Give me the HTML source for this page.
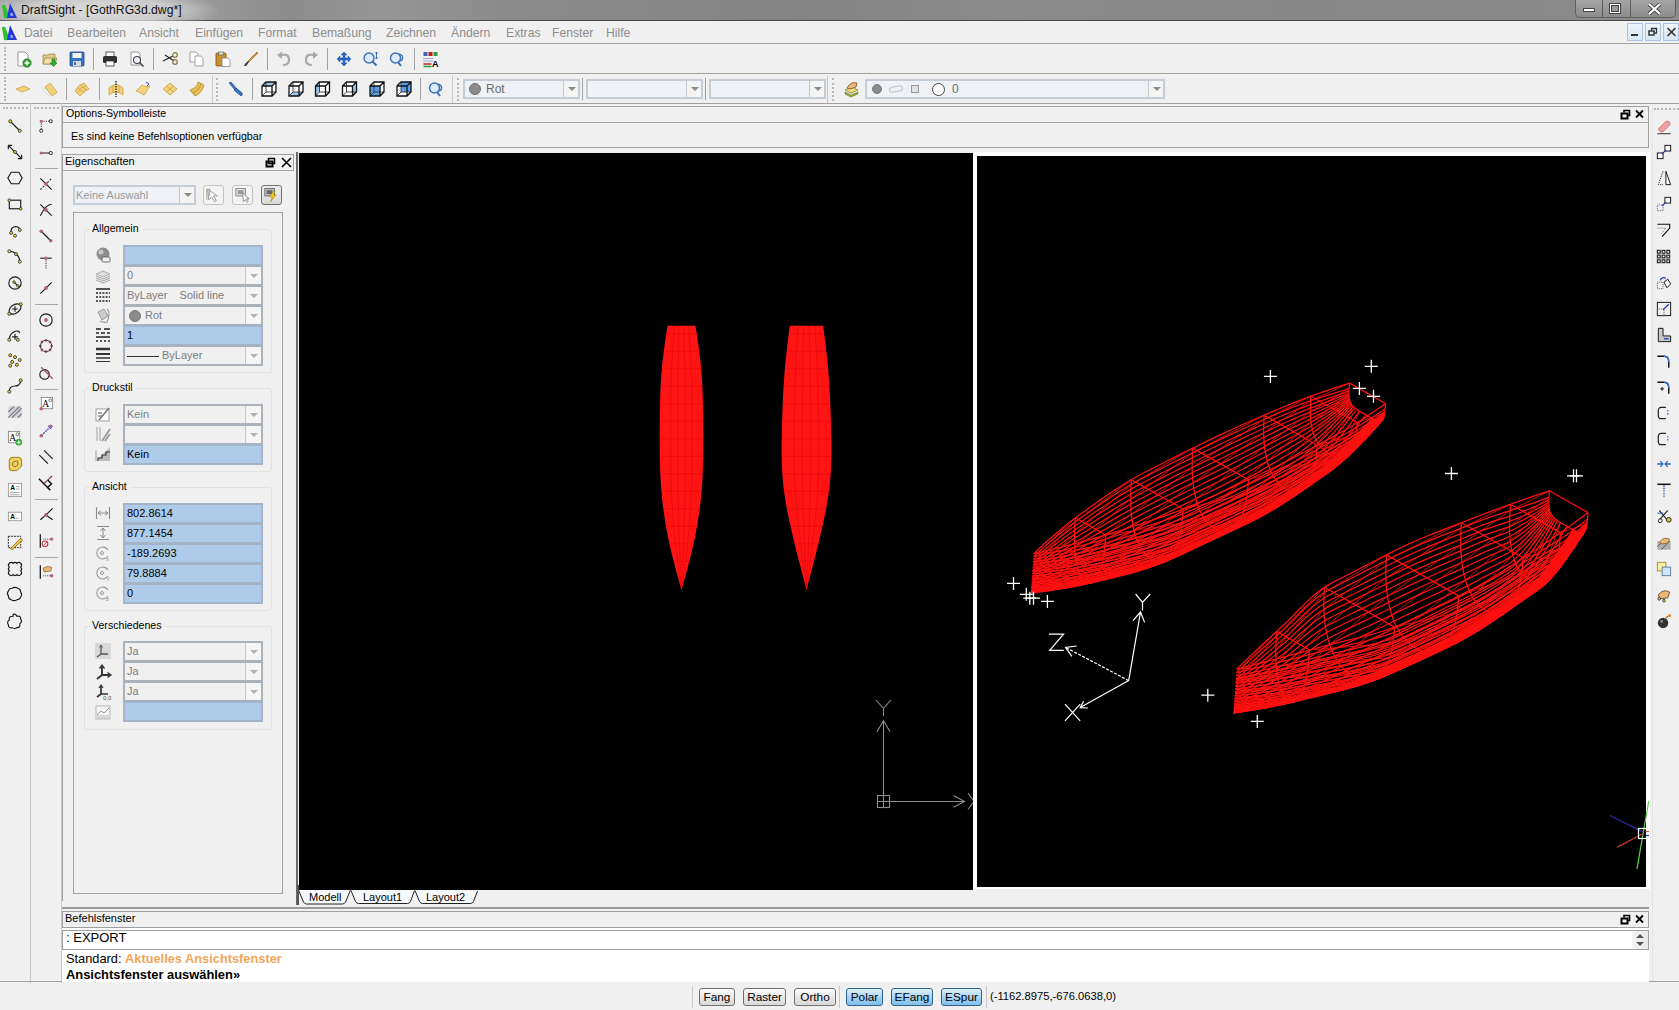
<!DOCTYPE html>
<html><head><meta charset="utf-8">
<style>
*{box-sizing:border-box;margin:0;padding:0}
html,body{width:1679px;height:1010px;overflow:hidden;background:#f0f0f0;font-family:"Liberation Sans",sans-serif;font-size:12px;color:#000}
.a{position:absolute}
#title{left:0;top:0;width:1679px;height:21px;background:linear-gradient(90deg,#a2a2a2 0,#9a9a9a 200px,#8c8c8c 290px,#969696 380px,#8a8a8a 520px,#848484 800px,#8a8a8a 1000px,#878787 1300px,#8a8a8a 1679px);border-bottom:1px solid #4a4a4a}
#title .t{left:21px;top:3px;font-size:12.2px;color:#111}
#menu{left:0;top:21px;width:1679px;height:23px;background:#f0f0f0;border-bottom:1px solid #a0a0a0}
#menu span{position:absolute;top:5px;color:#8d8d8d;font-size:12.2px}
.tb{left:0;width:1679px;height:30px;background:#f0f0f0;border-bottom:1px solid #a0a0a0}
.sep{position:absolute;width:1px;background:#a0a0a0}
.grip{position:absolute;width:2px;border-left:2px dotted #b8b8b8}
.combo{position:absolute;height:19px;border:2px solid #c4cdd6;background:#eef2f7;font-size:12px;color:#6d6d6d}
.combo .dd{position:absolute;right:0;top:0;width:15px;height:15px;border-left:1px solid #c8c8c8;background:#f4f4f4}
.combo .dd:after{content:"";position:absolute;left:4px;top:6px;border-left:4px solid transparent;border-right:4px solid transparent;border-top:4px solid #8a8a8a}
.vp{position:absolute;background:#000}
.field{position:absolute;left:123px;width:140px;height:21px;border:2px solid #a9b1ba;background:#f0f0f0;color:#7d7d7d;font-size:11px;padding:2px 0 0 2px;white-space:nowrap}
.field.b{background:#aecbea;color:#000;border-color:#a4b4c6}
.field .dd{position:absolute;right:0;top:0;width:16px;height:17px;border-left:1px solid #c8c8c8;background:#f5f5f5}
.field .dd:after{content:"";position:absolute;left:4px;top:7px;border-left:4px solid transparent;border-right:4px solid transparent;border-top:4px solid #b0b0b0}
.grp{position:absolute;left:84px;width:188px;border:1px solid #e2e2e2;border-radius:3px}
.gl{position:absolute;left:91px;font-size:10.6px;background:#f0f0f0;padding:0 3px 0 1px}
.btn{position:absolute;top:988px;height:18px;border:1px solid #707070;border-radius:3px;background:linear-gradient(#fafafa,#e8e8e8 50%,#d8d8d8);font-size:11.8px;text-align:center;padding-top:1px}
.btn.on{border-color:#2c628b;background:linear-gradient(#e0f0fb,#a8d4f4 50%,#80c0ec)}
</style></head><body>

<!-- title bar -->
<div id="title" class="a">
  <div class="a" style="left:0;top:0;width:260px;height:21px;background:radial-gradient(ellipse 120px 22px at 100px 11px,rgba(222,222,222,0.95) 0%,rgba(215,215,215,0.8) 60%,rgba(200,200,200,0) 100%)"></div>
  <svg class="a" style="left:1px;top:2px" width="16" height="17"><path d="M1 4 Q1 2 4 3 L9 15 Q6 17 3 16 Z" fill="#30c030"/><polygon points="9,1 16,16 6,16" fill="#2038d8"/><text x="9" y="14" font-size="6" fill="#fff" font-family="Liberation Sans">s</text></svg>
  <div class="a t">DraftSight - [GothRG3d.dwg*]</div>
  <div class="a" style="left:1575px;top:0;width:101px;height:18px;border:1px solid #5e5e5e;border-top:none;border-radius:0 0 5px 5px;background:linear-gradient(#a4a4a4,#8c8c8c)"></div>
  <div class="a" style="left:1602px;top:0;width:1px;height:17px;background:#5e5e5e"></div>
  <div class="a" style="left:1630px;top:0;width:1px;height:17px;background:#5e5e5e"></div>
  <div class="a" style="left:1583px;top:8px;width:12px;height:4px;background:#fff;border:1px solid #444"></div>
  <div class="a" style="left:1609px;top:3px;width:12px;height:11px;border:1px solid #444;background:#fff"></div>
  <div class="a" style="left:1611px;top:5px;width:8px;height:7px;border:1px solid #444;background:#9a9a9a"></div>
  <svg class="a" style="left:1647px;top:3px" width="15" height="12"><path d="M2 1 L13 11 M13 1 L2 11" stroke="#444" stroke-width="4"/><path d="M2 1 L13 11 M13 1 L2 11" stroke="#fff" stroke-width="2.2"/></svg>
</div>

<!-- menu bar -->
<div id="menu" class="a">
  <svg class="a" style="left:1px;top:3px" width="16" height="17"><path d="M1 4 Q1 2 4 3 L9 15 Q6 17 3 16 Z" fill="#30c030"/><polygon points="9,1 16,16 6,16" fill="#2038d8"/><text x="9" y="14" font-size="6" fill="#fff" font-family="Liberation Sans">s</text></svg>
  <span style="left:24px">Datei</span>
  <span style="left:67px">Bearbeiten</span>
  <span style="left:139px">Ansicht</span>
  <span style="left:195px">Einfügen</span>
  <span style="left:258px">Format</span>
  <span style="left:312px">Bemaßung</span>
  <span style="left:386px">Zeichnen</span>
  <span style="left:451px">Ändern</span>
  <span style="left:506px">Extras</span>
  <span style="left:552px">Fenster</span>
  <span style="left:606px">Hilfe</span>
  <div class="a" style="left:1627px;top:2px;width:16px;height:18px;border:1px solid #a8c4e0;background:linear-gradient(#eef4fb,#d8e6f4)"></div>
  <div class="a" style="left:1631px;top:13px;width:7px;height:2px;background:#333"></div>
  <div class="a" style="left:1645px;top:2px;width:16px;height:18px;border:1px solid #a8c4e0;background:linear-gradient(#eef4fb,#d8e6f4)"></div>
  <svg class="a" style="left:1648px;top:6px" width="11" height="10"><rect x="1" y="4" width="5" height="4" fill="none" stroke="#333" stroke-width="1.5"/><path d="M3.5 3.5 V1.5 H8.5 V6 H6.5" fill="none" stroke="#333" stroke-width="1.3"/></svg>
  <div class="a" style="left:1663px;top:2px;width:16px;height:18px;border:1px solid #a8c4e0;background:linear-gradient(#eef4fb,#d8e6f4)"></div>
  <svg class="a" style="left:1666px;top:6px" width="11" height="10"><path d="M1.5 1 L9.5 9 M9.5 1 L1.5 9" stroke="#333" stroke-width="1.6"/></svg>
</div>

<!-- toolbar rows -->
<div class="a tb" style="top:44px"></div>
<div class="a tb" style="top:74px"></div>
<div class="grip" style="left:4px;top:47px;height:24px"></div>
<div class="grip" style="left:4px;top:77px;height:24px"></div>


<!-- toolbar 2 combos -->
<div class="a" style="left:212px;top:76px;width:1px;height:27px;background:#c8c8c8"></div>
<div class="grip" style="left:216px;top:78px;height:23px"></div>
<div class="a" style="left:452px;top:76px;width:1px;height:27px;background:#c8c8c8"></div>
<div class="grip" style="left:457px;top:78px;height:23px"></div>
<div class="combo" style="left:463px;top:79px;width:117px;height:20px"><span class="a" style="left:4px;top:2px;width:12px;height:12px;border-radius:50%;background:#8a8a8a;border:1px solid #707070"></span><span class="a" style="left:21px;top:1px;font-size:12px;color:#6a6a6a">Rot</span><div class="dd" style="height:16px"></div></div>
<div class="a" style="left:582px;top:78px;width:1px;height:22px;background:#a0a0a0"></div>
<div class="combo" style="left:586px;top:79px;width:117px;height:20px"><div class="dd" style="height:16px"></div></div>
<div class="a" style="left:705px;top:78px;width:1px;height:22px;background:#a0a0a0"></div>
<div class="combo" style="left:709px;top:79px;width:117px;height:20px"><div class="dd" style="height:16px"></div></div>
<div class="a" style="left:827px;top:76px;width:1px;height:27px;background:#c8c8c8"></div>
<div class="grip" style="left:832px;top:78px;height:23px"></div>
<div class="combo" style="left:865px;top:79px;width:300px;height:20px"><div class="dd" style="height:16px"></div>
 <span class="a" style="left:5px;top:3px;width:10px;height:10px;border-radius:50%;background:#8a8a8a;border:1px solid #777"></span>
 <span class="a" style="left:22px;top:5px;width:14px;height:6px;border-radius:3px;border:1px solid #c0c0c0;transform:rotate(-10deg)"></span>
 <span class="a" style="left:44px;top:4px;width:8px;height:8px;border:1px solid #999;background:#e0e0e0"></span>
 <span class="a" style="left:65px;top:2px;width:13px;height:13px;border-radius:50%;border:1px solid #444;background:#fff"></span>
 <span class="a" style="left:85px;top:1px;font-size:12px;color:#6a6a6a">0</span>
</div>

<!-- Options-Symbolleiste -->
<div class="a" style="left:62px;top:106px;width:1587px;height:17px;border:1px solid #a0a0a0;border-bottom:1px solid #a0a0a0;background:#f0f0f0"></div>
<div class="a" style="left:66px;top:107px;font-size:10.6px">Options-Symbolleiste</div>
<div class="a" style="left:62px;top:123px;width:1587px;height:25px;border:1px solid #a0a0a0;border-top:none;background:#f0f0f0"></div>
<div class="a" style="left:71px;top:130px;font-size:10.7px">Es sind keine Befehlsoptionen verfügbar</div>

<!-- left tool columns -->
<div class="a" style="left:30px;top:103px;width:1px;height:880px;background:#c8c8c8"></div>
<div class="a" style="left:61px;top:103px;width:1px;height:880px;background:#c8c8c8"></div>

<!-- viewports -->
<div class="vp" style="left:299px;top:153px;width:674px;height:737px"></div>
<div class="a" style="left:973px;top:152px;width:677px;height:737px;background:#fff"></div>
<div class="vp" style="left:977px;top:156px;width:669px;height:731px"></div>



<!-- properties panel -->
<div class="a" style="left:62px;top:154px;width:232px;height:17px;border:1px solid #a0a0a0;background:#f0f0f0"></div>
<div class="a" style="left:65px;top:155px;font-size:11px">Eigenschaften</div>
<svg class="a" style="left:265px;top:157px" width="30" height="11"><rect x="1.5" y="4.5" width="6" height="5" fill="none" stroke="#000" stroke-width="2"/><rect x="3.5" y="1.5" width="6" height="5" fill="none" stroke="#000" stroke-width="1.5"/><path d="M17 1 L26 10 M26 1 L17 10" stroke="#000" stroke-width="1.6"/></svg>
<div class="a" style="left:296px;top:152px;width:2px;height:753px;background:#6a6a6a"></div>
<div class="a" style="left:62px;top:171px;width:1px;height:730px;background:#a0a0a0"></div>
<div class="combo" style="left:73px;top:185px;width:123px;height:20px"><span class="a" style="left:1px;top:2px;font-size:11px;color:#9a9a9a">Keine Auswahl</span><div class="dd" style="height:16px"></div></div>
<div class="a" style="left:203px;top:185px;width:21px;height:20px;border:1px solid #c4c4c4;border-radius:3px;background:#f4f4f4"></div>
<div class="a" style="left:232px;top:185px;width:21px;height:20px;border:1px solid #c4c4c4;border-radius:3px;background:#f4f4f4"></div>
<div class="a" style="left:261px;top:185px;width:21px;height:20px;border:1px solid #707070;border-radius:3px;background:linear-gradient(#f0f0f0,#d8d8d8)"></div>
<div class="a" style="left:73px;top:212px;width:210px;height:682px;border:1px solid #a0a0a0"></div>

<div class="grp" style="top:229px;height:144px"></div>
<div class="gl" style="top:222px">Allgemein</div>
<div class="field b" style="top:245px"></div>
<div class="field" style="top:265px">0<div class="dd"></div></div>
<div class="field" style="top:285px">ByLayer&nbsp;&nbsp;&nbsp;&nbsp;Solid line<div class="dd"></div></div>
<div class="field" style="top:305px;padding-left:20px">Rot<span class="a" style="left:4px;top:3px;width:12px;height:12px;border-radius:50%;background:#8a8a8a;border:1px solid #777"></span><div class="dd"></div></div>
<div class="field b" style="top:325px">1</div>
<div class="field" style="top:345px"><span style="display:inline-block;width:32px;height:1px;background:#333;vertical-align:middle;margin-right:3px"></span>ByLayer<div class="dd"></div></div>

<div class="grp" style="top:388px;height:84px"></div>
<div class="gl" style="top:381px">Druckstil</div>
<div class="field" style="top:404px">Kein<div class="dd"></div></div>
<div class="field" style="top:424px"><div class="dd"></div></div>
<div class="field b" style="top:444px">Kein</div>

<div class="grp" style="top:487px;height:124px"></div>
<div class="gl" style="top:480px">Ansicht</div>
<div class="field b" style="top:503px">802.8614</div>
<div class="field b" style="top:523px">877.1454</div>
<div class="field b" style="top:543px">-189.2693</div>
<div class="field b" style="top:563px">79.8884</div>
<div class="field b" style="top:583px">0</div>

<div class="grp" style="top:626px;height:104px"></div>
<div class="gl" style="top:619px">Verschiedenes</div>
<div class="field" style="top:641px">Ja<div class="dd"></div></div>
<div class="field" style="top:661px">Ja<div class="dd"></div></div>
<div class="field" style="top:681px">Ja<div class="dd"></div></div>
<div class="field b" style="top:701px"></div>

<!-- tabs -->
<div class="a" style="left:299px;top:890px;width:1351px;height:16px;background:#f0f0f0"></div>
<svg class="a" style="left:290px;top:885px" width="200" height="22"><g stroke="#222" stroke-width="1" fill="#f6f9fc">
<path d="M8.5 5 L13.5 17 Q14.5 19 16.5 19 L52.5 19 Q54.5 19 55.5 17 L60.5 5"/>
<path d="M61 5.5 L65.5 16.5 Q66.5 18.5 68.5 18.5 L117.5 18.5 Q119.5 18.5 120.5 16.5 L124.5 5.5"/>
<path d="M125 5.5 L129.5 16.5 Q130.5 18.5 132.5 18.5 L180.5 18.5 Q182.5 18.5 183.5 16.5 L187.5 6"/>
</g><path d="M8 0 V20" stroke="#555" stroke-width="2"/></svg>
<div class="a" style="left:309px;top:891px;font-size:11px">Modell</div>
<div class="a" style="left:363px;top:891px;font-size:11px">Layout1</div>
<div class="a" style="left:426px;top:891px;font-size:11px">Layout2</div>

<!-- command window -->
<div class="a" style="left:62px;top:907px;width:1587px;height:2px;background:#9a9a9a"></div>
<div class="a" style="left:62px;top:911px;width:1587px;height:17px;border:1px solid #a0a0a0;background:#f0f0f0"></div>
<div class="a" style="left:65px;top:912px;font-size:11px">Befehlsfenster</div>
<div class="a" style="left:62px;top:928px;width:1587px;height:54px;background:#fff"></div>
<div class="a" style="left:62px;top:930px;width:1587px;height:20px;border:1px solid #a0a0a0;border-right-color:#a0a0a0"></div>
<div class="a" style="left:66px;top:930px;font-size:13px">: EXPORT</div>
<div class="a" style="left:66px;top:951px;font-size:12.8px">Standard: <span style="color:#f2a65a;font-weight:bold">Aktuelles Ansichtsfenster</span></div>
<div class="a" style="left:66px;top:967px;font-size:12.9px;font-weight:bold">Ansichtsfenster auswählen»</div>

<!-- header icons / grips -->
<svg class="a" style="left:1620px;top:109px" width="26" height="11"><rect x="1.5" y="4.5" width="6" height="5" fill="none" stroke="#000" stroke-width="2"/><path d="M4 3.5 V1.5 H9.5 V6.5 H8" fill="none" stroke="#000" stroke-width="1.6"/><path d="M16 1.5 L23 8.5 M23 1.5 L16 8.5" stroke="#000" stroke-width="1.8"/></svg>
<svg class="a" style="left:1620px;top:914px" width="26" height="11"><rect x="1.5" y="4.5" width="6" height="5" fill="none" stroke="#000" stroke-width="2"/><path d="M4 3.5 V1.5 H9.5 V6.5 H8" fill="none" stroke="#000" stroke-width="1.6"/><path d="M16 1.5 L23 8.5 M23 1.5 L16 8.5" stroke="#000" stroke-width="1.8"/></svg>
<div class="a" style="left:1632px;top:931px;width:16px;height:18px;background:linear-gradient(90deg,#f4f4f4,#e8e8e8)"></div>
<svg class="a" style="left:1634px;top:933px" width="12" height="14"><path d="M2 5 L6 1 L10 5 Z" fill="#555"/><path d="M2 9 L6 13 L10 9 Z" fill="#555"/></svg>
<div class="a" style="left:1649px;top:981px;width:30px;height:1px;background:#a0a0a0"></div>
<div class="a" style="left:1652px;top:104px;width:1px;height:877px;background:#e4e4e4"></div>
<div class="a" style="left:0;top:981px;width:62px;height:1px;background:#a0a0a0"></div>
<div class="a" style="left:3px;top:107px;width:25px;height:2px;border-top:2px dotted #b8b8b8"></div>
<div class="a" style="left:34px;top:107px;width:25px;height:2px;border-top:2px dotted #b8b8b8"></div>
<div class="a" style="left:1654px;top:108px;width:25px;height:2px;border-top:2px dotted #b8b8b8"></div>
<div class="a" style="left:692px;top:986px;width:1px;height:22px;background:#c8c8c8"></div>
<div class="a" style="left:986px;top:986px;width:1px;height:22px;background:#c8c8c8"></div>

<!-- status bar -->
<div class="btn" style="left:699px;width:36px">Fang</div>
<div class="btn" style="left:743px;width:43px">Raster</div>
<div class="btn" style="left:794px;width:42px">Ortho</div>
<div class="a" style="left:839px;top:986px;width:1px;height:22px;background:#c8c8c8"></div>
<div class="btn on" style="left:846px;width:37px">Polar</div>
<div class="btn on" style="left:891px;width:42px">EFang</div>
<div class="btn on" style="left:941px;width:41px">ESpur</div>
<div class="a" style="left:990px;top:990px;font-size:11.2px">(-1162.8975,-676.0638,0)</div>
<svg class="a" style="left:0;top:0" width="1679" height="1010"><defs><clipPath id="cl"><rect x="299" y="153" width="674" height="736"/></clipPath><clipPath id="cr"><rect x="977" y="156" width="669" height="731"/></clipPath></defs><g clip-path="url(#cl)"><polygon points="695.5,325.8 696.2,330.3 696.9,334.8 697.5,339.2 698.2,343.7 698.8,348.2 699.4,352.7 699.9,357.1 700.5,361.6 700.9,366.1 701.3,370.6 701.7,375.1 702.0,379.5 702.2,384.0 702.5,388.5 702.6,393.0 702.8,397.4 702.9,401.9 703.0,406.4 703.1,410.9 703.2,415.4 703.2,419.8 703.2,424.3 703.3,428.8 703.3,433.3 703.3,437.7 703.3,442.2 703.3,446.7 703.3,451.2 703.2,455.7 703.1,460.1 703.0,464.6 702.9,469.1 702.7,473.6 702.5,478.1 702.2,482.5 701.9,487.0 701.5,491.5 701.1,496.0 700.7,500.4 700.2,504.9 699.6,509.4 699.0,513.9 698.3,518.4 697.6,522.8 696.9,527.3 696.0,531.8 695.2,536.3 694.2,540.7 693.3,545.2 692.2,549.7 691.1,554.2 690.0,558.7 688.9,563.1 687.7,567.6 686.5,572.1 685.3,576.6 684.0,581.0 682.8,585.5 681.5,590.0 681.5,590.0 680.2,585.5 679.0,581.0 677.7,576.6 676.5,572.1 675.3,567.6 674.1,563.1 673.0,558.7 671.9,554.2 670.8,549.7 669.7,545.2 668.8,540.7 667.8,536.3 667.0,531.8 666.1,527.3 665.4,522.8 664.7,518.4 664.0,513.9 663.4,509.4 662.8,504.9 662.3,500.4 661.9,496.0 661.5,491.5 661.1,487.0 660.8,482.5 660.5,478.1 660.3,473.6 660.1,469.1 660.0,464.6 659.9,460.1 659.8,455.7 659.7,451.2 659.7,446.7 659.7,442.2 659.7,437.7 659.7,433.3 659.7,428.8 659.8,424.3 659.8,419.8 659.8,415.4 659.9,410.9 660.0,406.4 660.1,401.9 660.2,397.4 660.4,393.0 660.5,388.5 660.8,384.0 661.0,379.5 661.3,375.1 661.7,370.6 662.1,366.1 662.5,361.6 663.1,357.1 663.6,352.7 664.2,348.2 664.8,343.7 665.5,339.2 666.1,334.8 666.8,330.3 667.5,325.8" fill="#ff1414"/><g stroke="#d80000" stroke-width="0.6" fill="none" opacity="0.7"><line x1="667.3" y1="333.8" x2="695.7" y2="333.8"/><line x1="664.8" y1="351.3" x2="698.2" y2="351.3"/><line x1="662.8" y1="368.8" x2="700.2" y2="368.8"/><line x1="661.6" y1="386.3" x2="701.4" y2="386.3"/><line x1="661.0" y1="403.8" x2="702.0" y2="403.8"/><line x1="660.8" y1="421.3" x2="702.2" y2="421.3"/><line x1="660.7" y1="438.8" x2="702.3" y2="438.8"/><line x1="660.8" y1="456.3" x2="702.2" y2="456.3"/><line x1="661.3" y1="473.8" x2="701.7" y2="473.8"/><line x1="662.4" y1="491.3" x2="700.6" y2="491.3"/><line x1="664.3" y1="508.8" x2="698.7" y2="508.8"/><line x1="667.0" y1="526.3" x2="696.0" y2="526.3"/><line x1="670.4" y1="543.8" x2="692.6" y2="543.8"/><line x1="674.6" y1="561.3" x2="688.4" y2="561.3"/><line x1="679.4" y1="578.8" x2="683.6" y2="578.8"/><polyline points="674.5,325.8 674.2,330.3 673.8,334.8 673.5,339.2 673.2,343.7 672.9,348.2 672.6,352.7 672.3,357.1 672.0,361.6 671.8,366.1 671.6,370.6 671.4,375.1 671.3,379.5 671.1,384.0 671.0,388.5 670.9,393.0 670.8,397.4 670.8,401.9 670.7,406.4 670.7,410.9 670.7,415.4 670.6,419.8 670.6,424.3 670.6,428.8 670.6,433.3 670.6,437.7 670.6,442.2 670.6,446.7 670.6,451.2 670.6,455.7 670.7,460.1 670.7,464.6 670.8,469.1 670.9,473.6 671.0,478.1 671.1,482.5 671.3,487.0 671.5,491.5 671.7,496.0 671.9,500.4 672.2,504.9 672.4,509.4 672.7,513.9 673.1,518.4 673.4,522.8 673.8,527.3 674.2,531.8 674.7,536.3 675.1,540.7 675.6,545.2 676.1,549.7 676.7,554.2 677.2,558.7 677.8,563.1 678.4,567.6 679.0,572.1 679.6,576.6 680.2,581.0 680.9,585.5 681.5,590.0"/><polyline points="679.1,325.8 679.0,330.3 678.9,334.8 678.8,339.2 678.7,343.7 678.6,348.2 678.5,352.7 678.4,357.1 678.3,361.6 678.2,366.1 678.1,370.6 678.1,375.1 678.0,379.5 678.0,384.0 677.9,388.5 677.9,393.0 677.9,397.4 677.9,401.9 677.8,406.4 677.8,410.9 677.8,415.4 677.8,419.8 677.8,424.3 677.8,428.8 677.8,433.3 677.8,437.7 677.8,442.2 677.8,446.7 677.8,451.2 677.8,455.7 677.8,460.1 677.8,464.6 677.9,469.1 677.9,473.6 677.9,478.1 678.0,482.5 678.0,487.0 678.1,491.5 678.2,496.0 678.2,500.4 678.3,504.9 678.4,509.4 678.5,513.9 678.6,518.4 678.8,522.8 678.9,527.3 679.0,531.8 679.2,536.3 679.3,540.7 679.5,545.2 679.7,549.7 679.9,554.2 680.1,558.7 680.2,563.1 680.4,567.6 680.7,572.1 680.9,576.6 681.1,581.0 681.3,585.5 681.5,590.0"/><polyline points="683.9,325.8 684.0,330.3 684.1,334.8 684.2,339.2 684.3,343.7 684.4,348.2 684.5,352.7 684.6,357.1 684.7,361.6 684.8,366.1 684.9,370.6 684.9,375.1 685.0,379.5 685.0,384.0 685.1,388.5 685.1,393.0 685.1,397.4 685.1,401.9 685.2,406.4 685.2,410.9 685.2,415.4 685.2,419.8 685.2,424.3 685.2,428.8 685.2,433.3 685.2,437.7 685.2,442.2 685.2,446.7 685.2,451.2 685.2,455.7 685.2,460.1 685.2,464.6 685.1,469.1 685.1,473.6 685.1,478.1 685.0,482.5 685.0,487.0 684.9,491.5 684.8,496.0 684.8,500.4 684.7,504.9 684.6,509.4 684.5,513.9 684.4,518.4 684.2,522.8 684.1,527.3 684.0,531.8 683.8,536.3 683.7,540.7 683.5,545.2 683.3,549.7 683.1,554.2 682.9,558.7 682.8,563.1 682.6,567.6 682.3,572.1 682.1,576.6 681.9,581.0 681.7,585.5 681.5,590.0"/><polyline points="688.5,325.8 688.8,330.3 689.2,334.8 689.5,339.2 689.8,343.7 690.1,348.2 690.4,352.7 690.7,357.1 691.0,361.6 691.2,366.1 691.4,370.6 691.6,375.1 691.7,379.5 691.9,384.0 692.0,388.5 692.1,393.0 692.2,397.4 692.2,401.9 692.3,406.4 692.3,410.9 692.3,415.4 692.4,419.8 692.4,424.3 692.4,428.8 692.4,433.3 692.4,437.7 692.4,442.2 692.4,446.7 692.4,451.2 692.4,455.7 692.3,460.1 692.3,464.6 692.2,469.1 692.1,473.6 692.0,478.1 691.9,482.5 691.7,487.0 691.5,491.5 691.3,496.0 691.1,500.4 690.8,504.9 690.6,509.4 690.3,513.9 689.9,518.4 689.6,522.8 689.2,527.3 688.8,531.8 688.3,536.3 687.9,540.7 687.4,545.2 686.9,549.7 686.3,554.2 685.8,558.7 685.2,563.1 684.6,567.6 684.0,572.1 683.4,576.6 682.8,581.0 682.1,585.5 681.5,590.0"/></g><polygon points="823.2,325.8 823.8,330.3 824.4,334.8 824.9,339.2 825.5,343.7 826.0,348.2 826.5,352.7 827.0,357.1 827.5,361.6 827.9,366.1 828.3,370.6 828.6,375.1 829.0,379.5 829.3,384.0 829.5,388.5 829.8,393.0 830.0,397.4 830.2,401.9 830.4,406.4 830.6,410.9 830.7,415.4 830.9,419.8 831.0,424.3 831.1,428.8 831.2,433.3 831.3,437.7 831.4,442.2 831.4,446.7 831.4,451.2 831.4,455.7 831.3,460.1 831.2,464.6 831.0,469.1 830.7,473.6 830.4,478.1 829.9,482.5 829.5,487.0 828.9,491.5 828.3,496.0 827.5,500.4 826.8,504.9 826.0,509.4 825.1,513.9 824.2,518.4 823.2,522.8 822.2,527.3 821.2,531.8 820.1,536.3 819.1,540.7 818.0,545.2 816.9,549.7 815.8,554.2 814.6,558.7 813.5,563.1 812.3,567.6 811.2,572.1 810.0,576.6 808.8,581.0 807.7,585.5 806.5,590.0 806.5,590.0 805.3,585.5 804.2,581.0 803.0,576.6 801.8,572.1 800.7,567.6 799.5,563.1 798.4,558.7 797.2,554.2 796.1,549.7 795.0,545.2 793.9,540.7 792.9,536.3 791.8,531.8 790.8,527.3 789.8,522.8 788.8,518.4 787.9,513.9 787.0,509.4 786.2,504.9 785.5,500.4 784.7,496.0 784.1,491.5 783.5,487.0 783.1,482.5 782.6,478.1 782.3,473.6 782.0,469.1 781.8,464.6 781.7,460.1 781.6,455.7 781.6,451.2 781.6,446.7 781.6,442.2 781.7,437.7 781.8,433.3 781.9,428.8 782.0,424.3 782.1,419.8 782.3,415.4 782.4,410.9 782.6,406.4 782.8,401.9 783.0,397.4 783.2,393.0 783.5,388.5 783.7,384.0 784.0,379.5 784.4,375.1 784.7,370.6 785.1,366.1 785.5,361.6 786.0,357.1 786.5,352.7 787.0,348.2 787.5,343.7 788.1,339.2 788.6,334.8 789.2,330.3 789.8,325.8" fill="#ff1414"/><g stroke="#d80000" stroke-width="0.6" fill="none" opacity="0.7"><line x1="789.7" y1="333.8" x2="823.3" y2="333.8"/><line x1="787.6" y1="351.3" x2="825.4" y2="351.3"/><line x1="785.9" y1="368.8" x2="827.1" y2="368.8"/><line x1="784.6" y1="386.3" x2="828.4" y2="386.3"/><line x1="783.7" y1="403.8" x2="829.3" y2="403.8"/><line x1="783.1" y1="421.3" x2="829.9" y2="421.3"/><line x1="782.7" y1="438.8" x2="830.3" y2="438.8"/><line x1="782.6" y1="456.3" x2="830.4" y2="456.3"/><line x1="783.3" y1="473.8" x2="829.7" y2="473.8"/><line x1="785.1" y1="491.3" x2="827.9" y2="491.3"/><line x1="787.9" y1="508.8" x2="825.1" y2="508.8"/><line x1="791.5" y1="526.3" x2="821.5" y2="526.3"/><line x1="795.7" y1="543.8" x2="817.3" y2="543.8"/><line x1="800.0" y1="561.3" x2="813.0" y2="561.3"/><line x1="804.6" y1="578.8" x2="808.4" y2="578.8"/><polyline points="798.1,325.8 797.8,330.3 797.6,334.8 797.3,339.2 797.0,343.7 796.7,348.2 796.5,352.7 796.2,357.1 796.0,361.6 795.8,366.1 795.6,370.6 795.4,375.1 795.3,379.5 795.1,384.0 795.0,388.5 794.9,393.0 794.7,397.4 794.6,401.9 794.6,406.4 794.5,410.9 794.4,415.4 794.3,419.8 794.3,424.3 794.2,428.8 794.1,433.3 794.1,437.7 794.1,442.2 794.0,446.7 794.0,451.2 794.1,455.7 794.1,460.1 794.2,464.6 794.3,469.1 794.4,473.6 794.6,478.1 794.8,482.5 795.0,487.0 795.3,491.5 795.6,496.0 796.0,500.4 796.4,504.9 796.8,509.4 797.2,513.9 797.7,518.4 798.1,522.8 798.6,527.3 799.2,531.8 799.7,536.3 800.2,540.7 800.8,545.2 801.3,549.7 801.9,554.2 802.4,558.7 803.0,563.1 803.6,567.6 804.2,572.1 804.7,576.6 805.3,581.0 805.9,585.5 806.5,590.0"/><polyline points="803.7,325.8 803.6,330.3 803.5,334.8 803.4,339.2 803.3,343.7 803.2,348.2 803.1,352.7 803.0,357.1 802.9,361.6 802.9,366.1 802.8,370.6 802.7,375.1 802.7,379.5 802.6,384.0 802.6,388.5 802.5,393.0 802.5,397.4 802.5,401.9 802.4,406.4 802.4,410.9 802.4,415.4 802.4,419.8 802.3,424.3 802.3,428.8 802.3,433.3 802.3,437.7 802.3,442.2 802.3,446.7 802.3,451.2 802.3,455.7 802.3,460.1 802.3,464.6 802.3,469.1 802.4,473.6 802.4,478.1 802.5,482.5 802.6,487.0 802.7,491.5 802.8,496.0 802.9,500.4 803.1,504.9 803.2,509.4 803.3,513.9 803.5,518.4 803.7,522.8 803.8,527.3 804.0,531.8 804.2,536.3 804.4,540.7 804.5,545.2 804.7,549.7 804.9,554.2 805.1,558.7 805.3,563.1 805.5,567.6 805.7,572.1 805.9,576.6 806.1,581.0 806.3,585.5 806.5,590.0"/><polyline points="809.3,325.8 809.4,330.3 809.5,334.8 809.6,339.2 809.7,343.7 809.8,348.2 809.9,352.7 810.0,357.1 810.1,361.6 810.1,366.1 810.2,370.6 810.3,375.1 810.3,379.5 810.4,384.0 810.4,388.5 810.5,393.0 810.5,397.4 810.5,401.9 810.6,406.4 810.6,410.9 810.6,415.4 810.6,419.8 810.7,424.3 810.7,428.8 810.7,433.3 810.7,437.7 810.7,442.2 810.7,446.7 810.7,451.2 810.7,455.7 810.7,460.1 810.7,464.6 810.7,469.1 810.6,473.6 810.6,478.1 810.5,482.5 810.4,487.0 810.3,491.5 810.2,496.0 810.1,500.4 809.9,504.9 809.8,509.4 809.7,513.9 809.5,518.4 809.3,522.8 809.2,527.3 809.0,531.8 808.8,536.3 808.6,540.7 808.5,545.2 808.3,549.7 808.1,554.2 807.9,558.7 807.7,563.1 807.5,567.6 807.3,572.1 807.1,576.6 806.9,581.0 806.7,585.5 806.5,590.0"/><polyline points="814.9,325.8 815.2,330.3 815.4,334.8 815.7,339.2 816.0,343.7 816.3,348.2 816.5,352.7 816.8,357.1 817.0,361.6 817.2,366.1 817.4,370.6 817.6,375.1 817.7,379.5 817.9,384.0 818.0,388.5 818.1,393.0 818.3,397.4 818.4,401.9 818.4,406.4 818.5,410.9 818.6,415.4 818.7,419.8 818.7,424.3 818.8,428.8 818.9,433.3 818.9,437.7 818.9,442.2 819.0,446.7 819.0,451.2 818.9,455.7 818.9,460.1 818.8,464.6 818.7,469.1 818.6,473.6 818.4,478.1 818.2,482.5 818.0,487.0 817.7,491.5 817.4,496.0 817.0,500.4 816.6,504.9 816.2,509.4 815.8,513.9 815.3,518.4 814.9,522.8 814.4,527.3 813.8,531.8 813.3,536.3 812.8,540.7 812.2,545.2 811.7,549.7 811.1,554.2 810.6,558.7 810.0,563.1 809.4,567.6 808.8,572.1 808.3,576.6 807.7,581.0 807.1,585.5 806.5,590.0"/></g><g stroke="#8c8c8c" stroke-width="1.1" fill="none"><rect x="877.5" y="795.5" width="12" height="12"/><path d="M883.5 795.5 V807.5 M877.5 801.5 H889.5"/><path d="M883.5 795 V720.5 M877 731.8 L883.5 720.5 L890 731.8"/><path d="M876 700 L883.5 708.3 L891 700 M883.5 708.3 V716"/><path d="M889.6 801.5 H964.5 M953.6 795.4 L964.5 801.5 L953.6 807.3"/><path d="M968 793 L980 809.5 M980 793 L968 809.5"/></g></g><g clip-path="url(#cr)"><g fill="none" stroke="#ff1010" stroke-width="1.25"><polygon fill="#ff1010" stroke="none" points="1031.1,591.3 1040.2,590.6 1049.3,589.7 1058.3,588.7 1067.3,587.5 1076.3,586.0 1085.2,584.2 1094.1,582.2 1102.9,580.2 1111.7,578.1 1120.5,576.0 1129.3,573.7 1138.0,571.2 1146.8,568.4 1155.4,565.2 1164.1,561.7 1172.6,557.8 1181.0,553.9 1189.5,549.9 1197.9,545.9 1206.3,542.0 1214.7,538.0 1223.1,534.0 1231.5,530.0 1239.8,526.0 1248.2,521.9 1256.5,517.6 1264.9,512.9 1273.2,507.8 1281.5,502.6 1289.8,497.1 1298.1,491.4 1306.4,485.5 1309.7,483.1 1313.1,480.8 1316.5,478.4 1319.9,476.0 1323.3,473.5 1326.7,470.9 1330.2,468.0 1333.6,465.0 1337.1,461.9 1340.6,458.6 1344.2,455.1 1347.7,451.6 1351.3,447.9 1354.8,444.2 1358.4,440.3 1362.0,436.4 1365.7,432.5 1369.3,428.5 1372.9,424.4 1376.6,420.4 1372.2,418.3 1368.3,422.4 1364.4,426.4 1360.6,430.4 1356.9,434.4 1353.1,438.3 1349.4,442.2 1345.7,446.0 1342.1,449.7 1338.4,453.4 1334.8,456.9 1331.3,460.2 1327.7,463.5 1324.2,466.5 1320.7,469.4 1317.2,472.1 1313.8,474.6 1310.4,477.1 1306.9,479.5 1303.6,481.9 1300.2,484.2 1291.8,490.1 1283.4,495.8 1275.0,501.3 1266.6,506.6 1258.2,511.6 1249.8,516.3 1241.5,520.7 1233.1,524.8 1224.8,528.8 1216.4,532.8 1208.0,536.8 1199.7,540.8 1191.3,544.8 1182.9,548.8 1174.6,552.8 1166.2,556.8 1157.8,560.7 1149.3,564.4 1140.9,567.6 1132.5,570.5 1124.0,573.2 1115.6,575.6 1107.2,577.9 1098.7,580.1 1090.3,582.3 1081.9,584.5 1073.4,586.4 1064.9,588.1 1056.4,589.5 1048.0,590.8 1039.5,591.9 1031.0,592.8"/><polyline points="1033.8,553.7 1044.7,551.2 1055.6,548.6 1066.3,545.9 1076.9,543.2 1087.3,540.3 1097.6,537.4 1107.7,534.4 1117.6,531.3 1127.5,528.2 1137.4,525.0 1147.2,521.8 1156.9,518.6 1166.5,515.3 1175.8,511.9 1185.0,508.3 1193.8,504.6 1202.5,500.7 1211.1,496.9 1219.6,493.0 1228.1,489.1 1236.7,485.2 1245.1,481.2 1253.6,477.3 1262.0,473.3 1270.3,469.3 1278.6,465.3 1286.8,461.2 1294.9,457.0 1303.0,452.8 1310.9,448.6 1318.8,444.4 1326.7,440.1 1329.9,438.4 1333.0,436.7 1336.1,434.9 1339.2,433.2 1342.4,431.5 1345.4,429.7 1348.5,428.0 1351.5,426.2 1354.4,424.3 1357.4,422.5 1360.3,420.7 1363.1,418.8 1366.0,416.9 1368.8,415.0 1371.6,413.1 1374.4,411.2 1377.2,409.3 1380.0,407.4 1382.7,405.4 1385.5,403.5"/><polyline points="1033.6,556.6 1044.5,554.2 1055.3,551.8 1066.0,549.4 1076.6,546.8 1087.0,544.2 1097.3,541.4 1107.4,538.5 1117.3,535.5 1127.2,532.5 1137.0,529.5 1146.8,526.4 1156.5,523.2 1166.1,520.0 1175.5,516.6 1184.6,513.1 1193.5,509.4 1202.1,505.5 1210.7,501.7 1219.2,497.8 1227.8,493.9 1236.3,489.9 1244.8,486.0 1253.2,482.1 1261.6,478.1 1270.0,474.1 1278.3,470.0 1286.5,465.9 1294.6,461.7 1302.6,457.4 1310.6,453.0 1318.5,448.7 1326.4,444.3 1329.5,442.5 1332.7,440.8 1335.8,439.0 1338.9,437.3 1342.0,435.7 1345.1,434.0 1348.1,432.2 1351.1,430.5 1354.1,428.8 1357.0,427.0 1359.9,425.3 1362.8,423.5 1365.6,421.7 1368.5,419.9 1371.3,418.1 1374.1,416.3 1376.8,414.5 1379.6,412.7 1382.4,410.8 1385.1,408.9"/><polyline points="1033.4,559.4 1044.3,557.3 1055.1,555.1 1065.8,552.8 1076.3,550.4 1086.7,547.9 1097.0,545.3 1107.1,542.5 1116.9,539.7 1126.8,536.8 1136.6,533.8 1146.4,530.9 1156.1,527.8 1165.7,524.7 1175.0,521.3 1184.2,517.8 1193.0,514.1 1201.7,510.3 1210.2,506.4 1218.8,502.5 1227.3,498.6 1235.8,494.7 1244.3,490.7 1252.8,486.8 1261.2,482.8 1269.5,478.8 1277.8,474.7 1286.0,470.5 1294.1,466.2 1302.2,461.9 1310.2,457.4 1318.1,452.9 1326.0,448.4 1329.1,446.6 1332.3,444.8 1335.4,443.0 1338.5,441.3 1341.7,439.6 1344.7,437.9 1347.8,436.2 1350.8,434.4 1353.7,432.6 1356.7,430.8 1359.6,429.0 1362.5,427.1 1365.3,425.3 1368.2,423.4 1371.0,421.5 1373.8,419.5 1376.6,417.5 1379.3,415.5 1382.1,413.4 1384.9,411.3"/><polyline points="1033.2,562.3 1044.0,560.4 1054.8,558.4 1065.5,556.3 1076.0,554.0 1086.4,551.7 1096.6,549.2 1106.6,546.5 1116.5,543.8 1126.3,541.0 1136.2,538.2 1145.9,535.3 1155.6,532.4 1165.1,529.3 1174.5,526.0 1183.6,522.5 1192.5,518.8 1201.1,514.9 1209.7,511.1 1218.3,507.2 1226.8,503.3 1235.3,499.3 1243.8,495.4 1252.2,491.5 1260.6,487.5 1269.0,483.5 1277.3,479.3 1285.5,475.1 1293.6,470.7 1301.7,466.3 1309.7,461.7 1317.6,457.1 1325.5,452.5 1328.7,450.6 1331.8,448.8 1334.9,447.0 1338.1,445.2 1341.2,443.5 1344.3,441.7 1347.3,439.9 1350.3,438.1 1353.3,436.2 1356.3,434.3 1359.2,432.4 1362.1,430.4 1365.0,428.4 1367.8,426.4 1370.6,424.3 1373.5,422.2 1376.3,420.0 1379.1,417.8 1381.9,415.5 1384.7,413.1"/><polyline points="1033.0,565.2 1043.8,563.4 1054.5,561.6 1065.1,559.7 1075.6,557.6 1086.0,555.4 1096.1,553.0 1106.2,550.5 1116.0,547.8 1125.8,545.2 1135.6,542.5 1145.4,539.7 1155.0,536.8 1164.5,533.8 1173.9,530.6 1183.0,527.1 1191.8,523.4 1200.5,519.5 1209.0,515.6 1217.6,511.8 1226.1,507.9 1234.6,503.9 1243.1,500.0 1251.5,496.0 1259.9,492.1 1268.3,488.0 1276.6,483.9 1284.8,479.6 1293.0,475.2 1301.0,470.6 1309.0,466.0 1317.0,461.2 1324.9,456.4 1328.1,454.5 1331.2,452.6 1334.4,450.8 1337.5,449.0 1340.6,447.2 1343.7,445.4 1346.8,443.5 1349.8,441.6 1352.8,439.6 1355.8,437.6 1358.7,435.5 1361.6,433.4 1364.5,431.3 1367.4,429.1 1370.3,426.9 1373.1,424.5 1376.0,422.2 1378.8,419.7 1381.6,417.2 1384.5,414.6"/><polyline points="1032.8,568.0 1043.5,566.5 1054.2,564.8 1064.7,563.1 1075.2,561.2 1085.5,559.1 1095.6,556.8 1105.6,554.4 1115.4,551.9 1125.2,549.3 1135.0,546.7 1144.7,544.0 1154.3,541.2 1163.8,538.3 1173.1,535.1 1182.2,531.6 1191.1,527.9 1199.7,524.0 1208.2,520.1 1216.8,516.3 1225.3,512.3 1233.8,508.4 1242.3,504.5 1250.7,500.5 1259.1,496.6 1267.5,492.5 1275.8,488.4 1284.0,484.0 1292.2,479.5 1300.2,474.9 1308.3,470.1 1316.2,465.3 1324.2,460.3 1327.3,458.4 1330.5,456.4 1333.7,454.6 1336.8,452.7 1340.0,450.8 1343.1,448.9 1346.1,447.0 1349.2,444.9 1352.2,442.8 1355.2,440.7 1358.2,438.5 1361.1,436.3 1364.0,434.0 1366.9,431.6 1369.8,429.2 1372.7,426.7 1375.6,424.1 1378.5,421.5 1381.3,418.7 1384.2,415.9"/><polyline points="1032.6,570.9 1043.2,569.5 1053.8,568.0 1064.3,566.4 1074.7,564.6 1084.9,562.7 1095.0,560.6 1105.0,558.2 1114.7,555.8 1124.5,553.3 1134.2,550.8 1143.9,548.3 1153.4,545.5 1162.9,542.6 1172.2,539.4 1181.3,536.0 1190.1,532.3 1198.7,528.4 1207.3,524.5 1215.8,520.6 1224.4,516.7 1232.9,512.8 1241.3,508.9 1249.8,504.9 1258.2,500.9 1266.5,496.9 1274.8,492.7 1283.1,488.3 1291.2,483.7 1299.3,479.0 1307.3,474.2 1315.3,469.2 1323.3,464.1 1326.5,462.1 1329.6,460.1 1332.8,458.2 1336.0,456.3 1339.1,454.4 1342.3,452.4 1345.4,450.3 1348.4,448.1 1351.5,445.9 1354.5,443.7 1357.5,441.3 1360.5,438.9 1363.4,436.5 1366.4,433.9 1369.3,431.3 1372.2,428.6 1375.2,425.9 1378.1,423.0 1381.0,420.1 1383.9,417.1"/><polyline points="1032.4,573.7 1043.0,572.5 1053.5,571.1 1063.9,569.7 1074.2,568.1 1084.3,566.2 1094.4,564.2 1104.2,562.0 1114.0,559.6 1123.6,557.3 1133.3,554.9 1142.9,552.4 1152.5,549.7 1161.9,546.8 1171.1,543.7 1180.2,540.3 1189.0,536.5 1197.6,532.7 1206.2,528.8 1214.7,524.9 1223.2,521.0 1231.7,517.0 1240.2,513.1 1248.6,509.1 1257.0,505.2 1265.4,501.1 1273.7,496.9 1281.9,492.5 1290.1,487.8 1298.2,483.0 1306.2,478.1 1314.3,473.0 1322.2,467.8 1325.4,465.7 1328.6,463.7 1331.8,461.7 1335.0,459.7 1338.2,457.7 1341.3,455.6 1344.4,453.5 1347.5,451.2 1350.6,448.9 1353.7,446.5 1356.7,444.0 1359.7,441.4 1362.7,438.8 1365.7,436.1 1368.7,433.3 1371.7,430.4 1374.6,427.4 1377.6,424.4 1380.6,421.3 1383.5,418.1"/><polyline points="1032.2,576.5 1042.6,575.4 1053.0,574.2 1063.4,572.9 1073.6,571.4 1083.6,569.7 1093.6,567.7 1103.4,565.6 1113.0,563.3 1122.7,561.1 1132.3,558.7 1141.8,556.3 1151.3,553.7 1160.7,550.9 1169.9,547.8 1178.9,544.4 1187.7,540.6 1196.3,536.7 1204.8,532.9 1213.4,529.0 1221.9,525.0 1230.4,521.1 1238.8,517.2 1247.3,513.2 1255.7,509.2 1264.0,505.2 1272.3,500.9 1280.6,496.4 1288.8,491.7 1296.9,486.9 1305.0,481.8 1313.0,476.6 1321.0,471.3 1324.2,469.2 1327.4,467.1 1330.6,465.0 1333.8,463.0 1337.0,460.9 1340.2,458.8 1343.3,456.5 1346.5,454.1 1349.6,451.6 1352.7,449.1 1355.8,446.5 1358.8,443.7 1361.9,440.9 1364.9,438.0 1368.0,435.0 1371.0,432.0 1374.0,428.8 1377.0,425.6 1380.1,422.3 1383.1,418.9"/><polyline points="1032.0,579.2 1042.3,578.3 1052.6,577.2 1062.8,576.0 1072.9,574.6 1082.9,573.0 1092.7,571.1 1102.4,569.1 1112.0,566.9 1121.5,564.7 1131.0,562.4 1140.5,560.1 1149.9,557.5 1159.2,554.8 1168.4,551.7 1177.4,548.3 1186.2,544.5 1194.8,540.6 1203.3,536.7 1211.8,532.8 1220.3,528.9 1228.8,525.0 1237.3,521.0 1245.7,517.0 1254.1,513.1 1262.4,509.0 1270.8,504.7 1279.0,500.2 1287.2,495.4 1295.3,490.5 1303.4,485.3 1311.5,480.0 1319.6,474.6 1322.8,472.5 1326.0,470.3 1329.2,468.2 1332.4,466.1 1335.7,463.9 1338.9,461.7 1342.1,459.3 1345.2,456.8 1348.4,454.2 1351.5,451.5 1354.7,448.7 1357.8,445.8 1360.9,442.9 1364.0,439.8 1367.1,436.6 1370.2,433.4 1373.3,430.1 1376.4,426.7 1379.5,423.2 1382.5,419.7"/><polyline points="1031.8,581.9 1042.0,581.0 1052.1,580.1 1062.1,579.0 1072.1,577.7 1082.0,576.2 1091.7,574.4 1101.3,572.3 1110.8,570.2 1120.2,568.1 1129.6,565.9 1139.0,563.6 1148.4,561.1 1157.6,558.4 1166.7,555.3 1175.7,551.9 1184.4,548.1 1193.0,544.2 1201.5,540.3 1210.0,536.4 1218.5,532.5 1227.0,528.5 1235.4,524.6 1243.8,520.6 1252.2,516.6 1260.6,512.6 1268.9,508.3 1277.2,503.7 1285.4,498.9 1293.5,493.8 1301.7,488.6 1309.8,483.2 1317.8,477.7 1321.1,475.5 1324.3,473.3 1327.6,471.1 1330.8,468.9 1334.1,466.7 1337.3,464.3 1340.5,461.9 1343.8,459.3 1347.0,456.5 1350.2,453.7 1353.4,450.8 1356.6,447.7 1359.7,444.6 1362.9,441.3 1366.1,438.0 1369.3,434.6 1372.4,431.1 1375.6,427.6 1378.7,424.0 1381.9,420.3"/><polyline points="1031.6,584.4 1041.6,583.7 1051.6,582.8 1061.4,581.8 1071.2,580.6 1080.9,579.1 1090.5,577.4 1100.0,575.4 1109.4,573.3 1118.7,571.3 1128.0,569.1 1137.3,566.9 1146.6,564.4 1155.7,561.7 1164.7,558.6 1173.6,555.2 1182.3,551.4 1190.9,547.5 1199.4,543.5 1207.9,539.6 1216.4,535.7 1224.8,531.7 1233.3,527.8 1241.7,523.8 1250.1,519.8 1258.4,515.8 1266.7,511.5 1275.0,506.8 1283.3,502.0 1291.4,496.9 1299.6,491.5 1307.7,486.1 1315.9,480.4 1319.1,478.2 1322.4,475.9 1325.6,473.7 1328.9,471.4 1332.2,469.2 1335.5,466.7 1338.8,464.1 1342.0,461.4 1345.3,458.6 1348.6,455.6 1351.8,452.5 1355.1,449.3 1358.4,446.0 1361.6,442.7 1364.9,439.2 1368.1,435.6 1371.4,432.0 1374.6,428.3 1377.9,424.5 1381.1,420.7"/><polyline points="1031.4,586.8 1041.2,586.1 1051.0,585.3 1060.6,584.4 1070.2,583.2 1079.7,581.7 1089.2,580.0 1098.5,578.1 1107.7,576.1 1116.9,574.0 1126.1,571.9 1135.3,569.7 1144.4,567.2 1153.5,564.5 1162.4,561.4 1171.3,558.0 1179.9,554.1 1188.4,550.2 1196.9,546.3 1205.4,542.4 1213.9,538.4 1222.3,534.5 1230.7,530.5 1239.1,526.5 1247.5,522.6 1255.9,518.5 1264.2,514.1 1272.5,509.5 1280.8,504.6 1289.0,499.4 1297.2,494.0 1305.4,488.5 1313.5,482.7 1316.8,480.4 1320.1,478.1 1323.4,475.8 1326.7,473.5 1330.0,471.2 1333.3,468.7 1336.7,466.0 1340.0,463.2 1343.3,460.2 1346.7,457.1 1350.0,453.9 1353.3,450.6 1356.7,447.2 1360.0,443.6 1363.4,440.0 1366.7,436.3 1370.1,432.6 1373.4,428.8 1376.8,424.9 1380.1,421.0"/><polyline points="1031.3,589.0 1040.8,588.3 1050.3,587.5 1059.7,586.6 1069.1,585.4 1078.4,584.0 1087.7,582.3 1096.8,580.3 1105.9,578.3 1114.9,576.3 1124.0,574.1 1133.0,571.9 1142.0,569.4 1150.9,566.7 1159.7,563.6 1168.5,560.1 1177.1,556.3 1185.6,552.4 1194.1,548.4 1202.5,544.5 1211.0,540.5 1219.4,536.6 1227.8,532.6 1236.2,528.6 1244.6,524.6 1252.9,520.6 1261.3,516.2 1269.6,511.5 1277.9,506.6 1286.1,501.3 1294.4,495.9 1302.6,490.3 1310.8,484.5 1314.1,482.1 1317.4,479.8 1320.7,477.4 1324.1,475.1 1327.5,472.7 1330.8,470.1 1334.2,467.3 1337.6,464.4 1341.0,461.4 1344.4,458.2 1347.8,454.9 1351.3,451.4 1354.7,447.9 1358.1,444.2 1361.6,440.5 1365.0,436.7 1368.5,432.8 1371.9,428.9 1375.4,425.0 1378.9,421.0"/><polyline points="1031.2,590.8 1040.4,590.1 1049.6,589.2 1058.7,588.2 1067.8,587.0 1076.9,585.6 1085.9,583.8 1094.9,581.8 1103.8,579.8 1112.6,577.8 1121.5,575.6 1130.3,573.4 1139.2,570.9 1148.0,568.1 1156.7,565.0 1165.3,561.5 1173.9,557.6 1182.4,553.6 1190.8,549.7 1199.2,545.7 1207.7,541.8 1216.1,537.8 1224.5,533.8 1232.8,529.8 1241.2,525.8 1249.6,521.8 1257.9,517.4 1266.2,512.7 1274.6,507.7 1282.9,502.4 1291.1,496.9 1299.4,491.3 1307.7,485.4 1311.0,483.0 1314.3,480.7 1317.7,478.3 1321.1,475.9 1324.5,473.5 1327.9,470.8 1331.3,468.0 1334.8,465.0 1338.3,461.9 1341.7,458.6 1345.2,455.2 1348.8,451.7 1352.3,448.0 1355.8,444.3 1359.4,440.5 1362.9,436.6 1366.5,432.7 1370.1,428.7 1373.7,424.7 1377.3,420.6"/><polyline points="1031.1,592.1 1039.9,591.3 1048.8,590.4 1057.6,589.3 1066.5,588.0 1075.3,586.4 1084.0,584.6 1092.7,582.6 1101.4,580.5 1110.1,578.4 1118.7,576.2 1127.4,573.8 1136.0,571.3 1144.7,568.5 1153.3,565.3 1161.8,561.7 1170.3,557.8 1178.7,553.8 1187.1,549.9 1195.5,545.9 1203.9,541.9 1212.3,537.9 1220.7,533.9 1229.1,530.0 1237.4,526.0 1245.8,521.9 1254.1,517.5 1262.5,512.8 1270.8,507.8 1279.2,502.5 1287.5,497.0 1295.9,491.3 1304.2,485.4 1307.5,483.0 1310.9,480.6 1314.3,478.2 1317.7,475.8 1321.1,473.3 1324.6,470.7 1328.1,467.8 1331.6,464.7 1335.1,461.6 1338.6,458.2 1342.2,454.8 1345.8,451.2 1349.4,447.5 1353.0,443.7 1356.7,439.9 1360.4,435.9 1364.1,432.0 1367.8,428.0 1371.5,423.9 1375.3,419.9"/><polyline points="1031.0,592.8 1039.5,591.8 1048.0,590.8 1056.5,589.5 1065.0,588.1 1073.5,586.4 1082.0,584.5 1090.5,582.3 1098.9,580.1 1107.4,577.9 1115.8,575.7 1124.3,573.2 1132.7,570.6 1141.2,567.7 1149.6,564.5 1158.1,560.8 1166.5,556.9 1174.9,552.9 1183.2,548.9 1191.6,544.9 1200.0,540.9 1208.4,536.9 1216.7,532.9 1225.1,528.9 1233.4,524.9 1241.8,520.8 1250.1,516.4 1258.5,511.7 1266.9,506.7 1275.3,501.4 1283.7,495.9 1292.1,490.2 1300.5,484.4 1303.8,482.0 1307.2,479.6 1310.6,477.2 1314.1,474.8 1317.5,472.3 1321.0,469.5 1324.5,466.6 1328.0,463.6 1331.6,460.4 1335.1,457.0 1338.7,453.5 1342.4,449.9 1346.0,446.2 1349.7,442.4 1353.4,438.5 1357.1,434.5 1360.9,430.6 1364.7,426.5 1368.6,422.5 1372.4,418.5"/><polyline points="1031.0,593.0 1039.1,591.8 1047.3,590.6 1055.4,589.1 1063.6,587.5 1071.8,585.7 1080.0,583.6 1088.2,581.3 1096.4,579.0 1104.7,576.7 1112.9,574.3 1121.1,571.7 1129.4,569.0 1137.6,566.0 1145.9,562.7 1154.3,559.0 1162.6,555.0 1170.9,551.0 1179.3,547.0 1187.6,543.0 1196.0,539.0 1204.3,534.9 1212.7,530.9 1221.0,526.9 1229.3,522.9 1237.7,518.8 1246.1,514.4 1254.5,509.7 1262.9,504.7 1271.3,499.5 1279.7,494.0 1288.2,488.3 1296.7,482.5 1300.1,480.1 1303.5,477.7 1306.9,475.3 1310.3,472.9 1313.7,470.3 1317.1,467.6 1320.5,464.6 1324.0,461.5 1327.4,458.2 1330.9,454.8 1334.4,451.2 1337.9,447.5 1341.3,443.7 1344.8,439.7 1348.4,435.7 1351.9,431.7 1355.4,427.5 1358.9,423.3 1362.4,419.1 1366.0,414.9"/><polyline points="1031.0,592.8 1038.8,591.4 1046.6,589.9 1054.4,588.3 1062.2,586.5 1070.1,584.5 1078.0,582.2 1086.0,579.8 1094.0,577.3 1102.0,574.9 1110.0,572.4 1118.0,569.7 1126.1,566.8 1134.2,563.7 1142.3,560.3 1150.5,556.6 1158.8,552.5 1167.1,548.5 1175.4,544.4 1183.7,540.4 1192.0,536.4 1200.3,532.4 1208.6,528.3 1217.0,524.3 1225.3,520.3 1233.7,516.2 1242.0,511.9 1250.4,507.2 1258.9,502.2 1267.4,497.0 1275.9,491.5 1284.4,485.9 1292.9,480.1 1296.3,477.7 1299.7,475.3 1303.1,472.9 1306.5,470.5 1309.9,467.9 1313.2,465.1 1316.6,462.2 1319.9,459.0 1323.3,455.7 1326.7,452.2 1330.0,448.6 1333.4,444.8 1336.7,440.9 1340.0,436.9 1343.3,432.8 1346.6,428.6 1349.9,424.3 1353.1,420.0 1356.3,415.6 1359.5,411.1"/><polyline points="1031.1,592.1 1038.5,590.4 1045.9,588.7 1053.4,586.9 1060.9,584.8 1068.5,582.6 1076.2,580.2 1083.9,577.5 1091.7,574.9 1099.4,572.3 1107.2,569.6 1115.1,566.8 1122.9,563.9 1130.8,560.6 1138.8,557.1 1146.9,553.3 1155.1,549.2 1163.4,545.1 1171.7,541.1 1179.9,537.1 1188.2,533.0 1196.5,529.0 1204.8,524.9 1213.1,520.9 1221.5,516.9 1229.8,512.8 1238.2,508.4 1246.6,503.8 1255.1,498.8 1263.6,493.7 1272.2,488.3 1280.7,482.7 1289.4,477.0 1292.8,474.7 1296.2,472.3 1299.6,469.9 1303.0,467.5 1306.4,465.0 1309.7,462.2 1313.1,459.3 1316.5,456.2 1319.9,452.9 1323.3,449.5 1326.6,445.9 1330.0,442.2 1333.4,438.4 1336.7,434.5 1340.1,430.5 1343.5,426.4 1346.8,422.2 1350.1,417.9 1353.4,413.7 1356.7,409.3"/><polyline points="1031.2,590.8 1038.2,588.9 1045.4,586.9 1052.5,584.7 1059.8,582.5 1067.1,580.0 1074.5,577.4 1082.0,574.5 1089.6,571.8 1097.2,569.0 1104.8,566.2 1112.4,563.2 1120.1,560.1 1127.9,556.7 1135.7,553.1 1143.7,549.2 1151.8,545.1 1160.1,541.0 1168.3,536.9 1176.6,532.9 1184.8,528.8 1193.1,524.8 1201.4,520.7 1209.7,516.7 1218.0,512.7 1226.3,508.6 1234.7,504.2 1243.2,499.6 1251.7,494.7 1260.2,489.6 1268.8,484.3 1277.5,478.8 1286.1,473.2 1289.6,470.9 1293.0,468.6 1296.5,466.3 1299.9,463.9 1303.3,461.4 1306.7,458.8 1310.1,455.9 1313.5,452.9 1316.9,449.8 1320.3,446.5 1323.8,443.0 1327.2,439.5 1330.7,435.8 1334.1,432.0 1337.5,428.1 1341.0,424.2 1344.4,420.2 1347.9,416.1 1351.3,412.0 1354.7,407.8"/><polyline points="1031.3,589.0 1038.1,586.8 1044.9,584.5 1051.8,582.1 1058.8,579.6 1065.9,576.9 1073.1,574.0 1080.4,571.0 1087.8,568.1 1095.3,565.1 1102.7,562.1 1110.2,559.0 1117.7,555.7 1125.3,552.2 1133.1,548.5 1141.0,544.5 1149.0,540.4 1157.2,536.3 1165.5,532.2 1173.7,528.1 1181.9,524.1 1190.2,520.0 1198.5,516.0 1206.7,511.9 1215.1,507.9 1223.4,503.8 1231.8,499.5 1240.2,494.9 1248.8,490.1 1257.4,485.0 1266.0,479.8 1274.7,474.4 1283.4,468.9 1286.9,466.7 1290.3,464.4 1293.8,462.1 1297.2,459.9 1300.6,457.5 1304.1,454.9 1307.5,452.2 1311.0,449.3 1314.5,446.3 1317.9,443.2 1321.4,439.9 1325.0,436.5 1328.5,433.0 1332.0,429.4 1335.5,425.7 1339.0,422.0 1342.6,418.2 1346.1,414.3 1349.7,410.4 1353.2,406.4"/><polyline points="1031.4,586.8 1038.0,584.3 1044.6,581.7 1051.3,579.1 1058.1,576.3 1065.0,573.4 1072.0,570.3 1079.2,567.1 1086.4,564.0 1093.7,560.8 1101.0,557.7 1108.3,554.4 1115.7,551.0 1123.3,547.4 1130.9,543.6 1138.7,539.5 1146.7,535.3 1154.9,531.2 1163.1,527.1 1171.3,523.1 1179.5,519.0 1187.8,514.9 1196.0,510.8 1204.3,506.8 1212.6,502.8 1221.0,498.7 1229.4,494.4 1237.8,489.8 1246.4,485.1 1255.0,480.1 1263.7,475.0 1272.4,469.7 1281.1,464.4 1284.6,462.2 1288.1,460.0 1291.6,457.8 1295.0,455.6 1298.5,453.3 1301.9,450.9 1305.4,448.3 1308.9,445.6 1312.5,442.7 1316.0,439.7 1319.6,436.7 1323.1,433.5 1326.7,430.2 1330.3,426.8 1333.9,423.3 1337.5,419.8 1341.2,416.2 1344.8,412.5 1348.4,408.8 1352.1,405.0"/><polyline points="1031.6,584.4 1038.0,581.6 1044.4,578.8 1050.9,575.8 1057.5,572.8 1064.3,569.7 1071.2,566.4 1078.2,563.0 1085.3,559.7 1092.5,556.4 1099.6,553.0 1106.9,549.6 1114.2,546.0 1121.6,542.3 1129.2,538.4 1136.9,534.4 1144.9,530.1 1153.0,526.0 1161.2,521.9 1169.4,517.8 1177.6,513.7 1185.8,509.7 1194.1,505.6 1202.4,501.5 1210.7,497.5 1219.0,493.4 1227.4,489.1 1235.9,484.6 1244.4,480.0 1253.1,475.1 1261.8,470.1 1270.5,464.9 1279.3,459.7 1282.8,457.6 1286.3,455.5 1289.8,453.3 1293.3,451.2 1296.7,449.0 1300.2,446.7 1303.8,444.3 1307.3,441.7 1310.9,439.0 1314.5,436.3 1318.1,433.4 1321.7,430.4 1325.3,427.3 1329.0,424.2 1332.7,420.9 1336.4,417.6 1340.0,414.2 1343.8,410.8 1347.5,407.3 1351.2,403.8"/><polyline points="1031.8,581.9 1038.0,578.8 1044.3,575.7 1050.6,572.5 1057.1,569.2 1063.7,565.8 1070.5,562.4 1077.4,558.8 1084.4,555.3 1091.5,551.8 1098.6,548.3 1105.7,544.7 1112.9,541.0 1120.3,537.2 1127.8,533.3 1135.5,529.1 1143.4,524.9 1151.6,520.7 1159.7,516.6 1167.9,512.5 1176.1,508.4 1184.3,504.4 1192.6,500.3 1200.8,496.2 1209.1,492.2 1217.4,488.1 1225.8,483.9 1234.3,479.4 1242.9,474.8 1251.6,470.0 1260.3,465.1 1269.0,460.1 1277.8,455.0 1281.3,452.9 1284.9,450.9 1288.4,448.9 1291.8,446.8 1295.3,444.7 1298.9,442.6 1302.4,440.3 1306.0,437.8 1309.6,435.3 1313.2,432.8 1316.9,430.1 1320.6,427.3 1324.3,424.5 1328.0,421.5 1331.7,418.5 1335.4,415.4 1339.2,412.3 1343.0,409.1 1346.7,405.8 1350.5,402.5"/><polyline points="1032.0,579.2 1038.1,575.8 1044.2,572.5 1050.5,569.0 1056.8,565.5 1063.3,561.9 1070.0,558.3 1076.8,554.5 1083.8,550.9 1090.8,547.3 1097.8,543.6 1104.8,539.8 1112.0,536.0 1119.3,532.1 1126.7,528.1 1134.4,523.9 1142.3,519.6 1150.4,515.5 1158.6,511.4 1166.7,507.2 1174.9,503.1 1183.1,499.1 1191.3,495.0 1199.6,490.9 1207.9,486.9 1216.2,482.8 1224.6,478.6 1233.1,474.2 1241.7,469.7 1250.4,465.0 1259.1,460.2 1267.9,455.3 1276.7,450.3 1280.2,448.3 1283.7,446.3 1287.2,444.4 1290.7,442.4 1294.3,440.5 1297.8,438.4 1301.4,436.2 1305.0,434.0 1308.6,431.7 1312.3,429.3 1316.0,426.8 1319.7,424.2 1323.4,421.6 1327.2,418.9 1330.9,416.1 1334.7,413.3 1338.5,410.4 1342.3,407.4 1346.2,404.3 1350.0,401.2"/><polyline points="1032.2,576.5 1038.1,572.8 1044.2,569.2 1050.4,565.5 1056.6,561.8 1063.1,558.0 1069.6,554.2 1076.4,550.3 1083.3,546.5 1090.2,542.7 1097.2,538.9 1104.2,535.0 1111.3,531.0 1118.5,527.0 1125.9,522.9 1133.5,518.6 1141.4,514.4 1149.5,510.2 1157.7,506.1 1165.8,502.0 1174.0,497.9 1182.2,493.8 1190.4,489.7 1198.7,485.7 1207.0,481.6 1215.3,477.6 1223.7,473.4 1232.2,469.0 1240.8,464.5 1249.4,460.0 1258.2,455.3 1267.0,450.5 1275.8,445.7 1279.3,443.7 1282.9,441.8 1286.4,440.0 1289.9,438.1 1293.4,436.2 1297.0,434.3 1300.6,432.2 1304.2,430.1 1307.9,428.0 1311.6,425.8 1315.3,423.5 1319.0,421.1 1322.8,418.7 1326.6,416.3 1330.4,413.7 1334.2,411.1 1338.0,408.4 1341.9,405.7 1345.7,402.9 1349.6,400.0"/><polyline points="1032.4,573.7 1038.3,569.8 1044.2,565.9 1050.3,562.0 1056.5,558.1 1062.9,554.1 1069.4,550.1 1076.1,546.0 1083.0,542.0 1089.8,538.1 1096.7,534.1 1103.7,530.1 1110.8,526.1 1117.9,521.9 1125.3,517.7 1132.9,513.5 1140.8,509.2 1148.9,505.0 1157.0,500.9 1165.1,496.8 1173.3,492.7 1181.5,488.6 1189.7,484.5 1198.0,480.4 1206.3,476.4 1214.6,472.4 1223.0,468.2 1231.5,463.9 1240.1,459.5 1248.8,455.0 1257.5,450.4 1266.3,445.8 1275.1,441.1 1278.7,439.2 1282.2,437.4 1285.7,435.6 1289.3,433.8 1292.8,432.0 1296.4,430.2 1300.0,428.3 1303.6,426.3 1307.3,424.3 1311.0,422.3 1314.7,420.2 1318.5,418.1 1322.3,415.9 1326.1,413.6 1329.9,411.3 1333.8,408.9 1337.6,406.5 1341.5,403.9 1345.4,401.4 1349.3,398.7"/><polyline points="1032.6,570.9 1038.4,566.7 1044.3,562.6 1050.4,558.5 1056.5,554.3 1062.8,550.2 1069.3,546.0 1075.9,541.8 1082.8,537.7 1089.6,533.6 1096.5,529.5 1103.4,525.3 1110.4,521.1 1117.6,516.9 1124.9,512.7 1132.5,508.4 1140.4,504.1 1148.4,499.9 1156.6,495.8 1164.7,491.6 1172.9,487.5 1181.0,483.4 1189.3,479.4 1197.5,475.3 1205.8,471.3 1214.1,467.2 1222.5,463.1 1231.0,458.8 1239.6,454.5 1248.3,450.1 1257.0,445.7 1265.8,441.1 1274.7,436.6 1278.2,434.8 1281.7,433.0 1285.3,431.2 1288.8,429.5 1292.4,427.8 1295.9,426.1 1299.6,424.3 1303.2,422.5 1306.9,420.7 1310.6,418.8 1314.4,416.9 1318.2,414.9 1322.0,412.9 1325.8,410.9 1329.6,408.8 1333.5,406.7 1337.4,404.4 1341.3,402.2 1345.2,399.8 1349.1,397.4"/><polyline points="1032.8,568.0 1038.6,563.7 1044.4,559.3 1050.4,554.9 1056.6,550.6 1062.8,546.2 1069.3,541.9 1075.9,537.5 1082.7,533.3 1089.5,529.1 1096.3,524.8 1103.2,520.5 1110.2,516.2 1117.4,511.9 1124.7,507.6 1132.3,503.3 1140.1,499.0 1148.2,494.8 1156.3,490.7 1164.4,486.6 1172.6,482.4 1180.8,478.3 1189.0,474.3 1197.2,470.2 1205.5,466.2 1213.8,462.1 1222.2,458.0 1230.7,453.8 1239.3,449.6 1248.0,445.3 1256.7,440.9 1265.5,436.5 1274.4,432.1 1277.9,430.4 1281.5,428.6 1285.0,427.0 1288.5,425.3 1292.1,423.7 1295.7,422.1 1299.3,420.4 1303.0,418.7 1306.7,417.0 1310.4,415.3 1314.2,413.6 1317.9,411.8 1321.8,410.0 1325.6,408.2 1329.4,406.3 1333.3,404.3 1337.2,402.4 1341.1,400.3 1345.0,398.2 1349.0,396.0"/><polyline points="1033.0,565.2 1038.7,560.6 1044.6,556.0 1050.6,551.4 1056.7,546.9 1062.9,542.3 1069.3,537.8 1075.9,533.3 1082.7,528.9 1089.5,524.6 1096.3,520.2 1103.2,515.8 1110.2,511.4 1117.3,507.0 1124.6,502.6 1132.2,498.3 1140.0,494.0 1148.0,489.8 1156.2,485.7 1164.3,481.5 1172.4,477.4 1180.6,473.3 1188.8,469.2 1197.1,465.2 1205.4,461.1 1213.7,457.1 1222.1,453.0 1230.6,448.9 1239.2,444.7 1247.9,440.5 1256.6,436.3 1265.4,432.0 1274.2,427.7 1277.8,426.0 1281.3,424.4 1284.9,422.8 1288.4,421.2 1292.0,419.6 1295.6,418.1 1299.2,416.5 1302.9,414.9 1306.6,413.4 1310.3,411.8 1314.1,410.2 1317.8,408.6 1321.7,407.0 1325.5,405.3 1329.4,403.7 1333.2,401.9 1337.1,400.2 1341.1,398.3 1345.0,396.4 1348.9,394.5"/><polyline points="1033.2,562.3 1038.9,557.5 1044.8,552.7 1050.7,547.9 1056.8,543.2 1063.0,538.5 1069.4,533.8 1076.0,529.2 1082.8,524.6 1089.6,520.1 1096.4,515.6 1103.2,511.1 1110.2,506.6 1117.3,502.2 1124.6,497.7 1132.2,493.3 1140.0,489.0 1148.1,484.9 1156.2,480.7 1164.3,476.6 1172.5,472.5 1180.6,468.4 1188.9,464.3 1197.1,460.2 1205.4,456.2 1213.7,452.1 1222.1,448.1 1230.6,444.0 1239.2,439.9 1247.9,435.8 1256.6,431.7 1265.4,427.5 1274.2,423.4 1277.8,421.7 1281.3,420.1 1284.9,418.6 1288.4,417.1 1292.0,415.6 1295.5,414.1 1299.2,412.6 1302.8,411.1 1306.6,409.7 1310.3,408.2 1314.1,406.8 1317.8,405.3 1321.7,403.9 1325.5,402.4 1329.4,400.9 1333.3,399.4 1337.1,397.8 1341.1,396.2 1345.0,394.6 1348.9,392.8"/><polyline points="1033.4,559.4 1039.1,554.4 1045.0,549.4 1050.9,544.4 1057.0,539.5 1063.2,534.6 1069.6,529.8 1076.2,525.0 1082.9,520.4 1089.7,515.8 1096.5,511.1 1103.4,506.5 1110.4,501.9 1117.5,497.3 1124.8,492.9 1132.3,488.4 1140.2,484.1 1148.2,480.0 1156.3,475.8 1164.4,471.7 1172.6,467.6 1180.8,463.5 1189.0,459.4 1197.2,455.3 1205.5,451.3 1213.8,447.2 1222.2,443.2 1230.7,439.2 1239.3,435.1 1248.0,431.1 1256.7,427.1 1265.5,423.1 1274.3,419.1 1277.9,417.5 1281.4,416.0 1285.0,414.4 1288.5,413.0 1292.1,411.5 1295.6,410.1 1299.3,408.7 1303.0,407.3 1306.7,405.9 1310.4,404.6 1314.2,403.2 1318.0,401.9 1321.8,400.6 1325.6,399.3 1329.5,397.9 1333.3,396.6 1337.2,395.2 1341.1,393.8 1345.1,392.4 1349.0,390.9"/><polyline points="1033.6,556.6 1039.3,551.3 1045.2,546.1 1051.1,540.9 1057.2,535.8 1063.4,530.8 1069.8,525.8 1076.4,520.9 1083.2,516.1 1090.0,511.4 1096.8,506.6 1103.7,501.9 1110.6,497.2 1117.7,492.6 1125.0,488.0 1132.6,483.6 1140.4,479.3 1148.5,475.1 1156.6,471.0 1164.7,466.8 1172.8,462.7 1181.0,458.6 1189.2,454.5 1197.5,450.5 1205.8,446.4 1214.1,442.4 1222.5,438.4 1231.0,434.4 1239.5,430.5 1248.2,426.5 1256.9,422.6 1265.7,418.7 1274.5,414.9 1278.1,413.3 1281.6,411.8 1285.1,410.3 1288.7,408.9 1292.2,407.4 1295.8,406.0 1299.5,404.7 1303.1,403.3 1306.9,402.0 1310.6,400.7 1314.4,399.4 1318.1,398.2 1322.0,397.0 1325.8,395.8 1329.6,394.6 1333.5,393.4 1337.4,392.2 1341.3,391.0 1345.2,389.8 1349.1,388.5"/><polyline points="1033.8,553.7 1039.6,548.2 1045.4,542.8 1051.4,537.4 1057.5,532.2 1063.7,527.0 1070.1,521.8 1076.7,516.8 1083.5,511.9 1090.3,507.1 1097.1,502.2 1104.0,497.3 1110.9,492.6 1118.1,487.9 1125.4,483.3 1132.9,478.8 1140.7,474.5 1148.8,470.3 1156.9,466.2 1165.0,462.0 1173.2,457.9 1181.3,453.8 1189.5,449.7 1197.8,445.7 1206.1,441.6 1214.4,437.6 1222.8,433.6 1231.3,429.7 1239.8,425.8 1248.5,422.0 1257.2,418.2 1266.0,414.4 1274.8,410.7 1278.3,409.2 1281.9,407.7 1285.4,406.2 1289.0,404.7 1292.5,403.2 1296.1,401.8 1299.8,400.3 1303.4,398.9 1307.2,397.5 1310.9,396.2 1314.7,394.8 1318.5,393.5 1322.3,392.1 1326.1,390.8 1330.0,389.5 1333.9,388.2 1337.8,386.9 1341.7,385.6 1345.6,384.4 1349.5,383.1"/><polyline points="1033.2,561.8 1044.1,559.8 1054.8,557.8 1065.5,555.7 1076.0,553.4 1086.4,551.0 1096.7,548.5 1106.7,545.8 1116.6,543.1 1126.4,540.3 1136.3,537.4 1146.0,534.6 1155.7,531.6 1165.2,528.5 1174.6,525.2 1183.7,521.7 1192.6,518.0 1201.2,514.1 1209.8,510.2 1218.4,506.3 1226.9,502.4 1235.4,498.5 1243.9,494.6 1252.3,490.6 1260.7,486.7 1269.1,482.6 1277.4,478.5 1285.6,474.3 1293.7,470.0 1301.8,465.5 1309.8,461.0 1317.7,456.4 1325.6,451.7 1328.8,449.9 1331.9,448.1 1335.0,446.3 1338.2,444.5 1341.3,442.8 1344.4,441.0 1347.4,439.2 1350.4,437.4 1353.4,435.6 1356.3,433.7 1359.3,431.8 1362.2,429.8 1365.0,427.9 1367.9,425.9 1370.7,423.8 1373.5,421.7 1376.3,419.6 1379.1,417.4 1381.9,415.1 1384.7,412.8"/><polyline points="1033.0,564.5 1043.9,562.7 1054.6,560.8 1065.2,558.8 1075.7,556.7 1086.1,554.5 1096.3,552.1 1106.3,549.5 1116.1,546.8 1126.0,544.1 1135.8,541.4 1145.5,538.6 1155.2,535.7 1164.7,532.7 1174.0,529.4 1183.2,525.9 1192.0,522.2 1200.6,518.4 1209.2,514.5 1217.8,510.6 1226.3,506.7 1234.8,502.8 1243.3,498.9 1251.7,494.9 1260.1,490.9 1268.5,486.9 1276.8,482.8 1285.0,478.5 1293.1,474.1 1301.2,469.5 1309.2,464.9 1317.2,460.2 1325.1,455.4 1328.2,453.5 1331.4,451.7 1334.5,449.9 1337.7,448.1 1340.8,446.3 1343.9,444.5 1346.9,442.6 1350.0,440.7 1352.9,438.8 1355.9,436.8 1358.8,434.8 1361.8,432.7 1364.6,430.6 1367.5,428.4 1370.4,426.2 1373.2,424.0 1376.1,421.7 1378.9,419.3 1381.7,416.8 1384.5,414.3"/><polyline points="1032.9,567.0 1043.6,565.3 1054.3,563.6 1064.9,561.8 1075.3,559.8 1085.7,557.7 1095.8,555.4 1105.8,552.9 1115.7,550.4 1125.4,547.8 1135.2,545.1 1144.9,542.4 1154.6,539.6 1164.1,536.6 1173.4,533.4 1182.5,529.9 1191.4,526.2 1200.0,522.3 1208.6,518.5 1217.1,514.6 1225.6,510.7 1234.1,506.8 1242.6,502.8 1251.0,498.9 1259.4,494.9 1267.8,490.9 1276.1,486.7 1284.3,482.4 1292.5,477.9 1300.5,473.3 1308.6,468.6 1316.5,463.8 1324.5,458.9 1327.6,456.9 1330.8,455.0 1333.9,453.2 1337.1,451.3 1340.2,449.5 1343.3,447.6 1346.4,445.7 1349.4,443.7 1352.4,441.6 1355.4,439.6 1358.4,437.4 1361.3,435.2 1364.2,433.0 1367.1,430.7 1370.0,428.3 1372.9,425.9 1375.7,423.4 1378.6,420.8 1381.5,418.2 1384.3,415.5"/><polyline points="1032.7,569.3 1043.4,567.9 1054.0,566.3 1064.6,564.6 1075.0,562.8 1085.2,560.8 1095.4,558.6 1105.3,556.2 1115.1,553.7 1124.9,551.2 1134.6,548.6 1144.3,546.0 1153.9,543.2 1163.4,540.3 1172.7,537.1 1181.8,533.6 1190.6,529.9 1199.3,526.1 1207.8,522.2 1216.4,518.3 1224.9,514.4 1233.4,510.5 1241.9,506.5 1250.3,502.6 1258.7,498.6 1267.1,494.6 1275.4,490.4 1283.6,486.0 1291.7,481.5 1299.8,476.8 1307.9,472.0 1315.8,467.1 1323.8,462.1 1327.0,460.1 1330.1,458.2 1333.3,456.2 1336.4,454.4 1339.6,452.5 1342.7,450.5 1345.8,448.5 1348.9,446.4 1351.9,444.3 1354.9,442.1 1357.9,439.8 1360.8,437.5 1363.8,435.1 1366.7,432.7 1369.6,430.2 1372.5,427.6 1375.4,424.9 1378.3,422.2 1381.2,419.4 1384.1,416.5"/><polyline points="1032.5,571.6 1043.2,570.3 1053.7,568.8 1064.2,567.3 1074.6,565.5 1084.8,563.6 1094.9,561.5 1104.8,559.2 1114.5,556.8 1124.3,554.4 1134.0,551.9 1143.6,549.3 1153.2,546.6 1162.6,543.7 1171.9,540.6 1181.0,537.1 1189.8,533.4 1198.4,529.5 1207.0,525.7 1215.6,521.8 1224.1,517.8 1232.6,513.9 1241.0,510.0 1249.5,506.0 1257.9,502.0 1266.2,498.0 1274.5,493.8 1282.8,489.4 1290.9,484.8 1299.0,480.1 1307.1,475.2 1315.1,470.2 1323.0,465.1 1326.2,463.1 1329.4,461.1 1332.6,459.1 1335.7,457.2 1338.9,455.2 1342.0,453.2 1345.1,451.1 1348.2,449.0 1351.3,446.7 1354.3,444.4 1357.3,442.0 1360.3,439.6 1363.3,437.1 1366.2,434.5 1369.2,431.8 1372.1,429.1 1375.0,426.3 1378.0,423.4 1380.9,420.4 1383.8,417.3"/><polyline points="1032.4,573.8 1042.9,572.6 1053.5,571.2 1063.9,569.8 1074.1,568.1 1084.3,566.3 1094.3,564.3 1104.2,562.1 1113.9,559.7 1123.6,557.4 1133.3,555.0 1142.9,552.5 1152.4,549.8 1161.8,546.9 1171.1,543.8 1180.2,540.4 1189.0,536.6 1197.6,532.8 1206.1,528.9 1214.7,525.0 1223.2,521.1 1231.7,517.2 1240.1,513.2 1248.6,509.3 1257.0,505.3 1265.3,501.2 1273.6,497.0 1281.9,492.6 1290.0,487.9 1298.2,483.1 1306.2,478.2 1314.2,473.1 1322.2,467.9 1325.4,465.8 1328.6,463.8 1331.8,461.8 1334.9,459.8 1338.1,457.8 1341.3,455.7 1344.4,453.6 1347.5,451.3 1350.6,449.0 1353.6,446.5 1356.7,444.1 1359.7,441.5 1362.7,438.8 1365.7,436.1 1368.7,433.3 1371.7,430.4 1374.6,427.5 1377.6,424.4 1380.6,421.3 1383.5,418.1"/><polyline points="1032.2,575.8 1042.7,574.7 1053.1,573.5 1063.5,572.1 1073.7,570.6 1083.8,568.9 1093.8,566.9 1103.6,564.7 1113.3,562.5 1122.9,560.2 1132.5,557.8 1142.1,555.4 1151.6,552.8 1161.0,549.9 1170.2,546.8 1179.2,543.4 1188.0,539.7 1196.6,535.8 1205.2,531.9 1213.7,528.0 1222.2,524.1 1230.7,520.2 1239.2,516.2 1247.6,512.3 1256.0,508.3 1264.4,504.2 1272.7,500.0 1280.9,495.5 1289.1,490.8 1297.2,486.0 1305.3,480.9 1313.3,475.8 1321.3,470.5 1324.5,468.4 1327.7,466.3 1330.9,464.3 1334.1,462.2 1337.3,460.2 1340.5,458.0 1343.6,455.8 1346.7,453.4 1349.9,451.0 1352.9,448.5 1356.0,445.9 1359.1,443.2 1362.1,440.4 1365.1,437.6 1368.2,434.6 1371.2,431.6 1374.2,428.5 1377.2,425.3 1380.2,422.1 1383.2,418.8"/><polyline points="1032.1,577.8 1042.5,576.8 1052.8,575.6 1063.1,574.4 1073.2,572.9 1083.3,571.3 1093.2,569.4 1103.0,567.2 1112.6,565.0 1122.1,562.8 1131.7,560.5 1141.2,558.1 1150.7,555.5 1160.0,552.7 1169.2,549.6 1178.2,546.2 1187.0,542.5 1195.6,538.6 1204.2,534.7 1212.7,530.8 1221.2,526.9 1229.7,522.9 1238.1,519.0 1246.5,515.0 1254.9,511.1 1263.3,507.0 1271.6,502.7 1279.9,498.2 1288.1,493.5 1296.2,488.6 1304.3,483.5 1312.3,478.3 1320.4,472.9 1323.6,470.7 1326.8,468.6 1330.0,466.5 1333.2,464.5 1336.4,462.4 1339.6,460.1 1342.8,457.8 1345.9,455.4 1349.1,452.9 1352.2,450.3 1355.3,447.5 1358.4,444.7 1361.5,441.8 1364.5,438.9 1367.6,435.8 1370.7,432.7 1373.7,429.4 1376.8,426.1 1379.8,422.8 1382.8,419.3"/><polyline points="1031.9,579.6 1042.3,578.7 1052.5,577.6 1062.7,576.4 1072.8,575.1 1082.7,573.5 1092.6,571.6 1102.3,569.5 1111.8,567.4 1121.3,565.2 1130.9,563.0 1140.3,560.6 1149.7,558.1 1159.0,555.3 1168.2,552.2 1177.2,548.8 1185.9,545.0 1194.5,541.2 1203.1,537.3 1211.6,533.4 1220.1,529.4 1228.5,525.5 1237.0,521.5 1245.4,517.6 1253.8,513.6 1262.2,509.6 1270.5,505.3 1278.8,500.7 1287.0,496.0 1295.1,491.0 1303.2,485.8 1311.3,480.5 1319.3,475.1 1322.5,472.9 1325.8,470.7 1329.0,468.6 1332.2,466.5 1335.4,464.4 1338.7,462.1 1341.8,459.7 1345.0,457.2 1348.2,454.6 1351.4,451.8 1354.5,449.0 1357.6,446.1 1360.8,443.1 1363.9,440.0 1367.0,436.9 1370.1,433.6 1373.2,430.3 1376.3,426.8 1379.4,423.3 1382.5,419.8"/><polyline points="1031.8,581.3 1042.1,580.5 1052.2,579.5 1062.3,578.4 1072.3,577.1 1082.1,575.5 1091.9,573.7 1101.5,571.7 1111.0,569.6 1120.5,567.4 1130.0,565.2 1139.4,562.9 1148.7,560.4 1158.0,557.7 1167.1,554.6 1176.0,551.2 1184.8,547.4 1193.4,543.5 1201.9,539.6 1210.4,535.7 1218.9,531.8 1227.4,527.8 1235.8,523.9 1244.2,519.9 1252.6,515.9 1261.0,511.9 1269.3,507.6 1277.6,503.0 1285.8,498.2 1293.9,493.2 1302.1,488.0 1310.2,482.6 1318.2,477.1 1321.4,474.9 1324.7,472.7 1327.9,470.5 1331.2,468.4 1334.4,466.2 1337.6,463.8 1340.9,461.4 1344.1,458.8 1347.3,456.1 1350.5,453.3 1353.7,450.4 1356.8,447.4 1360.0,444.2 1363.2,441.0 1366.3,437.8 1369.5,434.4 1372.6,430.9 1375.8,427.4 1378.9,423.8 1382.0,420.2"/><polyline points="1031.7,582.9 1041.8,582.2 1051.9,581.3 1061.9,580.2 1071.7,578.9 1081.5,577.4 1091.2,575.7 1100.8,573.6 1110.2,571.6 1119.6,569.5 1129.0,567.3 1138.4,565.0 1147.6,562.5 1156.8,559.8 1165.9,556.7 1174.8,553.3 1183.6,549.5 1192.1,545.6 1200.7,541.7 1209.2,537.8 1217.6,533.9 1226.1,529.9 1234.6,526.0 1243.0,522.0 1251.4,518.0 1259.7,514.0 1268.0,509.6 1276.3,505.1 1284.5,500.2 1292.7,495.1 1300.9,489.9 1309.0,484.4 1317.1,478.9 1320.3,476.6 1323.5,474.4 1326.8,472.2 1330.1,470.0 1333.3,467.8 1336.6,465.4 1339.8,462.8 1343.1,460.2 1346.3,457.4 1349.5,454.5 1352.8,451.5 1356.0,448.4 1359.2,445.2 1362.4,441.9 1365.6,438.5 1368.8,435.1 1372.0,431.5 1375.2,427.9 1378.4,424.2 1381.6,420.5"/><polyline points="1031.6,584.5 1041.6,583.7 1051.5,582.9 1061.4,581.8 1071.2,580.6 1080.9,579.1 1090.5,577.4 1100.0,575.4 1109.3,573.4 1118.7,571.3 1128.0,569.2 1137.3,566.9 1146.5,564.4 1155.7,561.7 1164.7,558.6 1173.6,555.2 1182.3,551.4 1190.9,547.5 1199.4,543.6 1207.9,539.7 1216.3,535.7 1224.8,531.8 1233.2,527.8 1241.6,523.9 1250.0,519.9 1258.4,515.8 1266.7,511.5 1275.0,506.9 1283.2,502.0 1291.4,496.9 1299.6,491.6 1307.7,486.1 1315.8,480.5 1319.1,478.2 1322.3,475.9 1325.6,473.7 1328.9,471.5 1332.2,469.2 1335.5,466.7 1338.7,464.2 1342.0,461.4 1345.3,458.6 1348.6,455.6 1351.8,452.5 1355.1,449.3 1358.3,446.1 1361.6,442.7 1364.8,439.2 1368.1,435.6 1371.3,432.0 1374.6,428.3 1377.8,424.5 1381.1,420.7"/><polyline points="1031.5,585.8 1041.4,585.1 1051.2,584.3 1061.0,583.3 1070.7,582.1 1080.3,580.7 1089.8,579.0 1099.2,577.0 1108.4,575.0 1117.7,572.9 1127.0,570.8 1136.2,568.6 1145.4,566.1 1154.4,563.4 1163.4,560.3 1172.3,556.9 1181.0,553.0 1189.5,549.1 1198.0,545.2 1206.5,541.3 1215.0,537.4 1223.4,533.4 1231.8,529.4 1240.2,525.5 1248.6,521.5 1257.0,517.4 1265.3,513.1 1273.6,508.5 1281.9,503.5 1290.1,498.4 1298.2,493.1 1306.4,487.5 1314.5,481.8 1317.8,479.5 1321.1,477.3 1324.4,475.0 1327.7,472.7 1331.0,470.4 1334.3,467.9 1337.6,465.3 1340.9,462.5 1344.2,459.6 1347.5,456.5 1350.8,453.4 1354.1,450.1 1357.4,446.7 1360.7,443.3 1364.0,439.7 1367.3,436.1 1370.6,432.4 1373.9,428.6 1377.3,424.8 1380.6,420.9"/><polyline points="1031.4,587.1 1041.2,586.4 1050.9,585.6 1060.5,584.7 1070.1,583.5 1079.6,582.1 1089.0,580.4 1098.3,578.4 1107.5,576.4 1116.7,574.3 1125.9,572.2 1135.0,570.0 1144.1,567.5 1153.2,564.8 1162.1,561.8 1170.9,558.3 1179.6,554.5 1188.1,550.6 1196.6,546.6 1205.1,542.7 1213.5,538.7 1222.0,534.8 1230.4,530.8 1238.8,526.9 1247.2,522.9 1255.5,518.8 1263.9,514.5 1272.2,509.8 1280.4,504.9 1288.6,499.7 1296.9,494.3 1305.0,488.7 1313.2,483.0 1316.5,480.7 1319.8,478.4 1323.1,476.1 1326.4,473.8 1329.7,471.4 1333.0,468.9 1336.4,466.2 1339.7,463.4 1343.1,460.4 1346.4,457.3 1349.7,454.1 1353.1,450.7 1356.4,447.3 1359.8,443.7 1363.2,440.1 1366.5,436.4 1369.9,432.6 1373.2,428.8 1376.6,424.9 1380.0,421.0"/><polyline points="1031.3,588.3 1041.0,587.6 1050.5,586.8 1060.0,585.8 1069.5,584.7 1078.9,583.3 1088.2,581.6 1097.4,579.6 1106.6,577.6 1115.7,575.6 1124.8,573.5 1133.8,571.2 1142.9,568.8 1151.8,566.0 1160.7,563.0 1169.5,559.5 1178.1,555.6 1186.6,551.7 1195.1,547.8 1203.6,543.8 1212.0,539.9 1220.5,535.9 1228.9,532.0 1237.3,528.0 1245.6,524.0 1254.0,519.9 1262.3,515.6 1270.7,510.9 1278.9,506.0 1287.2,500.8 1295.4,495.3 1303.6,489.7 1311.8,483.9 1315.1,481.6 1318.4,479.3 1321.7,477.0 1325.0,474.6 1328.4,472.2 1331.7,469.7 1335.1,466.9 1338.5,464.1 1341.9,461.0 1345.2,457.9 1348.6,454.6 1352.0,451.2 1355.4,447.7 1358.8,444.1 1362.2,440.4 1365.6,436.6 1369.1,432.8 1372.5,428.9 1375.9,425.0 1379.3,421.0"/><polyline points="1031.3,589.3 1040.7,588.6 1050.2,587.8 1059.6,586.9 1068.9,585.7 1078.2,584.3 1087.4,582.6 1096.5,580.6 1105.6,578.6 1114.6,576.6 1123.6,574.4 1132.6,572.2 1141.5,569.7 1150.4,567.0 1159.3,563.9 1168.0,560.4 1176.6,556.6 1185.1,552.6 1193.6,548.7 1202.0,544.8 1210.5,540.8 1218.9,536.8 1227.3,532.9 1235.7,528.9 1244.1,524.9 1252.4,520.8 1260.8,516.5 1269.1,511.8 1277.4,506.8 1285.6,501.6 1293.9,496.1 1302.1,490.5 1310.3,484.7 1313.6,482.3 1316.9,480.0 1320.3,477.6 1323.6,475.3 1327.0,472.9 1330.4,470.3 1333.8,467.5 1337.2,464.6 1340.6,461.5 1344.0,458.3 1347.4,455.0 1350.9,451.5 1354.3,447.9 1357.8,444.3 1361.2,440.5 1364.7,436.7 1368.2,432.8 1371.7,428.9 1375.2,424.9 1378.7,420.9"/><path stroke-width="0.8" d="M1033.8 553.7L1104.6 547.1M1033.2 562.3L1103.0 558.7M1032.6 570.9L1100.5 569.5M1032.0 579.2L1096.7 578.5M1031.4 586.8L1091.0 583.0M1031.1 592.1L1084.4 580.3M1031.0 592.8L1079.0 571.6M1031.3 589.0L1076.0 559.5M1031.8 581.9L1074.7 546.8M1032.4 573.7L1074.6 534.2M1033.0 565.2L1075.1 521.9M1033.6 556.6L1075.4 517.8M1105.7 535.0L1181.8 523.2M1104.6 547.1L1179.5 536.7M1103.0 558.7L1175.6 549.0M1100.5 569.5L1169.5 558.7M1096.7 578.5L1160.1 562.5M1091.0 583.0L1148.9 557.3M1084.4 580.3L1139.4 545.4M1079.0 571.6L1133.9 530.0M1076.0 559.5L1131.4 514.3M1074.7 546.8L1130.6 499.2M1074.6 534.2L1131.1 484.5M1075.1 521.9L1131.4 479.7M1183.2 509.0L1247.1 493.8M1181.8 523.2L1244.7 507.3M1179.5 536.7L1240.6 519.4M1175.6 549.0L1234.1 528.9M1169.5 558.7L1224.1 532.4M1160.1 562.5L1212.0 526.7M1148.9 557.3L1201.8 514.3M1139.4 545.4L1195.9 498.7M1133.9 530.0L1193.0 482.9M1131.4 514.3L1192.1 467.6M1130.6 499.2L1192.5 452.9M1131.1 484.5L1192.8 448.1M1248.5 479.7L1316.0 458.1M1247.1 493.8L1313.7 470.2M1244.7 507.3L1309.9 481.1M1240.6 519.4L1303.7 489.6M1234.1 528.9L1294.2 492.4M1224.1 532.4L1282.7 487.0M1212.0 526.7L1272.9 475.5M1201.8 514.3L1267.3 461.1M1195.9 498.7L1264.5 446.7M1193.0 482.9L1263.6 432.9M1192.1 467.6L1263.9 419.5M1192.5 452.9L1264.2 415.2M1317.3 445.2L1356.3 434.3M1316.0 458.1L1354.5 443.7M1313.7 470.2L1351.5 451.5M1309.9 481.1L1346.7 457.1M1303.7 489.6L1338.6 458.2M1294.2 492.4L1326.7 452.2M1282.7 487.0L1317.9 443.2M1272.9 475.5L1313.2 432.8M1267.3 461.1L1311.0 422.3M1264.5 446.7L1310.3 411.8M1263.6 432.9L1310.6 400.7M1263.9 419.5L1310.9 396.2M1357.4 422.5L1384.7 413.1M1356.3 434.3L1383.9 417.1M1354.5 443.7L1382.5 419.7M1351.5 451.5L1380.1 421.0M1346.7 457.1L1375.3 419.9M1338.6 458.2L1359.5 411.1M1326.7 452.2L1353.2 406.4M1317.9 443.2L1350.5 402.5M1313.2 432.8L1349.3 398.7M1311.0 422.3L1348.9 394.5M1310.3 411.8L1349.1 388.5M1310.6 400.7L1349.5 383.1"/><polyline points="1105.7,535.0 1105.2,541.4 1104.7,546.4 1104.2,550.9 1103.6,555.1 1103.0,558.9 1102.3,562.5 1101.5,565.8 1100.7,568.8 1099.8,571.6 1098.9,574.1 1097.9,576.2 1096.9,578.1 1095.8,579.7 1094.7,581.0 1093.5,582.0 1092.3,582.6 1091.1,583.0 1089.8,583.0 1088.3,582.6 1086.6,581.8 1084.8,580.6 1083.5,579.4 1082.3,578.0 1081.2,576.3 1080.1,574.4 1079.2,572.2 1078.3,569.8 1077.6,567.2 1076.9,564.3 1076.3,561.2 1075.8,558.0 1075.3,554.5 1075.0,550.8 1074.8,546.9 1074.6,542.9 1074.5,538.6 1074.6,534.1 1074.7,529.4 1074.9,524.2 1075.4,517.8"/><polyline points="1105.7,535.0 1075.4,517.8"/><polyline points="1183.2,509.0 1182.6,516.5 1181.9,522.4 1181.2,527.7 1180.4,532.5 1179.4,537.0 1178.4,541.1 1177.2,544.8 1175.9,548.3 1174.6,551.3 1173.1,554.0 1171.5,556.4 1169.9,558.3 1168.1,559.9 1166.3,561.2 1164.3,562.0 1162.3,562.4 1160.2,562.5 1158.0,562.1 1155.6,561.3 1152.6,559.8 1149.6,557.9 1147.3,556.0 1145.2,554.0 1143.2,551.6 1141.5,549.0 1139.8,546.2 1138.3,543.0 1136.9,539.6 1135.6,536.0 1134.5,532.1 1133.5,528.0 1132.7,523.7 1132.0,519.2 1131.4,514.5 1131.0,509.5 1130.7,504.4 1130.6,499.0 1130.7,493.3 1130.9,487.2 1131.4,479.7"/><polyline points="1183.2,509.0 1131.4,479.7"/><polyline points="1248.5,479.7 1247.9,487.1 1247.2,493.0 1246.5,498.3 1245.6,503.1 1244.6,507.6 1243.5,511.6 1242.3,515.3 1240.9,518.7 1239.5,521.7 1237.9,524.4 1236.3,526.7 1234.5,528.6 1232.6,530.1 1230.7,531.3 1228.6,532.0 1226.4,532.4 1224.2,532.4 1221.8,531.9 1219.2,531.0 1216.0,529.3 1212.8,527.3 1210.3,525.4 1208.0,523.2 1205.9,520.8 1204.0,518.1 1202.2,515.1 1200.6,511.9 1199.1,508.5 1197.7,504.8 1196.5,500.9 1195.4,496.7 1194.5,492.4 1193.7,487.8 1193.1,483.0 1192.6,478.1 1192.3,472.9 1192.1,467.5 1192.2,461.8 1192.4,455.7 1192.8,448.1"/><polyline points="1248.5,479.7 1192.8,448.1"/><polyline points="1317.3,445.2 1316.7,452.0 1316.1,457.3 1315.4,462.1 1314.6,466.4 1313.7,470.5 1312.6,474.1 1311.5,477.5 1310.2,480.5 1308.8,483.2 1307.3,485.5 1305.8,487.6 1304.1,489.3 1302.3,490.6 1300.5,491.6 1298.5,492.3 1296.5,492.5 1294.3,492.4 1292.0,492.0 1289.6,491.0 1286.5,489.5 1283.5,487.6 1281.1,485.8 1278.9,483.7 1276.9,481.5 1275.1,479.0 1273.4,476.3 1271.8,473.3 1270.3,470.1 1269.0,466.7 1267.8,463.2 1266.8,459.4 1265.9,455.4 1265.2,451.2 1264.5,446.9 1264.1,442.3 1263.8,437.6 1263.6,432.7 1263.6,427.6 1263.8,422.0 1264.2,415.2"/><polyline points="1317.3,445.2 1264.2,415.2"/><polyline points="1357.4,422.5 1356.8,429.2 1356.3,433.7 1355.8,437.5 1355.2,440.9 1354.4,443.9 1353.6,446.5 1352.8,448.9 1351.8,451.1 1350.7,452.9 1349.5,454.5 1348.3,455.9 1347.0,456.9 1345.5,457.7 1344.0,458.3 1342.4,458.6 1340.6,458.6 1338.8,458.2 1336.7,457.6 1334.3,456.6 1330.9,454.8 1327.4,452.7 1325.1,451.1 1323.1,449.4 1321.4,447.6 1319.8,445.7 1318.3,443.7 1317.0,441.6 1315.8,439.3 1314.7,436.8 1313.7,434.2 1312.9,431.5 1312.1,428.6 1311.5,425.6 1311.0,422.4 1310.7,419.0 1310.4,415.5 1310.3,411.7 1310.3,407.6 1310.5,402.9 1310.9,396.2"/><polyline points="1357.4,422.5 1310.9,396.2"/><polyline points="1385.5,403.5 1385.0,410.4 1384.7,412.8 1384.5,414.6 1384.2,416.0 1383.9,417.1 1383.5,418.1 1383.1,418.9 1382.7,419.6 1382.1,420.1 1381.6,420.5 1381.0,420.8 1380.3,420.9 1379.5,421.0 1378.7,420.9 1377.7,420.7 1376.6,420.4 1375.3,419.9 1373.8,419.2 1371.7,418.1 1366.0,414.9 1360.2,411.6 1358.2,410.3 1356.6,409.3 1355.4,408.4 1354.3,407.5 1353.4,406.6 1352.6,405.7 1351.9,404.9 1351.3,404.0 1350.8,403.0 1350.3,402.0 1349.9,401.0 1349.6,399.9 1349.3,398.7 1349.1,397.4 1349.0,396.0 1348.9,394.4 1348.9,392.5 1349.0,390.0 1349.5,383.1"/><polyline points="1385.5,403.5 1349.5,383.1"/></g><g fill="none" stroke="#ff1010" stroke-width="1.25"><polygon fill="#ff1010" stroke="none" points="1233.7,711.3 1242.7,710.3 1251.8,709.3 1260.8,708.1 1269.8,706.7 1278.8,705.1 1287.9,703.3 1296.9,701.2 1305.9,699.0 1315.0,696.8 1324.2,694.6 1333.5,692.3 1342.7,689.8 1351.8,687.1 1360.7,684.2 1369.4,680.9 1377.8,677.4 1386.1,673.8 1394.4,670.1 1402.7,666.5 1411.0,662.7 1419.3,658.9 1427.6,655.1 1435.9,651.1 1444.2,647.0 1452.4,642.8 1460.5,638.4 1468.6,633.8 1476.6,629.1 1484.5,624.1 1492.5,618.9 1500.5,613.6 1508.5,608.2 1511.7,606.0 1514.9,603.8 1518.2,601.5 1521.5,599.3 1524.7,597.1 1528.1,594.8 1531.4,592.5 1534.7,590.2 1538.2,587.3 1541.6,583.9 1545.1,580.0 1548.7,575.6 1552.3,570.9 1555.9,565.8 1559.6,560.5 1563.3,555.0 1567.1,549.4 1570.8,543.7 1574.6,537.9 1578.4,532.2 1573.6,530.1 1569.6,535.8 1565.6,541.6 1561.7,547.3 1557.8,553.1 1553.9,558.7 1550.1,564.1 1546.3,569.2 1542.6,574.0 1539.0,578.5 1535.4,582.5 1531.8,586.0 1528.3,588.9 1524.9,591.3 1521.4,593.6 1518.0,595.8 1514.7,598.1 1511.3,600.3 1508.0,602.5 1504.6,604.7 1501.3,606.9 1493.1,612.2 1484.9,617.4 1476.6,622.5 1468.4,627.3 1460.2,632.0 1452.0,636.5 1443.8,640.9 1435.5,645.1 1427.2,649.1 1418.9,653.0 1410.6,656.9 1402.4,660.7 1394.1,664.4 1385.8,668.1 1377.5,671.7 1369.3,675.3 1360.9,678.9 1352.5,682.3 1344.0,685.4 1335.5,688.4 1326.9,691.2 1318.4,693.8 1309.8,696.4 1301.3,698.8 1292.8,701.2 1284.3,703.6 1275.8,705.6 1267.3,707.5 1258.9,709.1 1250.5,710.5 1242.0,711.8 1233.6,712.9"/><polyline points="1236.7,669.2 1247.5,666.4 1258.3,663.7 1269.1,660.9 1279.8,658.1 1290.5,655.2 1301.1,652.4 1311.7,649.5 1322.3,646.6 1333.1,643.8 1344.1,641.2 1355.2,638.5 1366.1,635.8 1376.7,633.0 1386.9,629.9 1396.5,626.4 1405.3,622.5 1413.6,618.3 1422.0,614.2 1430.4,610.0 1438.7,605.9 1447.1,601.7 1455.4,597.5 1463.7,593.4 1472.0,589.2 1480.1,584.9 1487.9,580.4 1495.5,575.8 1502.9,571.1 1510.2,566.4 1517.5,561.6 1524.7,556.8 1532.0,552.0 1534.9,550.1 1537.8,548.2 1540.7,546.3 1543.5,544.4 1546.4,542.4 1549.3,540.5 1552.1,538.5 1554.9,536.6 1557.7,534.6 1560.5,532.6 1563.3,530.7 1566.1,528.7 1568.9,526.7 1571.6,524.7 1574.4,522.7 1577.1,520.7 1579.8,518.7 1582.6,516.7 1585.3,514.7 1588.0,512.6"/><polyline points="1236.5,672.6 1247.3,670.0 1258.0,667.5 1268.8,664.9 1279.5,662.2 1290.1,659.6 1300.8,656.8 1311.3,654.1 1321.9,651.3 1332.7,648.7 1343.7,646.1 1354.8,643.6 1365.7,641.0 1376.3,638.2 1386.5,635.2 1396.1,631.8 1404.8,627.9 1413.2,623.8 1421.6,619.7 1430.0,615.6 1438.3,611.5 1446.6,607.3 1455.0,603.2 1463.3,599.0 1471.6,594.8 1479.7,590.5 1487.5,586.1 1495.1,581.5 1502.5,576.7 1509.8,571.9 1517.0,567.1 1524.3,562.2 1531.5,557.4 1534.5,555.4 1537.4,553.5 1540.3,551.7 1543.1,549.8 1546.0,548.0 1548.8,546.2 1551.7,544.4 1554.5,542.6 1557.3,540.9 1560.1,539.1 1562.8,537.2 1565.6,535.4 1568.4,533.5 1571.1,531.6 1573.9,529.6 1576.6,527.6 1579.3,525.6 1582.1,523.5 1584.8,521.3 1587.5,519.0"/><polyline points="1236.2,675.9 1247.0,673.6 1257.7,671.3 1268.5,668.9 1279.1,666.4 1289.8,663.9 1300.4,661.3 1310.9,658.7 1321.5,656.0 1332.3,653.5 1343.3,651.1 1354.3,648.6 1365.2,646.1 1375.8,643.4 1386.0,640.4 1395.5,637.1 1404.3,633.2 1412.7,629.2 1421.0,625.1 1429.4,621.1 1437.8,617.0 1446.1,612.9 1454.4,608.7 1462.7,604.6 1471.0,600.4 1479.1,596.1 1486.9,591.7 1494.5,587.0 1502.0,582.3 1509.3,577.4 1516.5,572.5 1523.8,567.6 1531.0,562.6 1534.0,560.7 1536.9,558.8 1539.8,556.9 1542.6,555.0 1545.5,553.2 1548.3,551.5 1551.2,549.7 1554.0,548.0 1556.8,546.3 1559.6,544.4 1562.4,542.5 1565.1,540.6 1567.9,538.5 1570.7,536.4 1573.5,534.2 1576.2,531.9 1579.0,529.6 1581.8,527.1 1584.5,524.5 1587.3,521.7"/><polyline points="1236.0,679.3 1246.7,677.2 1257.4,675.0 1268.1,672.8 1278.8,670.5 1289.4,668.2 1299.9,665.7 1310.5,663.2 1321.0,660.7 1331.7,658.3 1342.7,655.9 1353.7,653.6 1364.6,651.1 1375.2,648.5 1385.3,645.6 1394.9,642.3 1403.6,638.5 1412.0,634.5 1420.4,630.5 1428.7,626.4 1437.1,622.4 1445.4,618.3 1453.7,614.2 1462.0,610.1 1470.3,605.9 1478.4,601.6 1486.2,597.1 1493.8,592.5 1501.3,587.7 1508.6,582.8 1515.9,577.9 1523.1,572.9 1530.4,567.8 1533.3,565.9 1536.3,563.9 1539.2,562.0 1542.0,560.2 1544.9,558.3 1547.7,556.6 1550.6,554.8 1553.4,553.1 1556.2,551.3 1559.0,549.4 1561.8,547.4 1564.6,545.2 1567.4,543.0 1570.2,540.6 1573.0,538.2 1575.8,535.6 1578.6,532.8 1581.4,530.0 1584.2,527.0 1587.0,523.9"/><polyline points="1235.7,682.7 1246.4,680.8 1257.1,678.8 1267.7,676.7 1278.3,674.6 1288.9,672.4 1299.4,670.1 1309.9,667.7 1320.4,665.3 1331.1,662.9 1342.0,660.7 1353.0,658.4 1363.8,656.1 1374.4,653.5 1384.5,650.6 1394.0,647.4 1402.7,643.6 1411.1,639.7 1419.5,635.7 1427.8,631.7 1436.2,627.7 1444.5,623.6 1452.8,619.6 1461.1,615.5 1469.4,611.3 1477.5,607.0 1485.4,602.5 1493.0,597.9 1500.4,593.0 1507.8,588.1 1515.0,583.1 1522.3,578.0 1529.6,573.0 1532.6,570.9 1535.5,569.0 1538.4,567.0 1541.3,565.2 1544.2,563.3 1547.0,561.5 1549.9,559.8 1552.7,558.0 1555.6,556.1 1558.4,554.1 1561.2,551.9 1564.1,549.6 1566.9,547.1 1569.7,544.5 1572.6,541.7 1575.4,538.8 1578.2,535.7 1581.1,532.5 1583.9,529.1 1586.8,525.7"/><polyline points="1235.5,686.0 1246.1,684.3 1256.7,682.5 1267.3,680.6 1277.8,678.7 1288.4,676.6 1298.8,674.4 1309.3,672.1 1319.7,669.8 1330.3,667.5 1341.2,665.4 1352.1,663.2 1362.9,660.9 1373.4,658.4 1383.5,655.5 1393.0,652.3 1401.7,648.6 1410.1,644.7 1418.4,640.8 1426.8,636.8 1435.1,632.8 1443.4,628.8 1451.7,624.8 1460.1,620.7 1468.4,616.5 1476.5,612.3 1484.3,607.8 1491.9,603.1 1499.4,598.2 1506.7,593.3 1514.1,588.2 1521.3,583.1 1528.7,577.9 1531.6,575.9 1534.6,573.9 1537.5,571.9 1540.4,570.0 1543.3,568.1 1546.2,566.3 1549.0,564.5 1551.9,562.7 1554.8,560.8 1557.6,558.6 1560.5,556.2 1563.4,553.6 1566.2,550.9 1569.1,548.0 1572.0,544.9 1574.9,541.7 1577.8,538.2 1580.7,534.7 1583.6,531.0 1586.5,527.2"/><polyline points="1235.3,689.3 1245.8,687.8 1256.3,686.1 1266.8,684.4 1277.3,682.6 1287.7,680.7 1298.1,678.6 1308.5,676.4 1318.9,674.2 1329.5,672.0 1340.2,669.9 1351.1,667.8 1361.8,665.5 1372.2,663.1 1382.2,660.3 1391.7,657.1 1400.4,653.4 1408.8,649.5 1417.1,645.7 1425.5,641.7 1433.8,637.8 1442.1,633.8 1450.4,629.8 1458.7,625.7 1467.0,621.6 1475.1,617.3 1483.0,612.8 1490.6,608.1 1498.1,603.3 1505.5,598.3 1512.9,593.2 1520.2,588.0 1527.6,582.8 1530.5,580.7 1533.5,578.7 1536.4,576.7 1539.3,574.7 1542.3,572.8 1545.2,570.9 1548.1,569.1 1550.9,567.2 1553.8,565.1 1556.7,562.8 1559.6,560.3 1562.6,557.5 1565.5,554.5 1568.4,551.3 1571.4,547.9 1574.3,544.3 1577.2,540.5 1580.2,536.7 1583.1,532.6 1586.1,528.5"/><polyline points="1235.0,692.6 1245.5,691.2 1255.9,689.7 1266.3,688.2 1276.7,686.5 1287.0,684.7 1297.4,682.7 1307.6,680.6 1317.9,678.4 1328.4,676.3 1339.1,674.3 1349.8,672.2 1360.4,670.0 1370.8,667.6 1380.8,664.8 1390.2,661.6 1398.9,658.0 1407.2,654.2 1415.6,650.3 1423.9,646.5 1432.2,642.5 1440.6,638.6 1448.9,634.6 1457.2,630.5 1465.5,626.4 1473.6,622.1 1481.4,617.6 1489.1,613.0 1496.6,608.1 1504.1,603.1 1511.4,597.9 1518.8,592.7 1526.2,587.4 1529.2,585.3 1532.2,583.2 1535.1,581.2 1538.1,579.2 1541.0,577.2 1544.0,575.3 1546.9,573.4 1549.8,571.5 1552.7,569.3 1555.7,566.8 1558.7,564.0 1561.6,561.0 1564.6,557.8 1567.6,554.3 1570.6,550.6 1573.6,546.7 1576.6,542.6 1579.6,538.4 1582.6,534.1 1585.6,529.7"/><polyline points="1234.8,695.8 1245.1,694.6 1255.5,693.2 1265.7,691.8 1276.0,690.2 1286.2,688.5 1296.5,686.6 1306.6,684.6 1316.8,682.5 1327.2,680.5 1337.8,678.5 1348.4,676.4 1358.9,674.2 1369.1,671.8 1379.0,669.1 1388.4,665.9 1397.0,662.3 1405.4,658.6 1413.7,654.7 1422.1,650.9 1430.4,647.0 1438.7,643.1 1447.0,639.1 1455.3,635.1 1463.6,631.0 1471.7,626.7 1479.6,622.2 1487.3,617.5 1494.9,612.6 1502.4,607.6 1509.8,602.4 1517.2,597.2 1524.7,591.8 1527.7,589.7 1530.7,587.6 1533.6,585.5 1536.6,583.5 1539.6,581.4 1542.6,579.4 1545.5,577.5 1548.5,575.5 1551.5,573.2 1554.5,570.5 1557.5,567.6 1560.5,564.3 1563.6,560.8 1566.6,557.0 1569.7,553.0 1572.8,548.8 1575.9,544.5 1578.9,540.0 1582.0,535.4 1585.1,530.7"/><polyline points="1234.6,698.9 1244.8,697.8 1254.9,696.6 1265.1,695.3 1275.2,693.8 1285.3,692.2 1295.4,690.4 1305.5,688.4 1315.5,686.3 1325.8,684.3 1336.2,682.4 1346.7,680.3 1357.0,678.2 1367.2,675.8 1377.0,673.0 1386.2,669.9 1394.9,666.3 1403.2,662.6 1411.6,658.8 1419.9,655.0 1428.2,651.2 1436.5,647.3 1444.8,643.3 1453.1,639.3 1461.4,635.2 1469.6,630.9 1477.5,626.4 1485.2,621.7 1492.8,616.9 1500.3,611.8 1507.8,606.6 1515.3,601.3 1522.8,595.9 1525.8,593.7 1528.9,591.6 1531.9,589.5 1534.9,587.4 1537.9,585.3 1540.9,583.3 1543.9,581.3 1547.0,579.2 1550.0,576.8 1553.1,574.0 1556.1,570.8 1559.2,567.3 1562.4,563.6 1565.5,559.5 1568.6,555.2 1571.8,550.7 1575.0,546.1 1578.1,541.3 1581.3,536.4 1584.5,531.5"/><polyline points="1234.4,701.9 1244.4,700.9 1254.4,699.8 1264.4,698.6 1274.4,697.2 1284.3,695.6 1294.3,693.9 1304.2,691.9 1314.1,689.9 1324.2,687.9 1334.4,685.9 1344.7,683.9 1354.9,681.7 1364.9,679.3 1374.6,676.6 1383.8,673.5 1392.4,669.9 1400.7,666.2 1409.0,662.5 1417.4,658.7 1425.7,654.9 1434.0,651.0 1442.3,647.1 1450.6,643.1 1458.9,639.0 1467.0,634.7 1475.0,630.2 1482.8,625.6 1490.4,620.7 1498.0,615.6 1505.6,610.4 1513.1,605.1 1520.7,599.6 1523.7,597.4 1526.8,595.3 1529.9,593.1 1532.9,591.0 1536.0,588.9 1539.0,586.8 1542.1,584.7 1545.2,582.6 1548.3,580.0 1551.4,577.1 1554.6,573.7 1557.7,570.0 1561.0,566.0 1564.2,561.7 1567.4,557.1 1570.7,552.4 1573.9,547.5 1577.2,542.4 1580.4,537.3 1583.7,532.1"/><polyline points="1234.2,704.7 1244.0,703.8 1253.8,702.7 1263.6,701.6 1273.4,700.3 1283.2,698.8 1292.9,697.0 1302.7,695.1 1312.4,693.1 1322.3,691.1 1332.4,689.1 1342.4,687.0 1352.5,684.8 1362.3,682.4 1371.8,679.6 1380.9,676.5 1389.5,673.0 1397.8,669.3 1406.1,665.6 1414.4,661.8 1422.7,658.0 1431.1,654.2 1439.4,650.3 1447.7,646.3 1455.9,642.2 1464.1,638.0 1472.1,633.5 1479.9,628.8 1487.6,623.9 1495.3,618.9 1502.9,613.7 1510.6,608.3 1518.2,602.9 1521.3,600.7 1524.4,598.5 1527.5,596.3 1530.6,594.1 1533.7,592.0 1536.9,589.8 1540.0,587.7 1543.1,585.5 1546.3,582.8 1549.5,579.7 1552.7,576.2 1556.0,572.3 1559.3,568.0 1562.6,563.5 1565.9,558.7 1569.3,553.7 1572.7,548.6 1576.0,543.3 1579.4,537.9 1582.8,532.6"/><polyline points="1234.0,707.2 1243.6,706.4 1253.2,705.4 1262.8,704.2 1272.3,702.9 1281.9,701.4 1291.5,699.7 1301.0,697.7 1310.5,695.7 1320.2,693.7 1330.0,691.7 1339.9,689.6 1349.6,687.3 1359.3,684.8 1368.6,682.0 1377.6,678.9 1386.1,675.3 1394.5,671.7 1402.8,668.0 1411.1,664.3 1419.4,660.5 1427.7,656.7 1436.0,652.8 1444.3,648.8 1452.6,644.8 1460.7,640.5 1468.8,636.1 1476.7,631.4 1484.5,626.5 1492.2,621.5 1499.9,616.3 1507.7,610.9 1515.4,605.5 1518.5,603.3 1521.7,601.1 1524.8,598.9 1528.0,596.7 1531.2,594.5 1534.3,592.3 1537.5,590.1 1540.7,587.8 1544.0,585.1 1547.3,581.8 1550.6,578.1 1554.0,574.0 1557.4,569.6 1560.8,564.9 1564.2,559.9 1567.7,554.7 1571.2,549.3 1574.7,543.8 1578.1,538.3 1581.6,532.8"/><polyline points="1233.8,709.4 1243.2,708.5 1252.5,707.6 1261.8,706.4 1271.2,705.1 1280.5,703.6 1289.8,701.8 1299.1,699.8 1308.4,697.7 1317.9,695.6 1327.4,693.5 1337.0,691.3 1346.5,689.0 1355.8,686.4 1365.0,683.6 1373.9,680.4 1382.4,676.9 1390.7,673.2 1399.0,669.6 1407.3,665.9 1415.6,662.1 1423.9,658.3 1432.2,654.4 1440.5,650.5 1448.7,646.4 1456.9,642.2 1465.0,637.8 1473.0,633.1 1480.9,628.3 1488.7,623.3 1496.5,618.1 1504.4,612.8 1512.2,607.3 1515.4,605.1 1518.6,602.9 1521.8,600.6 1525.0,598.4 1528.2,596.2 1531.5,594.0 1534.8,591.7 1538.0,589.4 1541.4,586.6 1544.7,583.2 1548.2,579.4 1551.6,575.2 1555.1,570.6 1558.6,565.7 1562.2,560.5 1565.8,555.1 1569.4,549.6 1573.0,544.0 1576.6,538.3 1580.2,532.7"/><polyline points="1233.7,711.1 1242.8,710.2 1251.8,709.2 1260.9,708.0 1269.9,706.6 1279.0,705.0 1288.0,703.2 1297.1,701.1 1306.1,699.0 1315.3,696.8 1324.5,694.6 1333.7,692.2 1343.0,689.8 1352.1,687.1 1361.0,684.2 1369.8,680.9 1378.2,677.4 1386.5,673.8 1394.8,670.1 1403.1,666.5 1411.4,662.7 1419.6,658.9 1427.9,655.1 1436.2,651.1 1444.5,647.0 1452.7,642.8 1460.9,638.4 1468.9,633.8 1476.9,629.0 1484.9,624.1 1492.8,618.9 1500.8,613.6 1508.8,608.2 1512.0,606.0 1515.2,603.7 1518.5,601.5 1521.7,599.3 1525.0,597.0 1528.3,594.8 1531.7,592.5 1535.0,590.2 1538.4,587.3 1541.9,583.9 1545.4,580.0 1548.9,575.6 1552.5,570.9 1556.2,565.9 1559.8,560.6 1563.5,555.1 1567.2,549.4 1571.0,543.7 1574.7,538.0 1578.5,532.3"/><polyline points="1233.6,712.3 1242.4,711.3 1251.1,710.2 1259.9,708.9 1268.6,707.4 1277.4,705.7 1286.1,703.8 1294.9,701.6 1303.7,699.3 1312.5,697.0 1321.4,694.6 1330.3,692.1 1339.2,689.5 1348.0,686.7 1356.8,683.7 1365.3,680.4 1373.7,676.8 1382.0,673.2 1390.3,669.6 1398.6,665.9 1406.8,662.2 1415.1,658.4 1423.4,654.5 1431.7,650.6 1440.0,646.5 1448.2,642.4 1456.4,638.0 1464.6,633.4 1472.7,628.7 1480.7,623.8 1488.8,618.7 1496.9,613.4 1505.0,608.0 1508.3,605.8 1511.6,603.6 1514.9,601.4 1518.2,599.1 1521.5,596.9 1524.9,594.6 1528.3,592.3 1531.7,590.0 1535.2,587.1 1538.7,583.6 1542.3,579.6 1545.9,575.2 1549.6,570.4 1553.3,565.3 1557.1,560.0 1560.9,554.4 1564.7,548.7 1568.6,542.9 1572.4,537.2 1576.3,531.4"/><polyline points="1233.6,712.9 1242.0,711.8 1250.4,710.5 1258.9,709.1 1267.3,707.5 1275.8,705.6 1284.2,703.5 1292.7,701.2 1301.2,698.8 1309.7,696.3 1318.2,693.8 1326.8,691.1 1335.4,688.3 1343.9,685.4 1352.4,682.2 1360.8,678.8 1369.1,675.2 1377.4,671.6 1385.6,668.0 1393.9,664.3 1402.2,660.6 1410.5,656.8 1418.7,653.0 1427.0,649.0 1435.3,645.0 1443.6,640.8 1451.8,636.5 1460.1,632.0 1468.3,627.3 1476.5,622.4 1484.7,617.4 1492.9,612.2 1501.2,606.8 1504.5,604.7 1507.8,602.5 1511.2,600.2 1514.5,598.0 1517.9,595.8 1521.3,593.5 1524.7,591.2 1528.2,588.9 1531.7,585.9 1535.2,582.4 1538.8,578.4 1542.5,574.0 1546.2,569.1 1550.0,564.0 1553.8,558.6 1557.6,553.0 1561.5,547.3 1565.5,541.5 1569.5,535.7 1573.5,530.0"/><polyline points="1233.6,713.1 1241.7,711.8 1249.8,710.3 1257.9,708.7 1266.0,706.9 1274.2,704.9 1282.3,702.7 1290.5,700.2 1298.7,697.6 1306.9,694.9 1315.1,692.2 1323.3,689.4 1331.5,686.4 1339.7,683.2 1347.9,679.9 1356.2,676.5 1364.5,672.9 1372.7,669.3 1381.0,665.6 1389.2,662.0 1397.5,658.2 1405.8,654.4 1414.0,650.6 1422.3,646.6 1430.6,642.6 1438.9,638.4 1447.2,634.1 1455.5,629.7 1463.9,625.0 1472.2,620.2 1480.6,615.3 1488.9,610.2 1497.3,604.9 1500.7,602.7 1504.0,600.6 1507.4,598.4 1510.8,596.1 1514.1,593.9 1517.5,591.6 1520.8,589.3 1524.2,586.8 1527.6,583.9 1531.1,580.3 1534.6,576.2 1538.1,571.7 1541.7,566.7 1545.2,561.4 1548.8,555.9 1552.4,550.1 1556.1,544.3 1559.7,538.3 1563.3,532.3 1566.9,526.3"/><polyline points="1233.6,712.9 1241.3,711.4 1249.1,709.8 1256.9,708.0 1264.7,706.0 1272.6,703.8 1280.4,701.4 1288.3,698.7 1296.2,696.0 1304.1,693.1 1311.9,690.2 1319.8,687.1 1327.6,684.0 1335.6,680.6 1343.6,677.2 1351.6,673.6 1359.8,670.0 1368.1,666.4 1376.3,662.7 1384.6,659.1 1392.9,655.3 1401.1,651.5 1409.4,647.7 1417.7,643.7 1426.0,639.7 1434.3,635.5 1442.7,631.3 1451.1,626.9 1459.5,622.3 1468.0,617.6 1476.5,612.7 1485.0,607.7 1493.5,602.5 1496.9,600.4 1500.3,598.2 1503.6,596.0 1507.0,593.8 1510.3,591.5 1513.7,589.2 1517.0,586.8 1520.3,584.4 1523.6,581.4 1527.0,577.8 1530.3,573.6 1533.7,569.0 1537.1,564.0 1540.5,558.6 1543.9,553.0 1547.2,547.1 1550.6,541.1 1553.9,534.9 1557.2,528.7 1560.4,522.6"/><polyline points="1233.6,712.3 1241.1,710.6 1248.5,708.7 1256.0,706.7 1263.5,704.5 1271.1,702.1 1278.6,699.5 1286.2,696.7 1293.8,693.7 1301.4,690.7 1308.9,687.5 1316.4,684.2 1323.9,680.9 1331.5,677.4 1339.3,673.8 1347.2,670.1 1355.4,666.4 1363.6,662.8 1371.8,659.1 1380.1,655.4 1388.3,651.7 1396.6,647.9 1404.9,644.0 1413.1,640.1 1421.4,636.0 1429.8,631.9 1438.2,627.7 1446.7,623.3 1455.3,618.8 1463.9,614.2 1472.5,609.4 1481.2,604.5 1489.8,599.4 1493.2,597.3 1496.7,595.1 1500.1,593.0 1503.5,590.8 1506.8,588.5 1510.2,586.3 1513.5,584.0 1516.9,581.6 1520.2,578.6 1523.6,575.0 1527.0,571.0 1530.4,566.4 1533.8,561.5 1537.3,556.2 1540.7,550.7 1544.1,544.9 1547.5,538.9 1550.9,532.9 1554.2,526.8 1557.6,520.8"/><polyline points="1233.7,711.1 1240.9,709.1 1248.0,707.0 1255.2,704.8 1262.4,702.4 1269.7,699.8 1277.0,696.9 1284.3,693.9 1291.6,690.7 1298.9,687.5 1306.0,684.1 1313.2,680.6 1320.4,677.0 1327.8,673.3 1335.3,669.6 1343.1,665.8 1351.2,662.1 1359.4,658.4 1367.6,654.7 1375.9,651.0 1384.1,647.3 1392.4,643.5 1400.6,639.6 1408.9,635.6 1417.2,631.6 1425.6,627.4 1434.1,623.3 1442.7,619.0 1451.3,614.5 1460.0,610.0 1468.8,605.3 1477.6,600.5 1486.3,595.4 1489.8,593.4 1493.3,591.3 1496.8,589.2 1500.2,587.1 1503.6,584.9 1507.0,582.7 1510.4,580.5 1513.8,578.1 1517.2,575.3 1520.6,571.8 1524.1,567.9 1527.6,563.5 1531.0,558.7 1534.5,553.6 1538.0,548.2 1541.5,542.6 1545.0,536.8 1548.5,531.0 1552.0,525.1 1555.5,519.2"/><polyline points="1233.8,709.4 1240.7,707.1 1247.6,704.8 1254.5,702.3 1261.5,699.6 1268.5,696.8 1275.5,693.7 1282.6,690.4 1289.7,687.1 1296.6,683.6 1303.5,680.0 1310.4,676.3 1317.3,672.5 1324.4,668.6 1331.7,664.7 1339.4,660.8 1347.4,657.0 1355.6,653.4 1363.8,649.7 1372.1,645.9 1380.3,642.1 1388.6,638.3 1396.8,634.4 1405.1,630.4 1413.4,626.4 1421.8,622.3 1430.3,618.1 1439.0,613.9 1447.8,609.5 1456.6,605.1 1465.5,600.5 1474.4,595.7 1483.2,590.8 1486.8,588.8 1490.3,586.8 1493.8,584.8 1497.3,582.7 1500.8,580.6 1504.2,578.5 1507.7,576.4 1511.1,574.2 1514.6,571.4 1518.1,568.1 1521.6,564.4 1525.1,560.2 1528.7,555.6 1532.3,550.7 1535.9,545.6 1539.4,540.2 1543.0,534.7 1546.6,529.1 1550.2,523.4 1553.8,517.7"/><polyline points="1234.0,707.2 1240.6,704.7 1247.3,702.0 1254.0,699.3 1260.7,696.4 1267.5,693.3 1274.3,690.0 1281.1,686.5 1288.0,682.9 1294.7,679.3 1301.3,675.4 1307.9,671.5 1314.6,667.4 1321.5,663.4 1328.6,659.3 1336.1,655.3 1344.1,651.5 1352.3,647.8 1360.5,644.1 1368.8,640.3 1377.0,636.5 1385.3,632.6 1393.5,628.7 1401.8,624.7 1410.1,620.7 1418.5,616.6 1427.1,612.5 1435.8,608.3 1444.7,604.0 1453.6,599.6 1462.6,595.1 1471.6,590.5 1480.6,585.7 1484.1,583.8 1487.7,581.8 1491.2,579.8 1494.8,577.8 1498.3,575.8 1501.8,573.8 1505.3,571.8 1508.8,569.7 1512.4,567.1 1515.9,564.1 1519.5,560.5 1523.1,556.6 1526.8,552.3 1530.4,547.6 1534.1,542.8 1537.8,537.7 1541.4,532.4 1545.1,527.1 1548.8,521.7 1552.5,516.3"/><polyline points="1234.2,704.7 1240.6,701.8 1247.1,698.9 1253.6,695.9 1260.1,692.7 1266.7,689.4 1273.3,685.9 1280.0,682.2 1286.6,678.4 1293.2,674.5 1299.5,670.5 1305.9,666.3 1312.4,662.1 1319.0,657.9 1326.0,653.7 1333.4,649.6 1341.4,645.7 1349.6,641.9 1357.8,638.2 1366.0,634.4 1374.2,630.5 1382.5,626.7 1390.8,622.7 1399.0,618.7 1407.3,614.7 1415.8,610.6 1424.4,606.5 1433.2,602.3 1442.1,598.1 1451.1,593.8 1460.2,589.4 1469.3,584.9 1478.3,580.2 1481.9,578.3 1485.5,576.4 1489.1,574.5 1492.7,572.6 1496.3,570.7 1499.8,568.8 1503.4,566.9 1507.0,565.0 1510.6,562.6 1514.2,559.7 1517.8,556.4 1521.5,552.7 1525.2,548.7 1528.9,544.4 1532.7,539.8 1536.4,535.1 1540.2,530.1 1543.9,525.1 1547.7,520.0 1551.5,514.9"/><polyline points="1234.4,701.9 1240.6,698.8 1246.9,695.6 1253.3,692.3 1259.6,688.8 1266.1,685.3 1272.5,681.5 1279.0,677.6 1285.5,673.7 1291.9,669.6 1298.1,665.3 1304.2,661.0 1310.5,656.6 1317.0,652.2 1323.9,647.9 1331.2,643.7 1339.1,639.7 1347.3,635.9 1355.5,632.1 1363.7,628.3 1372.0,624.4 1380.2,620.5 1388.5,616.6 1396.8,612.5 1405.1,608.5 1413.5,604.4 1422.2,600.3 1431.0,596.2 1440.0,592.1 1449.1,587.9 1458.2,583.6 1467.4,579.1 1476.5,574.6 1480.1,572.7 1483.8,570.9 1487.4,569.1 1491.0,567.3 1494.6,565.5 1498.2,563.7 1501.9,561.9 1505.5,560.1 1509.1,557.8 1512.8,555.2 1516.5,552.1 1520.2,548.7 1524.0,545.0 1527.7,541.0 1531.5,536.8 1535.3,532.4 1539.2,527.8 1543.0,523.0 1546.8,518.3 1550.7,513.4"/><polyline points="1234.6,698.9 1240.7,695.5 1246.9,692.0 1253.1,688.5 1259.3,684.8 1265.6,681.0 1271.9,677.1 1278.3,673.0 1284.7,668.8 1290.9,664.5 1296.9,660.1 1302.9,655.5 1309.0,651.0 1315.4,646.4 1322.1,642.0 1329.4,637.7 1337.3,633.7 1345.5,629.9 1353.7,626.0 1361.9,622.1 1370.2,618.2 1378.4,614.3 1386.7,610.3 1394.9,606.3 1403.2,602.2 1411.7,598.1 1420.4,594.1 1429.3,590.0 1438.3,586.0 1447.4,581.8 1456.6,577.6 1465.9,573.3 1475.0,568.8 1478.7,567.0 1482.4,565.2 1486.0,563.5 1489.7,561.8 1493.3,560.1 1497.0,558.4 1500.6,556.7 1504.3,555.0 1508.0,553.0 1511.7,550.5 1515.4,547.7 1519.2,544.6 1523.0,541.2 1526.8,537.6 1530.6,533.7 1534.5,529.6 1538.4,525.4 1542.3,521.0 1546.2,516.5 1550.1,512.0"/><polyline points="1234.8,695.8 1240.8,692.1 1246.9,688.4 1253.0,684.6 1259.1,680.7 1265.3,676.6 1271.5,672.5 1277.7,668.2 1284.0,663.9 1290.1,659.4 1296.0,654.8 1301.9,650.1 1307.9,645.3 1314.1,640.7 1320.8,636.1 1328.0,631.7 1335.9,627.7 1344.1,623.8 1352.3,619.9 1360.5,616.0 1368.7,612.1 1377.0,608.1 1385.2,604.1 1393.5,600.0 1401.8,595.9 1410.3,591.9 1419.0,587.8 1427.9,583.8 1437.0,579.8 1446.2,575.7 1455.4,571.6 1464.7,567.4 1473.9,563.0 1477.6,561.3 1481.3,559.6 1484.9,557.9 1488.6,556.2 1492.3,554.6 1496.0,553.0 1499.7,551.5 1503.4,549.9 1507.1,548.0 1510.8,545.8 1514.6,543.3 1518.4,540.5 1522.3,537.4 1526.1,534.0 1530.0,530.5 1533.9,526.8 1537.8,522.9 1541.7,518.9 1545.6,514.7 1549.6,510.5"/><polyline points="1235.0,692.6 1241.0,688.6 1246.9,684.6 1252.9,680.6 1259.0,676.5 1265.1,672.2 1271.2,667.9 1277.4,663.4 1283.6,658.9 1289.6,654.3 1295.4,649.5 1301.1,644.6 1307.0,639.7 1313.2,634.9 1319.8,630.2 1326.9,625.8 1334.8,621.7 1343.0,617.8 1351.2,613.8 1359.4,609.9 1367.6,605.9 1375.9,601.9 1384.1,597.9 1392.4,593.8 1400.7,589.7 1409.2,585.6 1417.9,581.6 1426.9,577.7 1436.0,573.7 1445.2,569.7 1454.5,565.6 1463.8,561.5 1473.1,557.3 1476.8,555.6 1480.5,553.9 1484.2,552.3 1487.9,550.7 1491.6,549.2 1495.3,547.7 1499.0,546.2 1502.7,544.8 1506.5,543.1 1510.2,541.0 1514.0,538.8 1517.9,536.2 1521.7,533.4 1525.6,530.5 1529.5,527.3 1533.4,523.9 1537.3,520.4 1541.3,516.7 1545.3,512.9 1549.2,509.0"/><polyline points="1235.3,689.3 1241.1,685.1 1247.0,680.9 1253.0,676.6 1258.9,672.2 1265.0,667.8 1271.0,663.2 1277.1,658.6 1283.3,654.0 1289.2,649.2 1294.9,644.2 1300.6,639.2 1306.4,634.2 1312.5,629.2 1319.0,624.5 1326.1,619.9 1334.0,615.8 1342.2,611.8 1350.4,607.8 1358.6,603.8 1366.8,599.8 1375.1,595.8 1383.4,591.8 1391.6,587.7 1399.9,583.5 1408.4,579.5 1417.2,575.5 1426.1,571.6 1435.3,567.6 1444.5,563.7 1453.8,559.7 1463.2,555.7 1472.5,551.5 1476.2,549.9 1479.9,548.3 1483.6,546.7 1487.3,545.2 1491.0,543.7 1494.8,542.3 1498.5,541.0 1502.3,539.6 1506.0,538.0 1509.8,536.2 1513.6,534.2 1517.5,531.9 1521.4,529.4 1525.2,526.8 1529.2,523.9 1533.1,520.9 1537.0,517.8 1541.0,514.4 1545.0,511.0 1549.0,507.5"/><polyline points="1235.5,686.0 1241.3,681.5 1247.2,677.1 1253.0,672.5 1259.0,668.0 1264.9,663.3 1271.0,658.6 1277.0,653.8 1283.1,649.0 1289.0,644.1 1294.6,639.0 1300.3,633.8 1306.0,628.7 1312.1,623.6 1318.5,618.7 1325.6,614.1 1333.4,609.9 1341.6,605.9 1349.9,601.9 1358.1,597.9 1366.3,593.8 1374.6,589.8 1382.8,585.7 1391.1,581.6 1399.4,577.5 1407.9,573.4 1416.7,569.4 1425.7,565.5 1434.8,561.6 1444.1,557.8 1453.4,553.9 1462.8,549.9 1472.1,545.9 1475.8,544.2 1479.5,542.7 1483.3,541.2 1487.0,539.7 1490.7,538.3 1494.5,537.0 1498.2,535.7 1502.0,534.4 1505.8,533.0 1509.6,531.3 1513.4,529.5 1517.3,527.5 1521.1,525.3 1525.0,523.0 1529.0,520.5 1532.9,517.8 1536.9,515.0 1540.8,512.1 1544.8,509.0 1548.8,505.9"/><polyline points="1235.7,682.7 1241.5,678.0 1247.3,673.2 1253.2,668.5 1259.1,663.7 1265.0,658.9 1271.0,654.0 1277.0,649.1 1283.1,644.1 1288.9,639.0 1294.5,633.8 1300.1,628.5 1305.8,623.2 1311.8,618.1 1318.3,613.1 1325.3,608.4 1333.2,604.2 1341.4,600.1 1349.6,596.0 1357.8,592.0 1366.0,587.9 1374.3,583.8 1382.5,579.7 1390.8,575.6 1399.1,571.4 1407.6,567.4 1416.4,563.4 1425.4,559.6 1434.6,555.7 1443.9,551.9 1453.2,548.1 1462.6,544.2 1471.9,540.2 1475.6,538.7 1479.4,537.1 1483.1,535.7 1486.8,534.3 1490.6,532.9 1494.3,531.6 1498.1,530.4 1501.9,529.2 1505.7,527.9 1509.5,526.4 1513.3,524.8 1517.2,523.0 1521.1,521.1 1525.0,519.1 1528.9,516.9 1532.8,514.6 1536.8,512.2 1540.7,509.6 1544.7,506.9 1548.7,504.1"/><polyline points="1236.0,679.3 1241.7,674.4 1247.5,669.4 1253.4,664.5 1259.3,659.5 1265.2,654.5 1271.1,649.4 1277.1,644.3 1283.2,639.2 1289.0,634.0 1294.6,628.6 1300.1,623.2 1305.8,617.8 1311.8,612.6 1318.2,607.5 1325.2,602.8 1333.1,598.5 1341.3,594.4 1349.5,590.3 1357.7,586.2 1365.9,582.1 1374.2,577.9 1382.5,573.8 1390.7,569.7 1399.0,565.5 1407.5,561.5 1416.3,557.5 1425.3,553.7 1434.5,549.9 1443.8,546.1 1453.2,542.3 1462.6,538.5 1471.9,534.7 1475.6,533.1 1479.3,531.7 1483.1,530.2 1486.8,528.9 1490.6,527.6 1494.4,526.3 1498.1,525.1 1501.9,523.9 1505.7,522.7 1509.6,521.4 1513.4,519.9 1517.3,518.4 1521.1,516.7 1525.0,515.0 1528.9,513.1 1532.9,511.2 1536.8,509.1 1540.8,506.9 1544.7,504.6 1548.7,502.2"/><polyline points="1236.2,675.9 1242.0,670.8 1247.8,665.6 1253.6,660.4 1259.5,655.3 1265.4,650.1 1271.3,644.9 1277.3,639.6 1283.4,634.4 1289.1,629.0 1294.7,623.5 1300.3,618.0 1305.9,612.5 1311.9,607.2 1318.3,602.1 1325.3,597.3 1333.2,592.9 1341.4,588.8 1349.6,584.6 1357.8,580.5 1366.0,576.3 1374.3,572.2 1382.6,568.0 1390.8,563.8 1399.1,559.7 1407.7,555.6 1416.4,551.7 1425.5,547.9 1434.6,544.1 1443.9,540.4 1453.3,536.7 1462.7,533.0 1472.0,529.2 1475.8,527.7 1479.5,526.2 1483.2,524.8 1487.0,523.5 1490.7,522.2 1494.5,520.9 1498.3,519.8 1502.1,518.6 1505.9,517.4 1509.7,516.2 1513.6,514.9 1517.4,513.5 1521.3,512.1 1525.2,510.6 1529.1,509.1 1533.0,507.4 1536.9,505.7 1540.9,503.9 1544.8,502.0 1548.8,499.9"/><polyline points="1236.5,672.6 1242.2,667.2 1248.0,661.8 1253.9,656.4 1259.7,651.0 1265.6,645.7 1271.6,640.3 1277.6,635.0 1283.6,629.6 1289.4,624.1 1295.0,618.5 1300.5,612.8 1306.2,607.3 1312.1,601.8 1318.5,596.6 1325.6,591.8 1333.4,587.4 1341.6,583.2 1349.8,579.0 1358.1,574.8 1366.3,570.6 1374.5,566.5 1382.8,562.3 1391.1,558.1 1399.4,553.9 1407.9,549.9 1416.7,545.9 1425.7,542.1 1434.9,538.4 1444.2,534.7 1453.6,531.1 1462.9,527.4 1472.3,523.8 1476.0,522.3 1479.7,520.9 1483.5,519.5 1487.2,518.1 1491.0,516.8 1494.8,515.5 1498.6,514.3 1502.4,513.1 1506.2,511.9 1510.0,510.7 1513.9,509.5 1517.7,508.2 1521.6,507.0 1525.5,505.7 1529.3,504.4 1533.2,503.1 1537.2,501.7 1541.1,500.2 1545.0,498.7 1549.0,497.1"/><polyline points="1236.7,669.2 1242.5,663.6 1248.3,658.0 1254.1,652.4 1260.0,646.8 1265.9,641.3 1271.9,635.8 1277.9,630.3 1283.9,624.8 1289.7,619.2 1295.3,613.5 1300.8,607.7 1306.5,602.1 1312.5,596.5 1318.9,591.3 1325.9,586.4 1333.7,581.9 1342.0,577.7 1350.2,573.5 1358.4,569.2 1366.7,565.0 1374.9,560.8 1383.2,556.6 1391.5,552.4 1399.8,548.2 1408.3,544.1 1417.1,540.2 1426.1,536.5 1435.3,532.8 1444.6,529.1 1453.9,525.6 1463.3,522.0 1472.6,518.4 1476.4,516.9 1480.1,515.5 1483.8,514.1 1487.6,512.6 1491.4,511.2 1495.2,509.8 1499.0,508.4 1502.8,507.0 1506.6,505.6 1510.5,504.3 1514.3,502.9 1518.2,501.5 1522.0,500.2 1525.9,498.8 1529.8,497.4 1533.7,496.1 1537.6,494.8 1541.5,493.4 1545.5,492.1 1549.4,490.8"/><polyline points="1236.1,678.3 1246.8,676.1 1257.5,673.9 1268.2,671.6 1278.9,669.3 1289.5,666.8 1300.1,664.4 1310.6,661.8 1321.1,659.2 1331.9,656.8 1342.9,654.4 1353.9,652.1 1364.8,649.6 1375.4,646.9 1385.5,644.0 1395.1,640.7 1403.8,636.9 1412.2,632.8 1420.6,628.8 1428.9,624.8 1437.3,620.7 1445.6,616.6 1454.0,612.5 1462.3,608.4 1470.6,604.2 1478.7,599.9 1486.5,595.5 1494.1,590.8 1501.5,586.0 1508.8,581.2 1516.1,576.2 1523.3,571.2 1530.6,566.2 1533.5,564.3 1536.5,562.3 1539.4,560.4 1542.2,558.6 1545.1,556.8 1547.9,555.0 1550.8,553.3 1553.6,551.6 1556.4,549.8 1559.2,547.9 1562.0,545.9 1564.8,543.8 1567.6,541.7 1570.4,539.4 1573.2,537.0 1576.0,534.5 1578.8,531.9 1581.5,529.1 1584.3,526.3 1587.1,523.3"/><polyline points="1235.8,681.2 1246.6,679.2 1257.2,677.2 1267.9,675.1 1278.5,672.9 1289.1,670.6 1299.7,668.2 1310.2,665.8 1320.7,663.3 1331.4,660.9 1342.3,658.7 1353.3,656.4 1364.2,654.0 1374.7,651.4 1384.9,648.5 1394.4,645.2 1403.1,641.4 1411.5,637.4 1419.9,633.5 1428.2,629.4 1436.6,625.4 1444.9,621.4 1453.2,617.3 1461.5,613.2 1469.8,609.0 1477.9,604.7 1485.8,600.2 1493.4,595.6 1500.8,590.8 1508.1,585.9 1515.4,580.9 1522.7,575.8 1530.0,570.8 1532.9,568.8 1535.8,566.8 1538.7,564.9 1541.6,563.0 1544.5,561.2 1547.4,559.4 1550.2,557.7 1553.0,555.9 1555.9,554.1 1558.7,552.1 1561.5,550.0 1564.3,547.8 1567.1,545.4 1570.0,542.9 1572.8,540.2 1575.6,537.4 1578.4,534.5 1581.2,531.4 1584.1,528.3 1586.9,524.9"/><polyline points="1235.6,684.0 1246.3,682.2 1257.0,680.3 1267.6,678.3 1278.1,676.3 1288.7,674.1 1299.2,671.9 1309.7,669.5 1320.1,667.1 1330.8,664.8 1341.7,662.6 1352.6,660.4 1363.5,658.0 1374.0,655.5 1384.1,652.6 1393.6,649.4 1402.3,645.7 1410.7,641.7 1419.1,637.8 1427.4,633.8 1435.8,629.8 1444.1,625.8 1452.4,621.7 1460.7,617.6 1469.0,613.5 1477.1,609.2 1485.0,604.7 1492.6,600.0 1500.0,595.2 1507.4,590.2 1514.7,585.2 1521.9,580.1 1529.3,575.0 1532.2,573.0 1535.1,571.0 1538.1,569.0 1541.0,567.1 1543.8,565.3 1546.7,563.5 1549.6,561.7 1552.4,560.0 1555.2,558.0 1558.1,556.0 1560.9,553.7 1563.8,551.3 1566.6,548.7 1569.5,545.9 1572.3,543.0 1575.2,540.0 1578.1,536.8 1580.9,533.4 1583.8,529.9 1586.7,526.3"/><polyline points="1235.5,686.7 1246.1,685.0 1256.7,683.2 1267.2,681.4 1277.7,679.5 1288.2,677.4 1298.7,675.3 1309.1,673.0 1319.5,670.7 1330.2,668.5 1341.0,666.3 1351.9,664.1 1362.7,661.9 1373.2,659.3 1383.2,656.5 1392.7,653.3 1401.4,649.6 1409.8,645.7 1418.2,641.8 1426.5,637.8 1434.9,633.9 1443.2,629.8 1451.5,625.8 1459.8,621.7 1468.1,617.6 1476.2,613.3 1484.0,608.8 1491.7,604.1 1499.1,599.3 1506.5,594.3 1513.8,589.3 1521.1,584.1 1528.5,578.9 1531.4,576.9 1534.4,574.9 1537.3,572.9 1540.2,571.0 1543.1,569.1 1546.0,567.3 1548.9,565.5 1551.7,563.7 1554.6,561.7 1557.5,559.5 1560.3,557.1 1563.2,554.4 1566.1,551.7 1569.0,548.7 1571.9,545.5 1574.8,542.2 1577.7,538.7 1580.6,535.1 1583.5,531.4 1586.4,527.5"/><polyline points="1235.3,689.2 1245.8,687.7 1256.4,686.0 1266.8,684.3 1277.3,682.5 1287.8,680.6 1298.2,678.5 1308.5,676.3 1318.9,674.0 1329.5,671.9 1340.3,669.8 1351.1,667.7 1361.8,665.4 1372.2,662.9 1382.3,660.1 1391.7,656.9 1400.4,653.3 1408.8,649.4 1417.2,645.5 1425.5,641.6 1433.8,637.6 1442.2,633.7 1450.5,629.6 1458.8,625.6 1467.1,621.4 1475.2,617.2 1483.0,612.7 1490.7,608.0 1498.2,603.1 1505.6,598.1 1512.9,593.0 1520.2,587.9 1527.6,582.6 1530.6,580.5 1533.5,578.5 1536.5,576.5 1539.4,574.6 1542.3,572.6 1545.2,570.8 1548.1,568.9 1551.0,567.1 1553.9,565.0 1556.8,562.7 1559.7,560.1 1562.6,557.4 1565.5,554.4 1568.4,551.2 1571.4,547.8 1574.3,544.2 1577.3,540.5 1580.2,536.6 1583.2,532.6 1586.1,528.5"/><polyline points="1235.1,691.6 1245.6,690.2 1256.0,688.7 1266.5,687.1 1276.9,685.4 1287.2,683.5 1297.6,681.5 1307.9,679.4 1318.2,677.2 1328.7,675.1 1339.4,673.0 1350.2,670.9 1360.8,668.7 1371.2,666.3 1381.2,663.5 1390.6,660.3 1399.3,656.7 1407.7,652.9 1416.0,649.0 1424.4,645.1 1432.7,641.2 1441.0,637.2 1449.4,633.2 1457.7,629.1 1466.0,625.0 1474.1,620.8 1481.9,616.3 1489.6,611.6 1497.1,606.7 1504.5,601.7 1511.9,596.6 1519.2,591.3 1526.6,586.1 1529.6,584.0 1532.6,581.9 1535.5,579.9 1538.5,577.9 1541.4,575.9 1544.3,574.0 1547.3,572.1 1550.2,570.3 1553.1,568.1 1556.0,565.7 1559.0,563.0 1561.9,560.0 1564.9,556.8 1567.9,553.4 1570.8,549.8 1573.8,546.0 1576.8,542.0 1579.8,537.9 1582.8,533.7 1585.8,529.4"/><polyline points="1234.9,693.9 1245.3,692.6 1255.7,691.2 1266.1,689.7 1276.4,688.1 1286.7,686.3 1297.0,684.4 1307.2,682.3 1317.5,680.1 1327.9,678.1 1338.6,676.0 1349.2,674.0 1359.8,671.8 1370.1,669.4 1380.1,666.6 1389.4,663.5 1398.1,659.9 1406.5,656.0 1414.8,652.2 1423.2,648.3 1431.5,644.4 1439.8,640.5 1448.1,636.5 1456.4,632.5 1464.7,628.3 1472.8,624.1 1480.7,619.6 1488.4,614.9 1495.9,610.0 1503.4,605.0 1510.8,599.8 1518.2,594.6 1525.6,589.3 1528.6,587.1 1531.6,585.1 1534.5,583.0 1537.5,581.0 1540.5,579.0 1543.4,577.1 1546.4,575.1 1549.3,573.2 1552.2,570.9 1555.2,568.4 1558.2,565.6 1561.2,562.4 1564.2,559.1 1567.2,555.4 1570.2,551.6 1573.3,547.6 1576.3,543.4 1579.4,539.1 1582.4,534.6 1585.4,530.1"/><polyline points="1234.8,696.1 1245.1,694.9 1255.4,693.6 1265.7,692.2 1275.9,690.6 1286.2,688.9 1296.4,687.0 1306.5,685.0 1316.7,682.9 1327.1,680.8 1337.6,678.9 1348.2,676.8 1358.7,674.6 1369.0,672.2 1378.8,669.5 1388.2,666.3 1396.8,662.8 1405.2,659.0 1413.5,655.2 1421.9,651.3 1430.2,647.4 1438.5,643.5 1446.8,639.5 1455.1,635.5 1463.4,631.4 1471.5,627.1 1479.4,622.6 1487.1,617.9 1494.7,613.1 1502.2,608.0 1509.6,602.9 1517.0,597.6 1524.5,592.2 1527.5,590.1 1530.5,588.0 1533.5,585.9 1536.5,583.9 1539.4,581.8 1542.4,579.8 1545.4,577.9 1548.4,575.9 1551.3,573.6 1554.3,570.9 1557.4,567.9 1560.4,564.6 1563.5,561.1 1566.5,557.3 1569.6,553.3 1572.7,549.0 1575.8,544.6 1578.9,540.1 1582.0,535.5 1585.1,530.8"/><polyline points="1234.6,698.2 1244.9,697.0 1255.1,695.8 1265.3,694.5 1275.4,693.0 1285.6,691.3 1295.7,689.5 1305.8,687.5 1315.9,685.4 1326.2,683.4 1336.6,681.4 1347.1,679.4 1357.5,677.2 1367.7,674.8 1377.5,672.1 1386.8,669.0 1395.4,665.4 1403.8,661.6 1412.1,657.9 1420.5,654.0 1428.8,650.2 1437.1,646.3 1445.4,642.3 1453.7,638.3 1462.0,634.2 1470.1,629.9 1478.0,625.4 1485.8,620.7 1493.4,615.9 1500.9,610.8 1508.3,605.6 1515.8,600.3 1523.3,594.9 1526.3,592.8 1529.3,590.7 1532.3,588.6 1535.4,586.5 1538.4,584.4 1541.4,582.4 1544.4,580.4 1547.4,578.3 1550.4,575.9 1553.4,573.2 1556.5,570.1 1559.6,566.6 1562.7,562.9 1565.8,558.9 1568.9,554.7 1572.1,550.3 1575.2,545.7 1578.3,541.0 1581.5,536.2 1584.6,531.3"/><polyline points="1234.5,700.1 1244.6,699.0 1254.7,697.9 1264.8,696.6 1274.9,695.2 1285.0,693.6 1295.0,691.8 1305.0,689.8 1315.0,687.8 1325.2,685.8 1335.5,683.8 1345.9,681.8 1356.2,679.6 1366.3,677.2 1376.1,674.5 1385.3,671.4 1394.0,667.8 1402.3,664.1 1410.6,660.3 1419.0,656.5 1427.3,652.7 1435.6,648.8 1443.9,644.8 1452.2,640.8 1460.5,636.7 1468.6,632.5 1476.5,628.0 1484.3,623.3 1491.9,618.4 1499.5,613.3 1507.0,608.1 1514.5,602.8 1522.0,597.4 1525.1,595.2 1528.1,593.1 1531.1,591.0 1534.2,588.9 1537.2,586.8 1540.2,584.7 1543.3,582.7 1546.3,580.6 1549.4,578.1 1552.4,575.2 1555.6,572.0 1558.7,568.4 1561.8,564.5 1565.0,560.4 1568.2,556.0 1571.4,551.4 1574.6,546.7 1577.8,541.8 1581.0,536.8 1584.2,531.8"/><polyline points="1234.4,701.9 1244.4,700.9 1254.4,699.8 1264.4,698.6 1274.4,697.2 1284.3,695.6 1294.3,693.9 1304.2,691.9 1314.1,689.9 1324.2,687.9 1334.4,686.0 1344.7,683.9 1354.9,681.7 1364.9,679.3 1374.6,676.6 1383.8,673.5 1392.4,669.9 1400.7,666.2 1409.0,662.5 1417.4,658.7 1425.7,654.9 1434.0,651.0 1442.3,647.1 1450.6,643.1 1458.9,639.0 1467.0,634.7 1475.0,630.3 1482.7,625.6 1490.4,620.7 1498.0,615.6 1505.5,610.4 1513.1,605.1 1520.7,599.6 1523.7,597.5 1526.8,595.3 1529.9,593.1 1532.9,591.0 1536.0,588.9 1539.0,586.8 1542.1,584.7 1545.2,582.6 1548.3,580.0 1551.4,577.1 1554.6,573.7 1557.7,570.0 1560.9,566.0 1564.2,561.7 1567.4,557.1 1570.7,552.4 1573.9,547.5 1577.2,542.4 1580.4,537.3 1583.7,532.1"/><polyline points="1234.2,703.6 1244.2,702.6 1254.1,701.6 1263.9,700.4 1273.8,699.1 1283.7,697.5 1293.5,695.8 1303.3,693.8 1313.1,691.8 1323.1,689.8 1333.2,687.9 1343.4,685.8 1353.5,683.6 1363.4,681.2 1373.0,678.5 1382.1,675.3 1390.7,671.8 1399.0,668.1 1407.4,664.4 1415.7,660.6 1424.0,656.8 1432.3,653.0 1440.6,649.0 1448.9,645.1 1457.2,641.0 1465.3,636.7 1473.3,632.3 1481.1,627.6 1488.8,622.7 1496.4,617.6 1504.0,612.4 1511.6,607.1 1519.3,601.6 1522.3,599.4 1525.4,597.2 1528.5,595.1 1531.6,592.9 1534.7,590.8 1537.8,588.7 1540.9,586.5 1544.0,584.4 1547.1,581.8 1550.3,578.7 1553.5,575.2 1556.7,571.4 1560.0,567.2 1563.3,562.8 1566.6,558.1 1569.9,553.2 1573.2,548.2 1576.5,543.0 1579.8,537.7 1583.2,532.4"/><polyline points="1234.1,705.1 1243.9,704.2 1253.7,703.2 1263.5,702.1 1273.2,700.7 1283.0,699.2 1292.7,697.5 1302.4,695.6 1312.1,693.5 1322.0,691.5 1332.0,689.6 1342.0,687.5 1352.0,685.3 1361.8,682.8 1371.3,680.1 1380.4,676.9 1389.0,673.4 1397.3,669.7 1405.6,666.0 1413.9,662.3 1422.2,658.5 1430.5,654.7 1438.8,650.7 1447.1,646.8 1455.4,642.7 1463.6,638.5 1471.6,634.0 1479.4,629.3 1487.1,624.4 1494.8,619.4 1502.5,614.2 1510.1,608.8 1517.8,603.3 1520.9,601.1 1524.0,599.0 1527.1,596.8 1530.2,594.6 1533.3,592.4 1536.5,590.3 1539.6,588.1 1542.7,585.9 1545.9,583.2 1549.1,580.1 1552.4,576.5 1555.7,572.6 1559.0,568.3 1562.3,563.7 1565.7,558.9 1569.1,553.9 1572.4,548.7 1575.8,543.4 1579.2,538.0 1582.6,532.6"/><polyline points="1234.0,706.5 1243.7,705.7 1253.4,704.7 1263.0,703.5 1272.6,702.2 1282.3,700.7 1291.9,699.0 1301.5,697.1 1311.1,695.0 1320.8,693.0 1330.7,691.0 1340.6,688.9 1350.5,686.7 1360.1,684.2 1369.5,681.4 1378.6,678.3 1387.1,674.8 1395.4,671.1 1403.8,667.4 1412.1,663.7 1420.4,659.9 1428.7,656.1 1437.0,652.2 1445.3,648.2 1453.6,644.1 1461.7,639.9 1469.7,635.4 1477.6,630.8 1485.4,625.9 1493.1,620.9 1500.8,615.6 1508.5,610.3 1516.2,604.8 1519.4,602.6 1522.5,600.4 1525.6,598.2 1528.8,596.0 1531.9,593.8 1535.1,591.6 1538.2,589.5 1541.4,587.2 1544.7,584.5 1547.9,581.3 1551.2,577.6 1554.6,573.6 1557.9,569.2 1561.3,564.5 1564.7,559.6 1568.2,554.4 1571.6,549.1 1575.1,543.7 1578.5,538.2 1582.0,532.8"/><polyline points="1233.9,707.8 1243.5,707.0 1253.0,706.0 1262.5,704.9 1272.0,703.6 1281.5,702.1 1291.0,700.3 1300.5,698.4 1310.0,696.3 1319.6,694.3 1329.4,692.2 1339.1,690.1 1348.8,687.8 1358.4,685.3 1367.7,682.5 1376.7,679.3 1385.2,675.8 1393.5,672.2 1401.8,668.5 1410.1,664.8 1418.4,661.0 1426.7,657.2 1435.0,653.3 1443.3,649.3 1451.6,645.3 1459.8,641.1 1467.8,636.6 1475.7,632.0 1483.6,627.1 1491.3,622.1 1499.1,616.9 1506.8,611.5 1514.6,606.0 1517.8,603.8 1520.9,601.6 1524.1,599.4 1527.2,597.2 1530.4,595.0 1533.6,592.8 1536.8,590.6 1540.1,588.3 1543.3,585.5 1546.6,582.3 1550.0,578.5 1553.4,574.4 1556.8,569.9 1560.3,565.1 1563.7,560.1 1567.2,554.8 1570.7,549.4 1574.2,543.9 1577.8,538.4 1581.3,532.8"/><polyline points="1233.9,709.0 1243.3,708.1 1252.7,707.1 1262.0,706.0 1271.4,704.7 1280.8,703.2 1290.2,701.4 1299.5,699.4 1308.9,697.4 1318.4,695.3 1328.0,693.2 1337.6,691.0 1347.2,688.7 1356.6,686.2 1365.8,683.3 1374.7,680.1 1383.2,676.6 1391.5,673.0 1399.8,669.3 1408.1,665.6 1416.4,661.9 1424.7,658.1 1433.0,654.2 1441.3,650.2 1449.6,646.1 1457.8,641.9 1465.8,637.5 1473.8,632.9 1481.7,628.0 1489.5,623.0 1497.3,617.8 1505.1,612.5 1512.9,607.0 1516.1,604.8 1519.3,602.6 1522.5,600.3 1525.7,598.1 1528.9,595.9 1532.1,593.7 1535.4,591.4 1538.6,589.1 1541.9,586.3 1545.3,583.0 1548.7,579.2 1552.1,575.0 1555.6,570.4 1559.1,565.6 1562.7,560.4 1566.2,555.1 1569.8,549.6 1573.4,544.0 1577.0,538.4 1580.5,532.8"/><path stroke-width="0.8" d="M1236.7 669.2L1308.4 663.7M1236.0 679.3L1306.4 676.9M1235.3 689.3L1303.5 688.8M1234.6 698.9L1299.1 698.1M1234.0 707.2L1293.2 702.0M1233.6 712.3L1286.7 699.3M1233.6 712.9L1281.2 691.1M1233.8 709.4L1277.7 678.4M1234.4 701.9L1276.1 664.3M1235.0 692.6L1275.8 650.1M1235.7 682.7L1276.4 636.0M1236.5 672.6L1276.7 631.4M1309.6 650.0L1393.0 643.0M1308.4 663.7L1389.8 657.8M1306.4 676.9L1384.4 670.6M1303.5 688.8L1375.8 679.5M1299.1 698.1L1363.6 681.1M1293.2 702.0L1350.0 674.4M1286.7 699.3L1337.8 661.6M1281.2 691.1L1329.7 644.5M1277.7 678.4L1325.4 626.7M1276.1 664.3L1323.9 609.3M1275.8 650.1L1324.1 592.7M1276.4 636.0L1324.4 587.3M1394.6 627.1L1457.0 612.6M1393.0 643.0L1453.8 628.2M1389.8 657.8L1448.2 641.7M1384.4 670.6L1439.3 651.2M1375.8 679.5L1426.7 653.0M1363.6 681.1L1412.7 646.1M1350.0 674.4L1400.1 632.8M1337.8 661.6L1391.8 615.0M1329.7 644.5L1387.4 596.3M1325.4 626.7L1385.9 578.1M1323.9 609.3L1386.1 560.6M1324.1 592.7L1386.5 554.9M1458.7 595.9L1521.7 573.9M1457.0 612.6L1518.7 589.0M1453.8 628.2L1513.8 602.4M1448.2 641.7L1506.1 612.0M1439.3 651.2L1495.3 614.5M1426.7 653.0L1483.3 608.7M1412.7 646.1L1472.6 596.7M1400.1 632.8L1465.5 580.0M1391.8 615.0L1461.9 562.3M1387.4 596.3L1460.7 545.0M1385.9 578.1L1461.1 528.2M1386.1 560.6L1461.4 522.7M1523.2 557.7L1559.0 549.4M1521.7 573.9L1556.7 562.8M1518.7 589.0L1553.1 574.0M1513.8 602.4L1547.3 581.8M1506.1 612.0L1538.7 583.6M1495.3 614.5L1527.0 577.8M1483.3 608.7L1518.1 568.1M1472.6 596.7L1512.8 555.2M1465.5 580.0L1510.2 541.0M1461.9 562.3L1509.5 526.4M1460.7 545.0L1510.0 510.7M1461.1 528.2L1510.5 504.3M1560.5 532.6L1587.0 523.9M1559.0 549.4L1586.1 528.5M1556.7 562.8L1584.5 531.5M1553.1 574.0L1581.6 532.8M1547.3 581.8L1576.3 531.4M1538.7 583.6L1560.4 522.6M1527.0 577.8L1553.8 517.7M1518.1 568.1L1550.7 513.4M1512.8 555.2L1549.2 509.0M1510.2 541.0L1548.7 504.1M1509.5 526.4L1549.0 497.1M1510.0 510.7L1549.4 490.8"/><polyline points="1309.6,650.0 1309.0,656.9 1308.5,662.3 1307.9,667.2 1307.3,671.8 1306.6,675.9 1305.9,679.8 1305.0,683.4 1304.1,686.7 1303.2,689.7 1302.2,692.3 1301.1,694.7 1300.0,696.7 1298.9,698.4 1297.7,699.8 1296.4,700.9 1295.1,701.6 1293.7,702.0 1292.3,702.0 1290.8,701.6 1288.9,700.7 1287.0,699.5 1285.5,698.1 1284.2,696.6 1283.0,694.7 1281.9,692.7 1280.9,690.3 1279.9,687.7 1279.1,684.9 1278.4,681.8 1277.7,678.4 1277.1,674.9 1276.7,671.1 1276.3,667.1 1276.0,662.9 1275.9,658.5 1275.8,653.9 1275.8,649.0 1276.0,643.9 1276.3,638.3 1276.7,631.4"/><polyline points="1309.6,650.0 1276.7,631.4"/><polyline points="1394.6,627.1 1394.0,635.1 1393.2,641.4 1392.4,647.0 1391.3,652.1 1390.1,656.7 1388.8,661.0 1387.3,664.9 1385.7,668.4 1383.9,671.4 1382.0,674.1 1379.9,676.4 1377.7,678.3 1375.4,679.8 1372.9,680.8 1370.4,681.4 1367.7,681.6 1364.9,681.3 1361.8,680.5 1358.6,679.3 1354.5,677.2 1350.5,674.7 1347.3,672.3 1344.5,669.7 1341.8,666.9 1339.4,663.8 1337.1,660.5 1335.0,656.8 1333.0,653.0 1331.3,648.9 1329.7,644.5 1328.3,639.9 1327.1,635.1 1326.0,630.1 1325.2,624.9 1324.5,619.5 1324.1,613.9 1323.8,608.1 1323.8,602.0 1324.0,595.4 1324.4,587.3"/><polyline points="1394.6,627.1 1324.4,587.3"/><polyline points="1458.7,595.9 1458.0,604.3 1457.3,610.9 1456.4,616.8 1455.3,622.2 1454.1,627.1 1452.7,631.6 1451.1,635.7 1449.4,639.4 1447.6,642.6 1445.6,645.5 1443.5,647.9 1441.2,649.9 1438.8,651.5 1436.3,652.6 1433.7,653.3 1430.9,653.5 1428.0,653.2 1424.9,652.5 1421.5,651.2 1417.4,649.0 1413.2,646.5 1410.0,644.0 1407.0,641.3 1404.3,638.4 1401.7,635.2 1399.4,631.7 1397.2,627.9 1395.2,623.8 1393.4,619.5 1391.8,615.0 1390.4,610.2 1389.1,605.2 1388.0,599.9 1387.2,594.5 1386.5,588.8 1386.1,582.9 1385.8,576.8 1385.8,570.3 1386.0,563.4 1386.5,554.9"/><polyline points="1458.7,595.9 1386.5,554.9"/><polyline points="1523.2,557.7 1522.6,565.9 1521.9,572.2 1521.0,577.9 1520.1,583.2 1519.0,588.0 1517.8,592.4 1516.4,596.4 1514.9,600.0 1513.3,603.3 1511.6,606.2 1509.7,608.6 1507.8,610.7 1505.7,612.3 1503.5,613.5 1501.3,614.3 1498.9,614.7 1496.4,614.6 1493.7,614.1 1490.8,613.0 1487.3,611.2 1483.7,609.0 1480.9,606.9 1478.4,604.5 1476.1,601.8 1473.9,598.9 1471.9,595.6 1470.1,592.1 1468.4,588.4 1466.9,584.3 1465.5,580.1 1464.3,575.5 1463.3,570.8 1462.4,565.8 1461.7,560.6 1461.2,555.2 1460.9,549.6 1460.7,543.7 1460.7,537.6 1460.9,530.9 1461.4,522.7"/><polyline points="1523.2,557.7 1461.4,522.7"/><polyline points="1560.5,532.6 1559.8,541.8 1559.2,547.9 1558.5,553.1 1557.8,557.7 1556.9,561.9 1556.0,565.7 1555.0,569.0 1553.9,572.1 1552.7,574.7 1551.4,577.1 1550.0,579.1 1548.5,580.7 1547.0,582.0 1545.3,583.0 1543.5,583.6 1541.6,583.9 1539.6,583.8 1537.4,583.2 1534.8,582.2 1531.1,580.3 1527.4,578.0 1524.9,576.2 1522.8,574.2 1520.9,572.1 1519.2,569.8 1517.6,567.3 1516.2,564.6 1514.9,561.7 1513.8,558.5 1512.8,555.2 1511.9,551.6 1511.2,547.9 1510.6,543.9 1510.1,539.6 1509.8,535.2 1509.6,530.4 1509.5,525.3 1509.6,519.8 1509.9,513.5 1510.5,504.3"/><polyline points="1560.5,532.6 1510.5,504.3"/><polyline points="1588.0,512.6 1587.4,520.5 1587.1,523.3 1586.8,525.3 1586.5,526.9 1586.2,528.2 1585.8,529.4 1585.3,530.3 1584.8,531.0 1584.3,531.7 1583.7,532.1 1583.0,532.5 1582.3,532.7 1581.5,532.8 1580.5,532.8 1579.5,532.6 1578.4,532.2 1577.0,531.7 1575.3,530.9 1573.1,529.8 1566.9,526.3 1560.8,522.8 1558.6,521.5 1556.9,520.3 1555.6,519.3 1554.5,518.4 1553.5,517.4 1552.7,516.5 1551.9,515.5 1551.3,514.5 1550.7,513.4 1550.2,512.3 1549.8,511.2 1549.4,509.9 1549.2,508.6 1548.9,507.1 1548.8,505.5 1548.7,503.7 1548.8,501.5 1548.9,498.6 1549.4,490.8"/><polyline points="1588.0,512.6 1549.4,490.8"/></g><g stroke="#fff" stroke-width="1.3" fill="none"><path d="M1263.9 376.4 H1276.9 M1270.4 369.9 V382.9"/><path d="M1364.8 366.3 H1377.8 M1371.3 359.8 V372.8"/><path d="M1352.9 388.4 H1365.9 M1359.4 381.9 V394.9"/><path d="M1367.0 396.3 H1380.0 M1373.5 389.8 V402.8"/><path d="M1444.9 473.5 H1457.9 M1451.4 467.0 V480.0"/><path d="M1567.0 475.8 H1580.0 M1573.5 469.3 V482.3"/><path d="M1570.0 475.8 H1583.0 M1576.5 469.3 V482.3"/><path d="M1007.0 583.4 H1020.0 M1013.5 576.9 V589.9"/><path d="M1019.8 594.3 H1032.8 M1026.3 587.8 V600.8"/><path d="M1023.3 598.2 H1036.3 M1029.8 591.7 V604.7"/><path d="M1027.0 598.2 H1040.0 M1033.5 591.7 V604.7"/><path d="M1040.9 601.4 H1053.9 M1047.4 594.9 V607.9"/><path d="M1201.3 695.2 H1214.3 M1207.8 688.7 V701.7"/><path d="M1250.8 721.4 H1263.8 M1257.3 714.9 V727.9"/></g><g stroke="#fff" stroke-width="1.2" fill="none"><path d="M1128.7 680.6 L1140.5 612 M1133 620.7 L1140.5 612 L1144.6 622.4"/><path d="M1135.6 594 L1142.5 602.3 L1150.2 594 M1142.5 602.3 V610.6"/><path d="M1128.7 680.6 L1065.6 647.4" stroke-dasharray="3 1.5"/><path d="M1076.7 646 L1065.6 647.4 L1071.9 656.4"/><path d="M1049 634.2 H1063.6 L1049.7 650.4 H1063.8"/><path d="M1128.7 680.6 L1080.2 707.6 M1083.6 701.4 L1080.2 707.6 L1087.8 708"/><path d="M1065 704.2 L1080.2 720.8 M1080.2 704.2 L1065 720.8"/></g></g><g fill="none" stroke-width="1.2"><path d="M1648.8 800.9 L1637 868.9" stroke="#5ad24a"/><path d="M1609.9 815.5 L1643.2 832.1" stroke="#2a2aa0"/><path d="M1616.9 847.4 L1643.2 833.5" stroke="#c83a2a"/><rect x="1638.5" y="828.5" width="8" height="10" stroke="#fff"/><path d="M1646 831.5 H1649" stroke="#e05020"/><path d="M1646 835.5 H1649" stroke="#2030c0"/></g><g transform="translate(7.4 118.4) scale(0.95)"><path d="M3 3 L13 13" stroke="#1a1a1a" stroke-width="1.2" fill="none"/><circle cx="3" cy="3" r="1.6" fill="#e8d040" stroke="#333" stroke-width="0.9"/><circle cx="13" cy="13" r="1.6" fill="#e8d040" stroke="#333" stroke-width="0.9"/></g><g transform="translate(7.4 144.4) scale(0.95)"><path d="M1 1 L15 15" stroke="#1a1a1a" stroke-width="1.2" fill="none"/><path d="M1 1 l4 0 M1 1 l0 4 M15 15 l-4 0 M15 15 l0 -4" stroke="#1a1a1a" stroke-width="1.2" fill="none"/><circle cx="8" cy="8" r="1.6" fill="#e8d040" stroke="#333" stroke-width="0.9"/></g><g transform="translate(7.4 170.4) scale(0.95)"><path d="M4 2 H12 L15.5 8 L12 14 H4 L0.5 8 Z" stroke="#1a1a1a" stroke-width="1.2" fill="none"/></g><g transform="translate(7.4 196.4) scale(0.95)"><rect x="2" y="4" width="12" height="9" stroke="#1a1a1a" stroke-width="1.2" fill="none"/><circle cx="2" cy="4" r="1.4" fill="#e8d040" stroke="#333" stroke-width="0.9"/><circle cx="14" cy="13" r="1.4" fill="#e8d040" stroke="#333" stroke-width="0.9"/></g><g transform="translate(7.4 222.4) scale(0.95)"><path d="M4 11 C2 4 12 2 13 8" stroke="#1a1a1a" stroke-width="1.2" fill="none"/><circle cx="4" cy="11" r="1.6" fill="#e8d040" stroke="#333" stroke-width="0.9"/><circle cx="13" cy="8" r="1.6" fill="#e8d040" stroke="#333" stroke-width="0.9"/><circle cx="8" cy="14" r="1.6" fill="#e8d040" stroke="#333" stroke-width="0.9"/></g><g transform="translate(7.4 248.4) scale(0.95)"><path d="M2 3 C8 3 13 8 13 14" stroke="#1a1a1a" stroke-width="1.2" fill="none"/><circle cx="2" cy="3" r="1.6" fill="#e8d040" stroke="#333" stroke-width="0.9"/><circle cx="9" cy="6" r="1.6" fill="#e8d040" stroke="#333" stroke-width="0.9"/><circle cx="13" cy="14" r="1.6" fill="#e8d040" stroke="#333" stroke-width="0.9"/></g><g transform="translate(7.4 275.4) scale(0.95)"><circle cx="8" cy="8" r="6.5" stroke="#1a1a1a" stroke-width="1.2" fill="none"/><path d="M7 7 L11 11" stroke="#1a1a1a" stroke-width="1.2" fill="none"/><circle cx="7" cy="7" r="1.3" fill="#e8d040" stroke="#333" stroke-width="0.9"/><circle cx="11" cy="11" r="1.3" fill="#e8d040" stroke="#333" stroke-width="0.9"/></g><g transform="translate(7.4 301.4) scale(0.95)"><ellipse cx="8" cy="8" rx="7" ry="4.5" transform="rotate(-35 8 8)" stroke="#1a1a1a" stroke-width="1.2" fill="none"/><path d="M8 5 V11 M5 8 H11" stroke="#1a1a1a" stroke-width="1.2" fill="none"/><circle cx="2" cy="13" r="1.6" fill="#e8d040" stroke="#333" stroke-width="0.9"/><circle cx="14" cy="3" r="1.6" fill="#e8d040" stroke="#333" stroke-width="0.9"/></g><g transform="translate(7.4 327.4) scale(0.95)"><path d="M2 13 C2 5 12 1 13 6" stroke="#1a1a1a" stroke-width="1.2" fill="none"/><path d="M8 7 V13 M5 10 H11" stroke="#1a1a1a" stroke-width="1.2" fill="none"/><circle cx="2" cy="13" r="1.6" fill="#e8d040" stroke="#333" stroke-width="0.9"/><circle cx="11" cy="13" r="1.6" fill="#e8d040" stroke="#333" stroke-width="0.9"/></g><g transform="translate(7.4 352.4) scale(0.95)"><circle cx="3" cy="3" r="1.6" fill="#e8d040" stroke="#333" stroke-width="0.9"/><circle cx="8" cy="5" r="1.6" fill="#e8d040" stroke="#333" stroke-width="0.9"/><circle cx="13" cy="8" r="1.6" fill="#e8d040" stroke="#333" stroke-width="0.9"/><circle cx="5" cy="10" r="1.6" fill="#e8d040" stroke="#333" stroke-width="0.9"/><circle cx="10" cy="13" r="1.6" fill="#e8d040" stroke="#333" stroke-width="0.9"/><circle cx="3" cy="14" r="1.6" fill="#e8d040" stroke="#333" stroke-width="0.9"/></g><g transform="translate(7.4 378.4) scale(0.95)"><path d="M2 14 C2 8 7 8 8 8 C10 8 14 7 14 2" stroke="#1a1a1a" stroke-width="1.3" fill="none"/><circle cx="2" cy="14" r="1.6" fill="#e8d040" stroke="#333" stroke-width="0.9"/><circle cx="14" cy="2" r="1.6" fill="#e8d040" stroke="#333" stroke-width="0.9"/></g><g transform="translate(7.4 404.4) scale(0.95)"><rect x="1" y="2" width="14" height="12" fill="#d0d0d8"/><path d="M1 8 L7 2 M1 14 L13 2 M5 14 L15 4 M11 14 L15 10" stroke="#777780" stroke-width="1.2"/></g><g transform="translate(7.4 430.4) scale(0.95)"><rect x="1" y="1" width="12" height="12" fill="#fff" stroke="#777" stroke-width="0.8"/><text x="2" y="11" font-size="10" font-family="Liberation Serif">A</text><circle cx="10.5" cy="4" r="1.5" fill="none" stroke="#555" stroke-width="0.8"/><circle cx="12" cy="12.5" r="3.5" fill="#28a828"/><path d="M12 10.5 V14.5 M10 12.5 H14" stroke="#fff" stroke-width="1.3"/></g><g transform="translate(7.4 456.4) scale(0.95)"><path d="M2 4 Q2 1 6 1 H12 Q15 1 15 5 V10 L10 15 H4 Q2 15 2 12 Z" fill="#f0d060" stroke="#8a7020" stroke-width="0.9"/><path d="M5 9 Q5 5 9 5 H11 V9 L8 11 Z" fill="none" stroke="#8a7020" stroke-width="1"/></g><g transform="translate(7.4 482.4) scale(0.95)"><rect x="1" y="1" width="14" height="14" fill="#fff" stroke="#888" stroke-width="0.8"/><text x="3" y="8" font-size="7" font-weight="bold" font-family="Liberation Sans">A</text><path d="M3 10.5 H13 M3 13 H13 M9 4.5 H13 M9 7 H13" stroke="#888" stroke-width="0.8"/></g><g transform="translate(7.4 508.4) scale(0.95)"><rect x="1" y="4" width="14" height="9" fill="#fff" stroke="#888" stroke-width="0.8"/><text x="3" y="11" font-size="7" font-weight="bold" font-family="Liberation Sans">A</text><path d="M9 10.5 H13" stroke="#888" stroke-dasharray="1 1"/></g><g transform="translate(7.4 534.4) scale(0.95)"><rect x="1" y="2" width="13" height="12" fill="none" stroke="#222" stroke-dasharray="2 1"/><path d="M3 15 L14 4 L16 6 L5 16 Z" fill="#f0c840" stroke="#7a6010" stroke-width="0.8"/></g><g transform="translate(7.4 560.4) scale(0.95)"><path d="M2 3 q2 -2 4 0 q2 -2 4 0 q2 -2 4 0 q2 2 0 4 q2 2 0 4 q2 2 0 4 q-2 2 -4 0 q-2 2 -4 0 q-2 2 -4 0 q-2 -2 0 -4 q-2 -2 0 -4 q-2 -2 0 -4 Z" stroke="#1a1a1a" stroke-width="1.2" fill="none"/></g><g transform="translate(7.4 586.4) scale(0.95)"><path d="M5 2 q3 -2 6 0 q3 1 3 4 q2 3 0 5 q-1 3 -4 3 q-3 2 -6 0 q-3 -1 -3 -4 q-2 -3 0 -5 q1 -3 4 -3 Z" stroke="#1a1a1a" stroke-width="1.2" fill="none"/></g><g transform="translate(7.4 613.4) scale(0.95)"><path d="M6 1 q3 -1 4 2 q4 -1 4 3 q2 3 -1 5 q1 4 -3 4 q-2 2 -5 0 q-4 1 -4 -3 q-2 -3 1 -5 q-1 -4 4 -4 Z" stroke="#1a1a1a" stroke-width="1.2" fill="none"/></g><g transform="translate(38.4 118.4) scale(0.95)"><path d="M3 3 H13 M3 3 V13" stroke="#222" stroke-width="1" stroke-dasharray="1.2 1.2" fill="none"/><circle cx="3" cy="3" r="1.7" fill="#b06080"/><circle cx="13" cy="3" r="1.6" fill="#fff" stroke="#222"/><circle cx="3" cy="13" r="1.6" fill="#fff" stroke="#222"/></g><g transform="translate(38.4 145.4) scale(0.95)"><path d="M3 8 H13" stroke="#222" stroke-width="1.1"/><circle cx="3" cy="8" r="1.7" fill="#b06080"/><circle cx="13" cy="8" r="1.7" fill="#fff" stroke="#222"/></g><g transform="translate(38.4 176.4) scale(0.95)"><path d="M2 2 L14 14" stroke="#1a1a1a" stroke-width="1.2" fill="none"/><path d="M2 14 L14 2" stroke="#222" stroke-width="1.1" stroke-dasharray="2 1.5"/><circle cx="8" cy="8" r="2" fill="#b06080"/></g><g transform="translate(38.4 202.4) scale(0.95)"><path d="M2 2 L14 14 M2 14 Q8 2 14 2" stroke="#1a1a1a" stroke-width="1.2" fill="none"/><circle cx="8" cy="8" r="2" fill="#b06080"/></g><g transform="translate(38.4 228.4) scale(0.95)"><path d="M3 3 L13 13" stroke="#1a1a1a" stroke-width="1.2" fill="none"/><circle cx="3" cy="3" r="1.9" fill="#b06080"/><circle cx="13" cy="13" r="1.9" fill="#b06080"/></g><g transform="translate(38.4 254.4) scale(0.95)"><path d="M2 4 H14" stroke="#1a1a1a" stroke-width="1.2" fill="none"/><path d="M8 4 V15" stroke="#222" stroke-dasharray="1.2 1.2"/><circle cx="8" cy="4" r="1.9" fill="#b06080"/></g><g transform="translate(38.4 280.4) scale(0.95)"><path d="M2 14 L14 2" stroke="#1a1a1a" stroke-width="1.2" fill="none"/><circle cx="8" cy="8" r="2" fill="#b06080"/></g><g transform="translate(38.4 312.4) scale(0.95)"><circle cx="8" cy="8" r="6.5" stroke="#1a1a1a" stroke-width="1.2" fill="none"/><circle cx="8" cy="8" r="2" fill="#b06080"/></g><g transform="translate(38.4 338.4) scale(0.95)"><circle cx="14.0" cy="8.0" r="1.5" fill="#b06080"/><circle cx="12.244329615003199" cy="12.240951086632196" r="1.5" fill="#b06080"/><circle cx="8.0047779602644" cy="13.999998097591007" r="1.5" fill="#b06080"/><circle cx="3.7624301310799684" cy="12.247705451890592" r="1.5" fill="#b06080"/><circle cx="2.000007609634763" cy="8.00955591749892" r="1.5" fill="#b06080"/><circle cx="3.7489214048463637" cy="3.7658140359891394" r="1.5" fill="#b06080"/><circle cx="7.985666131326311" cy="2.000017121673692" r="1.5" fill="#b06080"/><circle cx="12.230799374050537" cy="3.7455509573466994" r="1.5" fill="#b06080"/><circle cx="8" cy="8" r="6" fill="none" stroke="#222" stroke-width="0.8"/></g><g transform="translate(38.4 365.4) scale(0.95)"><circle cx="6.5" cy="9.5" r="5" stroke="#222" stroke-width="1.2" fill="none"/><path d="M3 2 L15 14" stroke="#a05070" stroke-width="1.3"/></g><g transform="translate(38.4 396.4) scale(0.95)"><rect x="3" y="1" width="12" height="12" fill="#fff" stroke="#777" stroke-width="0.8"/><text x="4" y="11" font-size="10" font-family="Liberation Serif">A</text><circle cx="12.5" cy="4" r="1.5" fill="none" stroke="#555" stroke-width="0.8"/><circle cx="3" cy="13" r="1.9" fill="#b06080"/></g><g transform="translate(38.4 423.4) scale(0.95)"><path d="M3 13 L13 3" stroke="#1030c0" stroke-width="1.2" stroke-dasharray="2 1"/><path d="M10 3 L13 3 L13 6" stroke="#1030c0" fill="none"/><circle cx="3" cy="13" r="1.9" fill="#b06080"/><circle cx="13" cy="3" r="1.9" fill="#b06080"/></g><g transform="translate(38.4 449.4) scale(0.95)"><path d="M1 6 L10 15 M6 1 L15 10" stroke="#1a1a1a" stroke-width="1.2" fill="none"/></g><g transform="translate(38.4 475.4) scale(0.95)"><path d="M0.5 3.5 L12.5 15.5" stroke="#111" stroke-width="1.5"/><path d="M6 8.5 L14.5 0.5" stroke="#603040" stroke-width="1.1"/><path d="M10 5 L13.8 8.8 L9.5 13" stroke="#111" stroke-width="1.5" fill="none"/></g><g transform="translate(38.4 506.4) scale(0.95)"><path d="M2 14 L8 9 L15 2 M8 9 L15 14" stroke="#1a1a1a" stroke-width="1.2" fill="none"/><circle cx="8" cy="9" r="2" fill="#b06080"/></g><g transform="translate(38.4 533.4) scale(0.95)"><path d="M2 1 V15" stroke="#111" stroke-width="1.3"/><path d="M5 6 H13" stroke="#2040c0" stroke-dasharray="1 1"/><circle cx="14" cy="6" r="1.8" fill="#b06080"/><circle cx="7" cy="11" r="3" fill="none" stroke="#d03040" stroke-width="1.1"/><path d="M5 13 L9 9" stroke="#d03040"/></g><g transform="translate(38.4 564.4) scale(0.95)"><path d="M2 1 V15" stroke="#111" stroke-width="1.3"/><path d="M5 4 Q9 1 14 3 L13 7 L6 8 Z" fill="#e8b878" stroke="#8a6030" stroke-width="0.8"/><path d="M5 12 H13" stroke="#2040c0" stroke-dasharray="1 1"/><circle cx="14" cy="12" r="1.8" fill="#b06080"/></g><path d="M35 168.5 H58" stroke="#a8a8a8"/><path d="M35 304.5 H58" stroke="#a8a8a8"/><path d="M35 389.5 H58" stroke="#a8a8a8"/><path d="M35 499.5 H58" stroke="#a8a8a8"/><path d="M35 557.5 H58" stroke="#a8a8a8"/><g transform="translate(1656.4 119.4) scale(0.95)"><path d="M2 10 L10 2 Q12 1 14 3 Q15 5 14 6 L7 13 Q5 14 3 12 Z" fill="#f0a0a0" stroke="#c07070" stroke-width="0.8"/><path d="M1 15 H15" stroke="#555" stroke-width="1.3"/></g><g transform="translate(1656.4 144.4) scale(0.95)"><rect x="1" y="9" width="6" height="6" fill="#fff" stroke="#111"/><rect x="9" y="1" width="6" height="6" fill="#fff" stroke="#111"/><path d="M6 10 L10 6" stroke="#1030c0" stroke-width="1.3"/></g><g transform="translate(1656.4 170.4) scale(0.95)"><path d="M10 1 V15 H15 Z" fill="#fff" stroke="#111"/><path d="M7 1 L2 15 H7" stroke="#111" stroke-dasharray="1.2 1.2" fill="none"/></g><g transform="translate(1656.4 196.4) scale(0.95)"><rect x="1" y="9" width="6" height="6" fill="none" stroke="#555" stroke-dasharray="1 1"/><rect x="9" y="1" width="6" height="6" fill="#fff" stroke="#111"/><path d="M6 10 L10 6" stroke="#1030c0" stroke-width="1.3"/></g><g transform="translate(1656.4 222.4) scale(0.95)"><path d="M1 2 H14 V6 L6 15" stroke="#111" stroke-width="1.2" fill="none"/><path d="M1 6 H10 L5 12" stroke="#777" stroke-dasharray="1.2 1" fill="none"/></g><g transform="translate(1656.4 249.4) scale(0.95)"><rect x="1" y="1" width="3" height="3" fill="none" stroke="#111" stroke-width="1.1"/><rect x="1" y="6" width="3" height="3" fill="none" stroke="#111" stroke-width="1.1"/><rect x="1" y="11" width="3" height="3" fill="none" stroke="#111" stroke-width="1.1"/><rect x="6" y="1" width="3" height="3" fill="none" stroke="#111" stroke-width="1.1"/><rect x="6" y="6" width="3" height="3" fill="none" stroke="#111" stroke-width="1.1"/><rect x="6" y="11" width="3" height="3" fill="none" stroke="#111" stroke-width="1.1"/><rect x="11" y="1" width="3" height="3" fill="none" stroke="#111" stroke-width="1.1"/><rect x="11" y="6" width="3" height="3" fill="none" stroke="#111" stroke-width="1.1"/><rect x="11" y="11" width="3" height="3" fill="none" stroke="#111" stroke-width="1.1"/></g><g transform="translate(1656.4 275.4) scale(0.95)"><rect x="1" y="7" width="6" height="7" fill="none" stroke="#555" stroke-dasharray="1 1"/><path d="M8 7 L12 4 L15 9 L11 13 Z" fill="#fff" stroke="#111"/><path d="M4 5 Q6 1 10 3" stroke="#1030c0" fill="none" stroke-width="1.2"/></g><g transform="translate(1656.4 301.4) scale(0.95)"><rect x="1" y="1" width="14" height="14" fill="none" stroke="#111"/><rect x="1" y="8" width="7" height="7" fill="none" stroke="#555" stroke-dasharray="1 1"/><path d="M7 9 L13 3" stroke="#1030c0" stroke-width="1.2"/></g><g transform="translate(1656.4 327.4) scale(0.95)"><path d="M2 1 H7 V9 H15 V15 H2 Z" fill="#c8c8c8" stroke="#111"/><path d="M8 12 H13" stroke="#1030c0" stroke-width="1.3"/></g><g transform="translate(1656.4 353.4) scale(0.95)"><path d="M1 3 H8 Q13 3 13 9 V15" stroke="#111" stroke-width="1.5" fill="none"/><path d="M8 3 Q13 3 13 9" stroke="#4070d0" stroke-width="1.5" fill="none"/></g><g transform="translate(1656.4 379.4) scale(0.95)"><path d="M1 3 H8 Q13 3 13 9 V15" stroke="#111" stroke-width="1.5" fill="none"/><path d="M8 3 Q13 3 13 9" stroke="#4070d0" stroke-width="1.5" fill="none"/><path d="M6 8 V12 M4 10 H8" stroke="#111"/></g><g transform="translate(1656.4 405.4) scale(0.95)"><path d="M10 2 H5 Q2 2 2 6 V10 Q2 14 5 14 H10" stroke="#222" stroke-width="1.3" fill="none"/><path d="M12 5 V11" stroke="#4070d0" stroke-width="1.5" stroke-dasharray="1.5 1.5"/></g><g transform="translate(1656.4 431.4) scale(0.95)"><path d="M10 2 H5 Q2 2 2 6 V10 Q2 14 5 14 H10" stroke="#222" stroke-width="1.3" fill="none"/><path d="M12 5 V11" stroke="#4070d0" stroke-width="1.5" stroke-dasharray="1.5 1.5"/></g><g transform="translate(1656.4 456.4) scale(0.95)"><path d="M1 8 H6 M15 8 H10" stroke="#2060c0" stroke-width="1.4"/><path d="M4 5 L7 8 L4 11 M12 5 L9 8 L12 11" stroke="#2060c0" fill="none" stroke-width="1.2"/></g><g transform="translate(1656.4 482.4) scale(0.95)"><path d="M1 2 H15" stroke="#111" stroke-width="1.6"/><path d="M8 3 V15" stroke="#2050b0" stroke-width="1.4" stroke-dasharray="1.5 1.2"/></g><g transform="translate(1656.4 508.4) scale(0.95)"><path d="M3 2 L12 13 M12 2 L4 11" stroke="#222" stroke-width="1.2"/><circle cx="4" cy="13" r="2" fill="none" stroke="#222"/><circle cx="13" cy="12" r="2.5" fill="#e0c050" stroke="#222"/><path d="M1 5 H7" stroke="#2050b0"/></g><g transform="translate(1656.4 535.4) scale(0.95)"><rect x="1" y="6" width="14" height="9" fill="#b0b0b0"/><path d="M1 12 L7 6 M5 15 L14 6" stroke="#555"/><path d="M3 7 Q8 1 14 4 L12 8 L6 9 Z" fill="#e8b878" stroke="#8a6030" stroke-width="0.8"/></g><g transform="translate(1656.4 561.4) scale(0.95)"><rect x="1" y="1" width="9" height="9" fill="#f8f0a0" stroke="#a09040"/><rect x="6" y="6" width="9" height="9" fill="#d0e4f8" stroke="#6080a0"/></g><g transform="translate(1656.4 587.4) scale(0.95)"><path d="M2 8 Q7 1 14 5 L12 11 L4 12 Z" fill="#e8b878" stroke="#6a4020" stroke-width="0.9"/><circle cx="3" cy="12" r="1.4" fill="#e8d040" stroke="#333" stroke-width="0.9"/><circle cx="8" cy="14" r="1.4" fill="#e8d040" stroke="#333" stroke-width="0.9"/></g><g transform="translate(1656.4 613.4) scale(0.95)"><circle cx="7" cy="10" r="5.5" fill="#333"/><circle cx="5.5" cy="8.5" r="1.5" fill="#888"/><path d="M10 5 Q12 2 14 3" stroke="#c06020" stroke-width="1.3" fill="none"/><circle cx="14" cy="2.5" r="1.5" fill="#f08020"/></g><g transform="translate(16.0 51.0) scale(1.0)"><path d="M2 1 H9 L12 4 V15 H2 Z" fill="#fff" stroke="#888" stroke-width="0.9"/><circle cx="11" cy="12" r="4.2" fill="#30a030" stroke="#1a701a" stroke-width="0.6"/><path d="M11 9.5 V14.5 M8.5 12 H13.5" stroke="#fff" stroke-width="1.4"/></g><g transform="translate(42.0 51.0) scale(1.0)"><path d="M1 4 H6 L7 3 H13 V13 H1 Z" fill="#e0cc88" stroke="#a08850" stroke-width="0.8"/><path d="M1 13 L3 7 H15 L13 13 Z" fill="#f0e0a8" stroke="#a08850" stroke-width="0.8"/><path d="M10 8 V12 H8 L11.5 15.5 L15 12 H13 V8 Z" fill="#30b030" stroke="#1a701a" stroke-width="0.6"/></g><g transform="translate(69.0 51.0) scale(1.0)"><rect x="1" y="1" width="14" height="14" rx="1" fill="#3a70c0" stroke="#20488a" stroke-width="0.8"/><rect x="3.5" y="2" width="9" height="5" fill="#f4f4f4"/><rect x="4" y="10" width="8" height="5" fill="#d8d8d8"/><rect x="5" y="11" width="2" height="3" fill="#3a70c0"/></g><g transform="translate(102.0 51.0) scale(1.0)"><rect x="4" y="1" width="8" height="5" fill="#fff" stroke="#333" stroke-width="0.8"/><rect x="1" y="5" width="14" height="7" rx="1.5" fill="#303030"/><rect x="4" y="10" width="8" height="5" fill="#fff" stroke="#333" stroke-width="0.8"/></g><g transform="translate(129.0 51.0) scale(1.0)"><path d="M2 1 H9 L11 3 V14 H2 Z" fill="#fff" stroke="#888" stroke-width="0.9"/><circle cx="8" cy="9" r="3.5" fill="#eef" stroke="#444" stroke-width="1.1"/><path d="M10.5 11.5 L14.5 15.5" stroke="#444" stroke-width="1.6"/></g><g transform="translate(162.0 51.0) scale(1.0)"><path d="M1 10 L11 5 M3 4 L12 10" stroke="#222" stroke-width="1.1"/><circle cx="13" cy="4" r="2.3" fill="none" stroke="#8a7a40" stroke-width="1.2"/><circle cx="13" cy="11" r="2.3" fill="none" stroke="#8a7a40" stroke-width="1.2"/></g><g transform="translate(189.0 51.0) scale(1.0)"><path d="M1 1 H7 L9 3 V11 H1 Z" fill="#fff" stroke="#999" stroke-width="0.9"/><path d="M6 5 H12 L14 7 V15 H6 Z" fill="#fff" stroke="#999" stroke-width="0.9"/></g><g transform="translate(215.0 51.0) scale(1.0)"><rect x="1" y="2" width="10" height="13" rx="1" fill="#c89030" stroke="#7a5010" stroke-width="0.8"/><rect x="3.5" y="1" width="5" height="3" fill="#ddd" stroke="#555" stroke-width="0.6"/><path d="M7 7 H13 L15 9 V15.5 H7 Z" fill="#fff" stroke="#888" stroke-width="0.8"/></g><g transform="translate(243.0 51.0) scale(1.0)"><path d="M14 1 L15 2 L6 11 L5 10 Z" fill="#e0a030" stroke="#805010" stroke-width="0.6"/><path d="M5 10 L6 11 L3 15 L1 15 L2 13 Z" fill="#333"/></g><g transform="translate(276.0 51.0) scale(1.0)"><path d="M5 4 Q13 2 13 9 Q13 14 7 14" stroke="#a8a8a8" stroke-width="2.2" fill="none"/><path d="M1 4 L6 0.5 L6 8 Z" fill="#a8a8a8"/></g><g transform="translate(303.0 51.0) scale(1.0)"><path d="M11 4 Q3 2 3 9 Q3 14 9 14" stroke="#a8a8a8" stroke-width="2.2" fill="none"/><path d="M15 4 L10 0.5 L10 8 Z" fill="#a8a8a8"/></g><g transform="translate(336.0 51.0) scale(1.0)"><path d="M8 1 L11 4 H9 V7 H12 V5 L15 8 L12 11 V9 H9 V12 H11 L8 15 L5 12 H7 V9 H4 V11 L1 8 L4 5 V7 H7 V4 H5 Z" fill="#2a6ac8" stroke="#1a4a98" stroke-width="0.5"/></g><g transform="translate(362.5 51.0) scale(1.0)"><circle cx="6.5" cy="7" r="5" fill="#dbeaf8" stroke="#3a70b8" stroke-width="1.4"/><path d="M10 10.5 L14 14.5" stroke="#3a70b8" stroke-width="2"/><path d="M14 1 V8 M12.5 2.5 L14 1 L15.5 2.5 M12.5 6.5 L14 8 L15.5 6.5" stroke="#3a70b8" stroke-width="1" fill="none"/></g><g transform="translate(389.0 51.0) scale(1.0)"><circle cx="6.5" cy="7" r="5" fill="#dbeaf8" stroke="#3a70b8" stroke-width="1.4"/><path d="M9 11 L12 15" stroke="#3a70b8" stroke-width="2"/><path d="M10 3 Q15 4 13 9 L11 10" stroke="#3a70b8" stroke-width="1.4" fill="none"/></g><g transform="translate(422.5 51.0) scale(1.0)"><rect x="1" y="1" width="4" height="4" fill="#4060c0"/><rect x="6" y="1" width="4" height="4" fill="#c02020"/><rect x="11" y="1" width="4" height="4" fill="#30a040"/><path d="M1 7.5 H11 M1 10 H11" stroke="#5060d0" stroke-dasharray="1 1"/><path d="M1 13 H9" stroke="#c02020" stroke-width="1.5"/><path d="M1 15.5 H9" stroke="#20a030" stroke-width="1.5"/><text x="9.5" y="16" font-size="9" font-weight="bold" font-family="Liberation Sans">A</text></g><path d="M93.5 48 V70" stroke="#a0a0a0"/><path d="M153.5 48 V70" stroke="#a0a0a0"/><path d="M267.5 48 V70" stroke="#a0a0a0"/><path d="M327.5 48 V70" stroke="#a0a0a0"/><path d="M414.5 48 V70" stroke="#a0a0a0"/><g transform="translate(15.0 81.0) scale(1.0)"><path d="M1 8 L9 5 L15 8 L7 11 Z" fill="#f2d27a" stroke="#c9a040" stroke-width="0.8"/></g><g transform="translate(42.0 81.0) scale(1.0)"><path d="M3 6 L8 2 L15 11 L10 15 Z" fill="#f2d27a" stroke="#c9a040" stroke-width="0.8"/><path d="M3 6 L1 9 L7 15 L10 15" fill="none" stroke="#ddd"/></g><g transform="translate(74.0 81.0) scale(1.0)"><path d="M1 10 Q5 3 10 2 L15 8 Q10 9 6 15 Z" fill="#f2d27a" stroke="#c9a040" stroke-width="0.8"/><path d="M4 7 L11 12 M7 4 L13 10 M3 12 Q7 6 12 5" stroke="#c9a040" stroke-width="0.8" fill="none"/></g><g transform="translate(108.0 81.0) scale(1.0)"><path d="M1 14 V7 Q8 0 15 7 V14 Q8 8 1 14 Z" fill="#f2d27a" stroke="#c9a040" stroke-width="0.8"/><path d="M5 5 V12 M11 5 V12" stroke="#c9a040" stroke-width="0.8"/><path d="M8 0 V16" stroke="#111" stroke-width="1.2" stroke-dasharray="1.5 1"/></g><g transform="translate(135.0 81.0) scale(1.0)"><path d="M1 10 L7 4 Q11 7 15 5 L9 14 Q5 11 1 10 Z" fill="#f2d27a" stroke="#c9a040" stroke-width="0.8"/><path d="M11 1 L14 3 L12 5" stroke="#3050c0" fill="none"/></g><g transform="translate(162.0 81.0) scale(1.0)"><path d="M1 8 L8 2 L15 8 L8 14 Z" fill="#f2d27a" stroke="#c9a040" stroke-width="0.8"/><path d="M4.5 5 L11.5 11 M11.5 5 L4.5 11" stroke="#c9a040" stroke-width="0.8"/></g><g transform="translate(189.0 81.0) scale(1.0)"><path d="M1 9 L6 15 Q13 12 15 4 L9 1 Q9 6 1 9 Z" fill="#e8c050" stroke="#b08830" stroke-width="0.8"/><path d="M4 12 Q11 9 12 2" stroke="#b08830" fill="none" stroke-width="0.8"/></g><g transform="translate(228.0 81.0) scale(1.0)"><path d="M1 2 L3 1 L9 8 L7 9 Z" fill="#3a70c0" stroke="#204a88" stroke-width="0.6"/><path d="M8 7 L14 12 Q15 14 13 15 L6 9 Z" fill="#3a78d0" stroke="#204a88" stroke-width="0.8"/></g><g transform="translate(261.0 81.0) scale(1.0)"><path d="M1 5 L5 1 H15 V11 L11 15 H1 Z" fill="#fff"/><polygon points="1,5 5,1 15,1 11,5" fill="#9cc8f0"/><path d="M5 1 V11 H15 M5 11 L1 15" stroke="#333" stroke-width="0.9" fill="none"/><path d="M1 5 L5 1 H15 V11 L11 15 H1 Z M1 5 H11 V15 M11 5 L15 1" stroke="#111" stroke-width="1.3" fill="none"/></g><g transform="translate(288.0 81.0) scale(1.0)"><path d="M1 5 L5 1 H15 V11 L11 15 H1 Z" fill="#fff"/><polygon points="1,15 5,11 15,11 11,15" fill="#9cc8f0"/><path d="M5 1 V11 H15 M5 11 L1 15" stroke="#333" stroke-width="0.9" fill="none"/><path d="M1 5 L5 1 H15 V11 L11 15 H1 Z M1 5 H11 V15 M11 5 L15 1" stroke="#111" stroke-width="1.3" fill="none"/></g><g transform="translate(314.5 81.0) scale(1.0)"><path d="M1 5 L5 1 H15 V11 L11 15 H1 Z" fill="#fff"/><polygon points="1,5 5,1 5,11 1,15" fill="#9cc8f0"/><path d="M5 1 V11 H15 M5 11 L1 15" stroke="#333" stroke-width="0.9" fill="none"/><path d="M1 5 L5 1 H15 V11 L11 15 H1 Z M1 5 H11 V15 M11 5 L15 1" stroke="#111" stroke-width="1.3" fill="none"/></g><g transform="translate(341.5 81.0) scale(1.0)"><path d="M1 5 L5 1 H15 V11 L11 15 H1 Z" fill="#fff"/><polygon points="11,5 15,1 15,11 11,15" fill="#9cc8f0"/><path d="M5 1 V11 H15 M5 11 L1 15" stroke="#333" stroke-width="0.9" fill="none"/><path d="M1 5 L5 1 H15 V11 L11 15 H1 Z M1 5 H11 V15 M11 5 L15 1" stroke="#111" stroke-width="1.3" fill="none"/></g><g transform="translate(369.0 81.0) scale(1.0)"><path d="M1 5 L5 1 H15 V11 L11 15 H1 Z" fill="#fff"/><polygon points="1,5 11,5 11,15 1,15" fill="#5aa0e8"/><path d="M5 1 V11 H15 M5 11 L1 15" stroke="#333" stroke-width="0.9" fill="none"/><path d="M1 5 L5 1 H15 V11 L11 15 H1 Z M1 5 H11 V15 M11 5 L15 1" stroke="#111" stroke-width="1.3" fill="none"/></g><g transform="translate(396.0 81.0) scale(1.0)"><path d="M1 5 L5 1 H15 V11 L11 15 H1 Z" fill="#fff"/><polygon points="5,1 15,1 15,11 5,11" fill="#5aa0e8"/><path d="M5 1 V11 H15 M5 11 L1 15" stroke="#333" stroke-width="0.9" fill="none"/><path d="M1 5 L5 1 H15 V11 L11 15 H1 Z M1 5 H11 V15 M11 5 L15 1" stroke="#111" stroke-width="1.3" fill="none"/></g><g transform="translate(428.0 81.0) scale(1.0)"><circle cx="6.5" cy="7" r="5" fill="#dbeaf8" stroke="#3a70b8" stroke-width="1.4"/><path d="M9 11 L12 15" stroke="#3a70b8" stroke-width="2"/><path d="M10 3 Q15 4 13 9 L11 10" stroke="#3a70b8" stroke-width="1.4" fill="none"/></g><path d="M66.5 78 V100" stroke="#a0a0a0"/><path d="M99.5 78 V100" stroke="#a0a0a0"/><path d="M252.5 78 V100" stroke="#a0a0a0"/><path d="M420.5 78 V100" stroke="#a0a0a0"/><g transform="translate(843.0 81.0) scale(1.0)"><path d="M2 9 L9 6 L15 9 L8 12 Z" fill="#f0e080" stroke="#807020" stroke-width="0.7"/><path d="M2 11 L8 14 L15 11 V13 L8 16 L2 13 Z" fill="#a0b040" stroke="#607020" stroke-width="0.6"/><path d="M4 7 Q8 0 14 2 L13 6 L7 8 Z" fill="#e8b878" stroke="#7a5020" stroke-width="0.8"/></g><g transform="translate(205.9 187.4) scale(0.95)"><path d="M2 2 L3 13 L6 10 L9 15 L11 14 L8 9 L12 9 Z" fill="#fff" stroke="#888" stroke-width="0.9"/><path d="M1 1 V13 M4 1 V9" stroke="#888" stroke-width="0.8"/></g><g transform="translate(234.9 187.4) scale(0.95)"><rect x="1" y="1" width="10" height="8" fill="#ddd" stroke="#777" stroke-width="0.8"/><rect x="3" y="3" width="6" height="4" fill="#999"/><path d="M8 6 L9 15 L11 13 L13 16 L14 15 L12 12 L15 12 Z" fill="#fff" stroke="#777" stroke-width="0.8"/></g><g transform="translate(263.9 187.4) scale(0.95)"><rect x="1" y="1" width="10" height="8" fill="#bbb" stroke="#555" stroke-width="0.8"/><rect x="3" y="3" width="6" height="4" fill="#666"/><path d="M10 4 L6 10 H9 L7 15 L13 8 H10 L12 4 Z" fill="#f0d020" stroke="#a08010" stroke-width="0.6"/></g><g transform="translate(95.0 247.0) scale(1.0)"><circle cx="8" cy="7" r="6.5" fill="#8c8c8c"/><circle cx="6" cy="5" r="2.5" fill="#c8c8c8"/><rect x="7" y="10" width="8" height="5" rx="1" fill="#eee" stroke="#555" stroke-width="0.8"/></g><g transform="translate(95.0 267.0) scale(1.0)"><path d="M1 7 L8 4 L15 7 L8 10 Z" fill="#ddd" stroke="#999" stroke-width="0.7"/><path d="M1 9 L8 12 L15 9 M1 11 L8 14 L15 11 M1 13 L8 16 L15 13" stroke="#999" fill="none" stroke-width="0.9"/></g><g transform="translate(95.0 287.0) scale(1.0)"><path d="M1 2 H15" stroke="#222" stroke-width="1.5"/><path d="M1 6 H15 M1 10 H15 M1 14 H15" stroke="#222" stroke-width="1.5" stroke-dasharray="2 1.2"/></g><g transform="translate(95.0 307.0) scale(1.0)"><path d="M3 5 L9 2 L13 9 L7 13 Z" fill="#ccc" stroke="#888" stroke-width="0.8"/><path d="M12 2 Q16 6 12 15 Q9 16 5 14" stroke="#999" fill="none" stroke-width="1.1"/></g><g transform="translate(95.0 327.0) scale(1.0)"><path d="M1 2 H6 M9 2 H15 M1 6 H4 M6 6 H10 M12 6 H15 M1 10 H15 M1 14 H3 M5 14 H7 M9 14 H11 M13 14 H15" stroke="#222" stroke-width="1.6"/></g><g transform="translate(95.0 347.0) scale(1.0)"><path d="M1 2 H15" stroke="#333" stroke-width="2.5"/><path d="M1 7 H15" stroke="#333" stroke-width="2"/><path d="M1 11 H15" stroke="#333" stroke-width="1.5"/><path d="M1 14.5 H15" stroke="#333" stroke-width="1"/></g><g transform="translate(95.0 406.0) scale(1.0)"><rect x="1" y="3" width="13" height="12" fill="#fff" stroke="#888" stroke-width="0.8"/><path d="M3 7 H7 M3 10 H7" stroke="#555"/><path d="M4 14 L14 2" stroke="#777" stroke-width="1.6"/></g><g transform="translate(95.0 426.0) scale(1.0)"><path d="M2 1 V15 M5 1 V15" stroke="#bbb" stroke-width="1.5"/><path d="M7 15 L15 3 M10 15 L15 8" stroke="#999" stroke-width="1.8"/></g><g transform="translate(95.0 446.0) scale(1.0)"><path d="M1 15 L15 1 V15 Z" fill="#bbb"/><path d="M3 15 V12 H7 V9 H11 V6 H15" stroke="#333" fill="none" stroke-width="1.1"/><path d="M1 4 V15" stroke="#bbb" stroke-width="1.5"/></g><g transform="translate(95.0 505.0) scale(1.0)"><path d="M1.5 2 V14 M14.5 2 V14" stroke="#888" stroke-width="1.1"/><path d="M3 8 H13 M3 8 L6 5.5 M3 8 L6 10.5 M13 8 L10 5.5 M13 8 L10 10.5" stroke="#888" fill="none"/></g><g transform="translate(95.0 525.0) scale(1.0)"><path d="M2 1.5 H14 M2 14.5 H14" stroke="#888" stroke-width="1.1"/><path d="M8 3 V13 M8 3 L5.5 6 M8 3 L10.5 6 M8 13 L5.5 10 M8 13 L10.5 10" stroke="#888" fill="none"/></g><g transform="translate(95.0 545.0) scale(1.0)"><path d="M13 5 A6 6 0 1 0 13 11" stroke="#999" fill="none" stroke-width="1.1"/><circle cx="7" cy="8" r="1.5" fill="none" stroke="#999"/><text x="11" y="16" font-size="6" fill="#888" font-family="Liberation Sans">x</text></g><g transform="translate(95.0 565.0) scale(1.0)"><path d="M13 5 A6 6 0 1 0 13 11" stroke="#999" fill="none" stroke-width="1.1"/><circle cx="7" cy="8" r="1.5" fill="none" stroke="#999"/><text x="11" y="16" font-size="6" fill="#888" font-family="Liberation Sans">Y</text></g><g transform="translate(95.0 585.0) scale(1.0)"><path d="M13 5 A6 6 0 1 0 13 11" stroke="#999" fill="none" stroke-width="1.1"/><circle cx="7" cy="8" r="1.5" fill="none" stroke="#999"/><text x="11" y="16" font-size="6" fill="#888" font-family="Liberation Sans">z</text></g><g transform="translate(95.0 643.0) scale(1.0)"><rect x="0" y="0" width="16" height="16" fill="#d8d8d8"/><path d="M6 3 V11 H13 M6 11 L2 14" stroke="#555" stroke-width="1.3" fill="none"/><path d="M4.5 4.5 L6 2 L7.5 4.5" stroke="#555" fill="none"/></g><g transform="translate(95.0 664.0) scale(1.0)"><path d="M7 2 V11 H15 M7 11 L2 15" stroke="#333" stroke-width="1.9" fill="none"/><path d="M4.5 4.5 L7 1 L9.5 4.5 M12.5 8.5 L16 11 L12.5 13.5" stroke="#333" fill="none" stroke-width="1.3"/></g><g transform="translate(95.0 684.0) scale(1.0)"><path d="M6 2 V10 H13 M6 10 L2 13" stroke="#333" stroke-width="1.7" fill="none"/><path d="M4 4 L6 1 L8 4" stroke="#333" fill="none" stroke-width="1.2"/><text x="8" y="16" font-size="6" fill="#555" font-family="Liberation Sans">0,0</text></g><g transform="translate(95.0 704.0) scale(1.0)"><rect x="1" y="2" width="14" height="13" fill="#f4f4f4" stroke="#aaa" stroke-width="0.8"/><path d="M2 11 L6 7 L9 9 L14 4" stroke="#999" fill="none"/><path d="M2 12 H14 M2 14 H14" stroke="#bbb"/></g></svg>
</body></html>
